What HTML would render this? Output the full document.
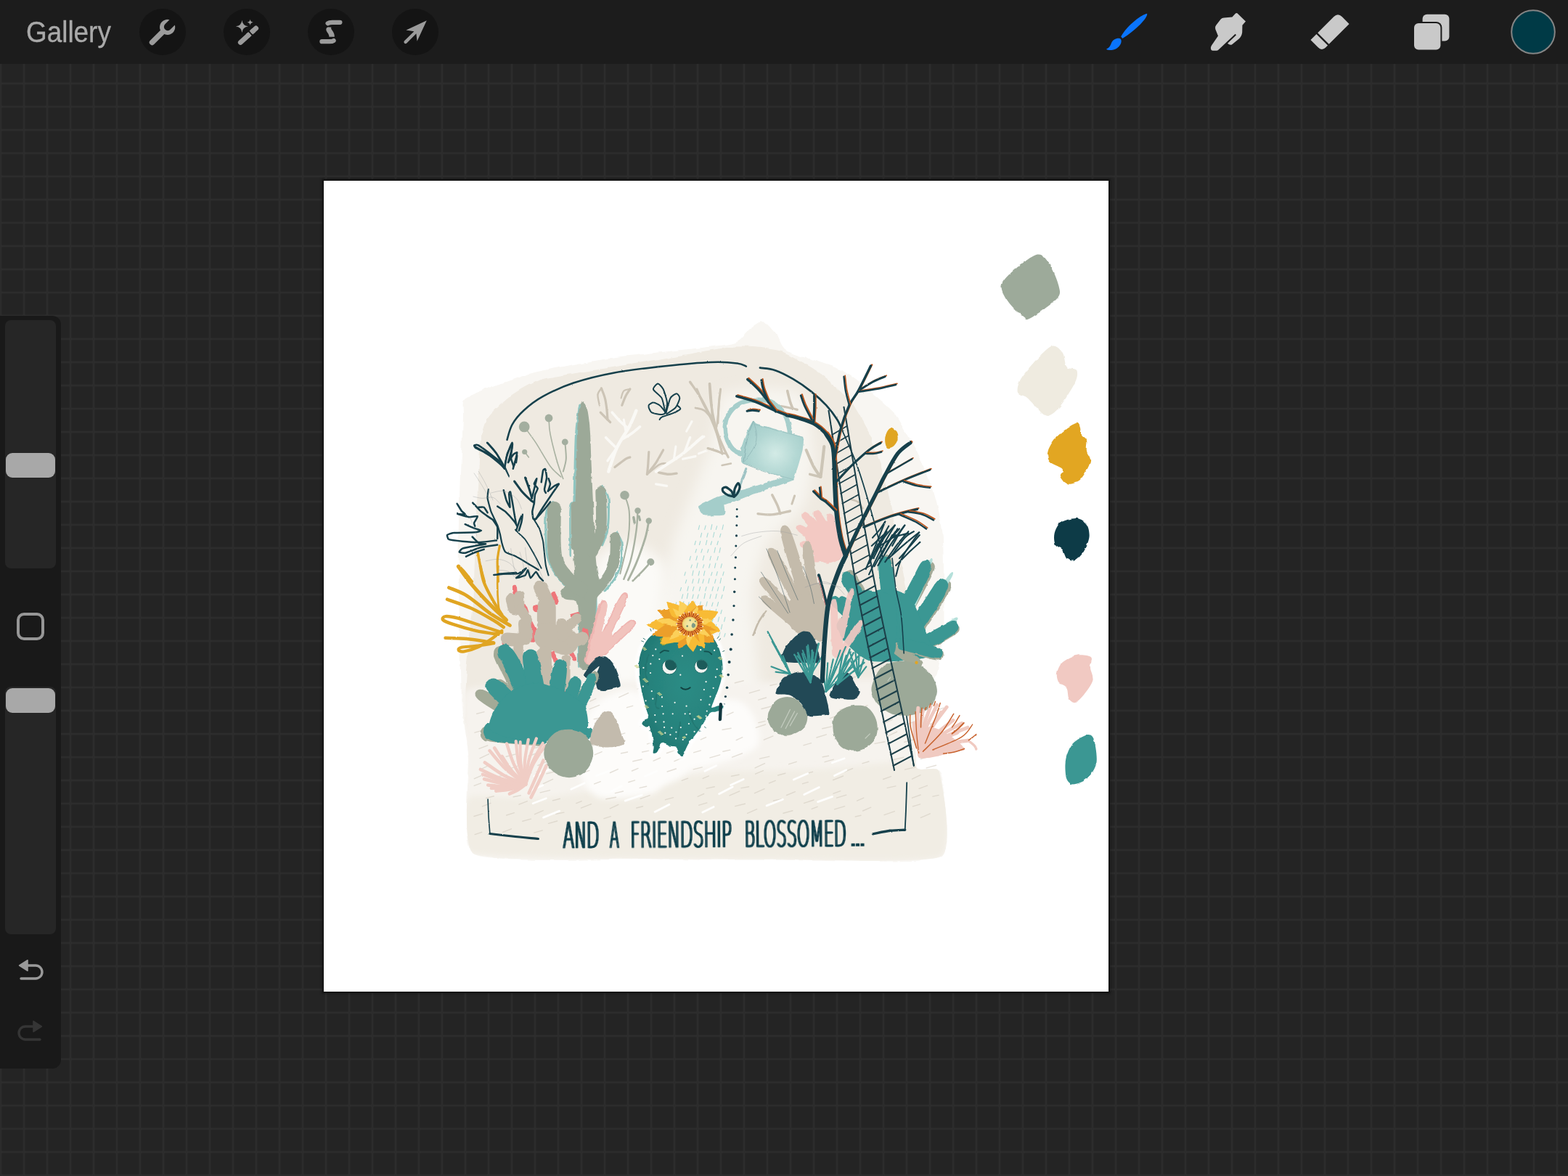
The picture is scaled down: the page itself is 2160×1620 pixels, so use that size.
<!DOCTYPE html>
<html lang="en">
<head>
<meta charset="utf-8">
<title>Procreate – And a friendship blossomed</title>
<style>
*{box-sizing:border-box;margin:0;padding:0}
html,body{width:2160px;height:1620px;overflow:hidden;background:#242424}
body{position:relative;font-family:"Liberation Sans",sans-serif}
#grid{position:absolute;left:0;top:0;width:2160px;height:1620px;
 background-color:#242424;
 background-image:
  linear-gradient(to right,rgba(255,255,255,.012) 0,rgba(255,255,255,.012) 1px,#2c2c2c 1px,#2c2c2c 3px,rgba(255,255,255,.012) 3px,rgba(255,255,255,.012) 4px,transparent 4px),
  linear-gradient(to bottom,rgba(255,255,255,.012) 0,rgba(255,255,255,.012) 1px,#2c2c2c 1px,#2c2c2c 3px,rgba(255,255,255,.012) 3px,rgba(255,255,255,.012) 4px,transparent 4px);
 background-size:32px 32px,32px 32px;
 background-position:-1px 0px,0px 17px;}
#topbar{position:absolute;left:0;top:0;width:2160px;height:88px;background:#1c1c1c}
#gallery{-webkit-text-stroke:0.35px #a9a9a9;position:absolute;left:36px;top:20px;font-size:40px;line-height:48px;color:#a9a9a9;white-space:nowrap;transform:scaleX(0.922);transform-origin:0 0}
.cbtn{position:absolute;top:12px;width:64px;height:64px;border-radius:50%;background:#141414}
#chrome{position:absolute;left:0;top:0;width:2160px;height:1620px;pointer-events:none}
#side{position:absolute;left:-12px;top:435px;width:96px;height:1037px;border-radius:12px;background:#191919}
.track{position:absolute;left:7px;width:70px;border-radius:8px;background:#262626}
.knob{position:absolute;left:8px;width:68px;height:34px;border-radius:9px;background:#a8a8a8}
#sq{position:absolute;left:23px;top:844px;width:38px;height:38px;border-radius:10px;border:4px solid #969696}
#canvas{position:absolute;left:445.5px;top:249px;width:1081.5px;height:1117px;background:#fff;box-shadow:0 0 0 2px #151515,0 0 3px 3px rgba(0,0,0,0.35)}
#art{position:absolute;left:0;top:0;width:2160px;height:1620px}
</style>
</head>
<body>
<div id="grid"></div>
<div id="canvas"></div>
<svg id="art" viewBox="0 0 2160 1620" width="2160" height="1620">
<defs>
<filter id="rough" x="-5%" y="-5%" width="110%" height="110%"><feTurbulence type="fractalNoise" baseFrequency="0.035" numOctaves="3" seed="3" result="n"/><feDisplacementMap in="SourceGraphic" in2="n" scale="7" xChannelSelector="R" yChannelSelector="G"/></filter>
<filter id="soft" x="-20%" y="-20%" width="140%" height="140%"><feGaussianBlur stdDeviation="9"/></filter>
<filter id="soft2" x="-10%" y="-10%" width="120%" height="120%"><feGaussianBlur stdDeviation="4"/></filter>
<filter id="chalk" x="-5%" y="-5%" width="110%" height="110%"><feTurbulence type="fractalNoise" baseFrequency="0.09" numOctaves="2" seed="8" result="n"/><feDisplacementMap in="SourceGraphic" in2="n" scale="3.2" xChannelSelector="R" yChannelSelector="G"/></filter>
<filter id="pencil" x="-5%" y="-5%" width="110%" height="110%"><feTurbulence type="fractalNoise" baseFrequency="0.25" numOctaves="2" seed="5" result="n"/><feDisplacementMap in="SourceGraphic" in2="n" scale="1.6" xChannelSelector="R" yChannelSelector="G"/></filter>
<clipPath id="cv"><rect x="445.5" y="249" width="1081.5" height="1117"/></clipPath>
</defs>
<g clip-path="url(#cv)">
<!--ART-START-->
<path d="M636.9,577.8 C637.8,561.2 633.5,553.2 641.5,547.9 C649.6,542.5 716.6,518.3 733.7,513.7 C750.8,509.1 823.4,496 846.3,492.6 C869.2,489.3 992.8,476.9 1008.1,473.6 C1023.5,470.4 1027.5,456.6 1031,453.9 C1034.5,451.2 1047.1,440.7 1050.4,441.3 C1053.6,441.8 1066.9,457.4 1069.7,461 C1072.5,464.5 1076,479.3 1083.8,483.5 C1091.6,487.7 1150.5,504.4 1163,511.6 C1175.4,518.9 1223.7,558.8 1233.3,570.7 C1243,582.7 1273.6,641.7 1279.1,655.2 C1284.5,668.7 1296.7,714.7 1298.4,732.6 C1300.2,750.5 1300.9,853.4 1300.2,869.8 C1299.5,886.2 1293.3,922.9 1290.3,929.6 C1287.3,936.3 1266.6,939.5 1264.3,950 C1262,960.6 1259.7,1046.9 1262.2,1056.3 C1264.6,1065.7 1291,1053 1293.9,1063.3 C1296.7,1073.7 1315.7,1170.1 1296,1180.1 C1276.3,1190.2 1093.7,1183.4 1057.4,1183.7 C1021.1,1183.9 894.1,1183.5 860.4,1183 C826.7,1182.4 670.7,1188.4 652.8,1176.6 C634.9,1164.9 647.2,1060.5 645.7,1042.2 C644.3,1024 636.4,982.4 635.2,957.8 C634,933.1 631.5,778.3 631.7,746.7 C631.8,715 636.1,594.3 636.9,577.8Z" fill="#f8f6f2" filter="url(#rough)"/>
<path d="M660.5,627 C662.3,603.1 666.2,585.9 670.4,577.8 C674.5,569.7 694.3,551.7 702,546.1 C709.8,540.6 731.2,526.6 747.8,522.2 C764.3,517.8 841.4,506.6 867.4,502.1 C893.4,497.7 987.4,479.7 1008.1,477.9 C1028.9,476 1063,480 1075,483.5 C1087,487 1118.3,506.1 1127.8,512.7 C1137.3,519.3 1162.6,540.3 1170,549.6 C1177.4,559 1196.4,593.3 1201.7,605.9 C1206.9,618.6 1219.3,662.2 1222.8,676.3 C1226.3,690.4 1234,732.6 1236.9,746.7 C1239.7,760.7 1248.5,803 1250.9,817 C1253.4,831.1 1259.9,873.3 1261.5,887.4 C1263.1,901.5 1266.4,943.7 1266.8,957.8 C1267.1,971.9 1293,1020.4 1265,1028.1 C1237,1035.9 1047.9,1035.2 987,1035.2 C926.2,1035.2 689.7,1050 656.3,1028.1 C622.9,1006.3 652.4,857.1 652.8,817 C653.2,776.9 658.8,651 660.5,627Z" fill="#efeae1" filter="url(#rough)"/>
<path d="M994.1,546.1 C1001.8,538.4 1046.1,535.6 1057.4,535.6 C1068.7,535.6 1100.3,537 1106.7,546.1 C1113,555.3 1120.7,611.9 1120.7,627 C1120.7,642.2 1113,685.4 1106.7,697.4 C1100.3,709.4 1064.4,734.7 1057.4,746.7 C1050.4,758.6 1037.7,799.4 1036.3,817 C1034.9,834.6 1041.6,900.8 1043.3,922.6 C1045.1,944.4 1073.6,1023.9 1053.9,1035.2 C1034.2,1046.4 864.9,1046.4 846.3,1035.2 C827.6,1023.9 861.1,944.4 867.4,922.6 C873.7,900.8 903.6,834.6 909.6,817 C915.6,799.4 923,760 927.2,746.7 C931.4,733.3 946.6,696.7 951.9,683.3 C957.1,670 975.8,626.7 980,613 C984.2,599.2 986.3,553.9 994.1,546.1Z" fill="#f7f5f0" filter="url(#soft)"/>
<path d="M818.1,781.9 C822.4,760.7 857.6,746.7 867.4,746.7 C877.3,746.7 913.1,767.8 916.7,781.9 C920.2,795.9 907.5,869.8 902.6,887.4 C897.7,905 875.1,950.7 867.4,957.8 C859.7,964.8 830.1,975.4 825.2,957.8 C820.3,940.2 813.9,803 818.1,781.9Z" fill="#fbfaf7" filter="url(#soft)"/>
<clipPath id="washclip"><path d="M636.9,577.8 C637.8,561.2 633.5,553.2 641.5,547.9 C649.6,542.5 716.6,518.3 733.7,513.7 C750.8,509.1 823.4,496 846.3,492.6 C869.2,489.3 992.8,476.9 1008.1,473.6 C1023.5,470.4 1027.5,456.6 1031,453.9 C1034.5,451.2 1047.1,440.7 1050.4,441.3 C1053.6,441.8 1066.9,457.4 1069.7,461 C1072.5,464.5 1076,479.3 1083.8,483.5 C1091.6,487.7 1150.5,504.4 1163,511.6 C1175.4,518.9 1223.7,558.8 1233.3,570.7 C1243,582.7 1273.6,641.7 1279.1,655.2 C1284.5,668.7 1296.7,714.7 1298.4,732.6 C1300.2,750.5 1300.9,853.4 1300.2,869.8 C1299.5,886.2 1293.3,922.9 1290.3,929.6 C1287.3,936.3 1266.6,939.5 1264.3,950 C1262,960.6 1259.7,1046.9 1262.2,1056.3 C1264.6,1065.7 1291,1053 1293.9,1063.3 C1296.7,1073.7 1315.7,1170.1 1296,1180.1 C1276.3,1190.2 1093.7,1183.4 1057.4,1183.7 C1021.1,1183.9 894.1,1183.5 860.4,1183 C826.7,1182.4 670.7,1188.4 652.8,1176.6 C634.9,1164.9 647.2,1060.5 645.7,1042.2 C644.3,1024 636.4,982.4 635.2,957.8 C634,933.1 631.5,778.3 631.7,746.7 C631.8,715 636.1,594.3 636.9,577.8Z" fill="#000"/></clipPath><g clip-path="url(#washclip)">
<path d="M642.2,950.7 C653.4,942.3 788.1,937.1 811.1,936.7 C834.1,936.2 965.9,943.7 987,943.7 C1008.1,943.7 1107,936.4 1127.8,936.7 C1148.5,936.9 1287.2,931 1298.4,947.2 C1309.6,963.5 1312,1164.4 1296,1180.1 C1279.9,1195.9 1100.3,1183.9 1057.4,1183.7 C1014.5,1183.4 680.3,1184.7 652.8,1176.6 C625.2,1168.6 644.7,1078.4 644,1063.3 C643.3,1048.3 631.1,959.2 642.2,950.7Z" fill="#f6f3ee" filter="url(#soft2)"/>
<path d="M645.7,1098.5 C651.6,1093.4 727.4,1101.2 740.7,1100.3 C754.1,1099.3 829.9,1086.9 846.3,1084.4 C862.7,1082 968.3,1065 987,1063.3 C1005.8,1061.7 1107,1060.8 1127.8,1059.8 C1148.5,1058.9 1287.2,1041.2 1298.4,1049.3 C1309.7,1057.3 1312.7,1171.2 1296.7,1180.1 C1280.6,1189.1 1100.3,1183.9 1057.4,1183.7 C1014.5,1183.4 680.2,1182.3 652.8,1176.6 C625.3,1171 639.9,1103.6 645.7,1098.5Z" fill="#f1ede4" filter="url(#soft2)"/>
<path d="M818.1,971.9 C827.5,961.5 854.3,949.8 867.4,950.7 C880.5,951.7 905.4,965.8 916.7,978.9 C927.9,992 951.9,1035.7 951.9,1049.3 C951.9,1062.9 933.6,1076.2 916.7,1080.9 C899.8,1085.6 841.1,1091.5 825.2,1084.4 C809.2,1077.4 798,1043.2 797,1028.1 C796.1,1013.1 808.8,982.2 818.1,971.9Z" fill="#fdfcfa" filter="url(#soft2)"/>
<path d="M860.4,978.9 C880.1,968.1 990.8,958.2 1015.2,964.8 C1039.6,971.4 1051.8,1015.5 1043.3,1028.1 C1034.9,1040.8 975.3,1057.5 951.9,1059.8 C928.4,1062.2 879.6,1056.5 867.4,1045.7 C855.2,1035 840.7,989.7 860.4,978.9Z" fill="#fdfcfa" filter="url(#soft2)"/>
<path d="M797,1056.3 C799.9,1046.9 830.3,1029.1 846.3,1028.1 C862.2,1027.2 909.2,1040.8 916.7,1049.3 C924.2,1057.7 914.8,1084.9 902.6,1091.5 C890.4,1098 839.3,1103.2 825.2,1098.5 C811.1,1093.8 794.2,1065.7 797,1056.3Z" fill="#fdfcfa" filter="url(#soft2)"/>
</g>
<g stroke="#d3ccc0" stroke-width="1.4" stroke-linecap="round" opacity="0.6"><line x1="656.3" y1="957.5" x2="668.8" y2="953.9"/><line x1="703.9" y1="955.8" x2="717.3" y2="951.5"/><line x1="732.2" y1="951.6" x2="742.3" y2="948.5"/><line x1="766" y1="956.7" x2="774.7" y2="952.7"/><line x1="815.7" y1="950.1" x2="827" y2="944.7"/><line x1="877.9" y1="949.1" x2="892.1" y2="944.3"/><line x1="918" y1="949.7" x2="926.3" y2="945.8"/><line x1="965.4" y1="948" x2="974.6" y2="946.3"/><line x1="1012.3" y1="940.7" x2="1024.2" y2="937.7"/><line x1="1060.9" y1="944.2" x2="1070" y2="942.4"/><line x1="1098" y1="943.5" x2="1108.6" y2="939.6"/><line x1="1126.8" y1="942.3" x2="1135" y2="940.2"/><line x1="1167.1" y1="935.3" x2="1178.7" y2="932.3"/><line x1="1208.9" y1="933.2" x2="1220.5" y2="928.3"/><line x1="1259.9" y1="932.1" x2="1269.9" y2="929.2"/><line x1="670" y1="971" x2="682.9" y2="966.3"/><line x1="762.9" y1="965.2" x2="776.8" y2="960.6"/><line x1="812.7" y1="966.2" x2="820.8" y2="962.4"/><line x1="852.7" y1="960.7" x2="865.6" y2="954.7"/><line x1="1032.4" y1="954.7" x2="1046.4" y2="950.6"/><line x1="1081.5" y1="951.7" x2="1091.1" y2="948.7"/><line x1="1109.9" y1="948.8" x2="1122.7" y2="946.4"/><line x1="1153.9" y1="948.7" x2="1167.6" y2="944.6"/><line x1="1205.6" y1="945.5" x2="1219.1" y2="939.5"/><line x1="1234.4" y1="949.8" x2="1244.6" y2="945.3"/><line x1="1265.7" y1="945.9" x2="1276.8" y2="941.7"/><line x1="656.7" y1="983.3" x2="667" y2="980.6"/><line x1="702.3" y1="983.2" x2="716.4" y2="979.8"/><line x1="741.9" y1="977.3" x2="749.9" y2="975.3"/><line x1="776.3" y1="974.9" x2="788.5" y2="970.2"/><line x1="812" y1="976.8" x2="825.7" y2="971.4"/><line x1="863.5" y1="974.7" x2="871.7" y2="972.3"/><line x1="915.5" y1="972.8" x2="925.3" y2="970.2"/><line x1="945.2" y1="970.4" x2="959" y2="967.9"/><line x1="1044.7" y1="964.1" x2="1055.5" y2="961"/><line x1="1083.8" y1="965.2" x2="1094.8" y2="961.2"/><line x1="1159.1" y1="962.1" x2="1169.5" y2="957.8"/><line x1="1202.8" y1="961" x2="1216.6" y2="954.6"/><line x1="1248.6" y1="960.2" x2="1262.8" y2="956.7"/><line x1="736.9" y1="991.6" x2="746.4" y2="988"/><line x1="778.6" y1="993.9" x2="786.4" y2="990.8"/><line x1="818.2" y1="990.6" x2="826.6" y2="989"/><line x1="890.7" y1="983.8" x2="900.1" y2="981.7"/><line x1="963.4" y1="981.8" x2="974.1" y2="978.7"/><line x1="1001" y1="985.1" x2="1010.1" y2="981.2"/><line x1="1049.1" y1="976.5" x2="1063.6" y2="972.7"/><line x1="1078.2" y1="976.9" x2="1090.3" y2="973.8"/><line x1="1157.1" y1="977.9" x2="1165.6" y2="975.8"/><line x1="1186.4" y1="974.8" x2="1195.1" y2="971.7"/><line x1="1234.3" y1="975.2" x2="1248.3" y2="972.4"/><line x1="1276.8" y1="972.6" x2="1285" y2="970.9"/><line x1="654" y1="1009.2" x2="667.5" y2="1005.3"/><line x1="701.9" y1="1005.4" x2="711.5" y2="1001.6"/><line x1="745.5" y1="1001.7" x2="758.8" y2="995.5"/><line x1="790.3" y1="999.8" x2="798.9" y2="996.4"/><line x1="830.7" y1="998.9" x2="843.2" y2="995.4"/><line x1="881.7" y1="1000.6" x2="893" y2="996.7"/><line x1="922.8" y1="995.6" x2="931" y2="993.8"/><line x1="959.6" y1="993.9" x2="971" y2="990.6"/><line x1="1044.8" y1="995.6" x2="1054" y2="993.4"/><line x1="1143.1" y1="989.6" x2="1150.4" y2="986.9"/><line x1="1189.8" y1="990" x2="1201.5" y2="984.9"/><line x1="1239.7" y1="985.4" x2="1248.9" y2="983.7"/><line x1="1286.1" y1="980.2" x2="1299.7" y2="975.1"/><line x1="664.2" y1="1018.1" x2="677.4" y2="1013.2"/><line x1="702.7" y1="1020.3" x2="713.8" y2="1015"/><line x1="733.5" y1="1020.7" x2="747.7" y2="1016.1"/><line x1="764.7" y1="1017.6" x2="773.8" y2="1014.5"/><line x1="811.4" y1="1014.3" x2="823.2" y2="1009.5"/><line x1="851.6" y1="1012.9" x2="860.9" y2="1009.9"/><line x1="900" y1="1012.9" x2="911.9" y2="1010.1"/><line x1="952.6" y1="1005.6" x2="962.6" y2="1002"/><line x1="995.1" y1="1005.3" x2="1007.1" y2="1003.2"/><line x1="1041.3" y1="1002.4" x2="1054.6" y2="998"/><line x1="1089.8" y1="1002.9" x2="1100.8" y2="999.1"/><line x1="1132.7" y1="1003.7" x2="1145.5" y2="1000.9"/><line x1="1167" y1="1003.6" x2="1180.4" y2="1000.4"/><line x1="1216" y1="997.2" x2="1229.3" y2="991.1"/><line x1="1247.8" y1="998.6" x2="1260.9" y2="993.3"/><line x1="1281.3" y1="997.5" x2="1290.2" y2="994.6"/><line x1="659.9" y1="1031.3" x2="671.8" y2="1026.9"/><line x1="733.7" y1="1031.2" x2="741.4" y2="1029.2"/><line x1="774.2" y1="1029.9" x2="788.4" y2="1024.7"/><line x1="811.3" y1="1028.4" x2="821.4" y2="1025.9"/><line x1="852.1" y1="1022.4" x2="861.3" y2="1020.2"/><line x1="891.5" y1="1024.8" x2="900.5" y2="1022.1"/><line x1="931.7" y1="1021.4" x2="940.5" y2="1019.3"/><line x1="965.2" y1="1018.8" x2="972.6" y2="1015.7"/><line x1="1014.2" y1="1019.6" x2="1022.8" y2="1015.7"/><line x1="1052.3" y1="1019.2" x2="1064.9" y2="1013.9"/><line x1="1082.5" y1="1013.7" x2="1091.8" y2="1011"/><line x1="1124.9" y1="1016" x2="1138.3" y2="1011.8"/><line x1="1160.5" y1="1012.5" x2="1170.5" y2="1010.5"/><line x1="1189.5" y1="1014.2" x2="1200.9" y2="1011.9"/><line x1="1222.1" y1="1014.3" x2="1235.7" y2="1008"/><line x1="1268" y1="1008" x2="1278.9" y2="1003.3"/><line x1="661" y1="1044.6" x2="673.6" y2="1038.7"/><line x1="697.1" y1="1042.2" x2="710.6" y2="1038.9"/><line x1="728.1" y1="1041.5" x2="740.2" y2="1037.4"/><line x1="777.5" y1="1042.4" x2="788.2" y2="1039.5"/><line x1="819.4" y1="1039.7" x2="829.1" y2="1035.6"/><line x1="855.6" y1="1037.8" x2="864.6" y2="1036"/><line x1="884.6" y1="1036" x2="893.8" y2="1034.1"/><line x1="918.4" y1="1037.5" x2="930.5" y2="1033.4"/><line x1="955.8" y1="1036.7" x2="965.3" y2="1033.8"/><line x1="995.8" y1="1035.2" x2="1005.8" y2="1033.1"/><line x1="1107.1" y1="1026.7" x2="1117.5" y2="1023.7"/><line x1="1205" y1="1024.4" x2="1218.9" y2="1021.8"/><line x1="1245.8" y1="1022.2" x2="1260.5" y2="1018.2"/><line x1="1281.2" y1="1018.8" x2="1289.4" y2="1015.8"/><line x1="662.4" y1="1059.7" x2="674.7" y2="1053.9"/><line x1="703.1" y1="1058.6" x2="712.6" y2="1055.3"/><line x1="740.9" y1="1054.5" x2="753.1" y2="1049.1"/><line x1="789.6" y1="1054.5" x2="803.8" y2="1048.8"/><line x1="871.9" y1="1048.8" x2="884.2" y2="1046"/><line x1="900.1" y1="1048.1" x2="909.6" y2="1044"/><line x1="928.9" y1="1048.6" x2="941.7" y2="1043.1"/><line x1="977.9" y1="1043.8" x2="991.7" y2="1039.8"/><line x1="1008.5" y1="1043.1" x2="1022.4" y2="1037.8"/><line x1="1046.4" y1="1045.1" x2="1059.9" y2="1042.1"/><line x1="1133.2" y1="1042.8" x2="1141.5" y2="1041.3"/><line x1="1228.3" y1="1037.6" x2="1241.7" y2="1031.4"/><line x1="653.4" y1="1072.7" x2="662.7" y2="1068.6"/><line x1="683.1" y1="1070.1" x2="698" y2="1067.4"/><line x1="720.2" y1="1068.7" x2="731.9" y2="1064.5"/><line x1="753" y1="1065.8" x2="762.7" y2="1063.4"/><line x1="803.6" y1="1064.4" x2="812" y2="1061.4"/><line x1="840.4" y1="1064.5" x2="851.3" y2="1059.6"/><line x1="870.5" y1="1062" x2="879.1" y2="1058.4"/><line x1="919.2" y1="1063" x2="931.4" y2="1059"/><line x1="955.2" y1="1059.9" x2="967.3" y2="1056.9"/><line x1="1040.1" y1="1057.9" x2="1053.5" y2="1051.7"/><line x1="1086.7" y1="1052.7" x2="1097.2" y2="1049.3"/><line x1="1136.1" y1="1049.7" x2="1148.4" y2="1046.2"/><line x1="1188.1" y1="1051.7" x2="1197" y2="1049"/><line x1="1229.9" y1="1046.8" x2="1244.8" y2="1043.3"/><line x1="1268.4" y1="1045.5" x2="1281" y2="1042.1"/><line x1="653.1" y1="1082.3" x2="662.5" y2="1078.9"/><line x1="705.7" y1="1084.8" x2="720.1" y2="1080.7"/><line x1="748.3" y1="1079.7" x2="761.6" y2="1073.4"/><line x1="818.7" y1="1079.9" x2="827.3" y2="1076.7"/><line x1="865.9" y1="1077.5" x2="874.6" y2="1074.9"/><line x1="939.1" y1="1075.3" x2="947.6" y2="1072.2"/><line x1="968.2" y1="1072.4" x2="976.5" y2="1068.9"/><line x1="1007.4" y1="1069.2" x2="1018.1" y2="1067.2"/><line x1="1040.6" y1="1066.2" x2="1051.4" y2="1061.6"/><line x1="1071.6" y1="1068" x2="1081.9" y2="1065.2"/><line x1="1111.5" y1="1065.4" x2="1119.6" y2="1063.3"/><line x1="1163.7" y1="1063" x2="1174.6" y2="1058.6"/><line x1="1246.6" y1="1060.1" x2="1260.8" y2="1056.7"/><line x1="1276.1" y1="1057.9" x2="1289.5" y2="1054.3"/><line x1="669.6" y1="1099.4" x2="680.3" y2="1096.8"/><line x1="707.1" y1="1097.8" x2="717.3" y2="1095.8"/><line x1="744.1" y1="1091.9" x2="757.6" y2="1088.6"/><line x1="847.4" y1="1092.6" x2="858.5" y2="1090"/><line x1="881.2" y1="1085.4" x2="890.7" y2="1083.2"/><line x1="973" y1="1086.1" x2="984.3" y2="1083.8"/><line x1="1021" y1="1085.6" x2="1031.6" y2="1083.7"/><line x1="1059.4" y1="1078.8" x2="1068.2" y2="1075.3"/><line x1="1105.5" y1="1079.7" x2="1113.3" y2="1077.4"/><line x1="1147.6" y1="1074.5" x2="1161.5" y2="1069"/><line x1="1216.6" y1="1073.5" x2="1227.4" y2="1069.6"/><line x1="1256.5" y1="1073.2" x2="1268" y2="1067.7"/><line x1="664.4" y1="1110.8" x2="675.9" y2="1106.4"/><line x1="715" y1="1108.2" x2="726.4" y2="1103.7"/><line x1="761.5" y1="1102.8" x2="771.3" y2="1100.3"/><line x1="793.8" y1="1106.6" x2="801.2" y2="1103.6"/><line x1="834.8" y1="1100.8" x2="848.4" y2="1098.3"/><line x1="882.2" y1="1100.4" x2="895.2" y2="1095.6"/><line x1="916.5" y1="1101.7" x2="927.6" y2="1098.6"/><line x1="961.1" y1="1097.3" x2="969.7" y2="1093.5"/><line x1="1005" y1="1095.9" x2="1018.8" y2="1089.9"/><line x1="1039.5" y1="1092.6" x2="1053.1" y2="1086.7"/><line x1="1083.5" y1="1095.5" x2="1095.4" y2="1090.6"/><line x1="1148" y1="1093.2" x2="1157.8" y2="1089.7"/><line x1="1222.2" y1="1085.4" x2="1233.9" y2="1082.9"/><line x1="1266" y1="1086.3" x2="1277.5" y2="1082.2"/><line x1="653" y1="1124.5" x2="664.9" y2="1120.9"/><line x1="697.7" y1="1123" x2="708.4" y2="1119.6"/><line x1="736.6" y1="1121.7" x2="748.2" y2="1116.6"/><line x1="765.8" y1="1121.3" x2="777" y2="1119.1"/><line x1="800.4" y1="1113.1" x2="814.4" y2="1107.7"/><line x1="840.2" y1="1113.8" x2="851.9" y2="1108.3"/><line x1="876.8" y1="1113" x2="885.6" y2="1110.7"/><line x1="962.8" y1="1109.2" x2="973.9" y2="1105.9"/><line x1="1012.7" y1="1110.6" x2="1026.3" y2="1107.3"/><line x1="1065.4" y1="1103" x2="1076.6" y2="1100.9"/><line x1="1107.6" y1="1106.3" x2="1121" y2="1102"/><line x1="1152.4" y1="1099.1" x2="1165.8" y2="1095.2"/><line x1="1180.6" y1="1103.2" x2="1189.8" y2="1099.1"/><line x1="1256.4" y1="1099.2" x2="1268.1" y2="1095"/><line x1="1284.9" y1="1097.1" x2="1293.1" y2="1095.4"/><line x1="719.8" y1="1131.3" x2="731.5" y2="1128.1"/><line x1="755.6" y1="1134.4" x2="767.7" y2="1131"/><line x1="832" y1="1127.6" x2="841.3" y2="1124.7"/><line x1="1029.6" y1="1120.4" x2="1042.7" y2="1114.7"/><line x1="1079" y1="1120.2" x2="1091.9" y2="1116.7"/><line x1="1118.1" y1="1114.4" x2="1126.1" y2="1111.4"/><line x1="1149.5" y1="1114.9" x2="1163.7" y2="1110.7"/><line x1="1188.6" y1="1117" x2="1199.7" y2="1112.2"/><line x1="1257.4" y1="1110.8" x2="1267.5" y2="1107.8"/><line x1="654.1" y1="1149.6" x2="663.7" y2="1146.3"/><line x1="692.5" y1="1146.5" x2="704.4" y2="1141.8"/><line x1="735.8" y1="1147.1" x2="747.3" y2="1143.9"/><line x1="1178.3" y1="1125" x2="1186" y2="1123.2"/><line x1="1218" y1="1122.6" x2="1232.4" y2="1117.6"/><line x1="1268.4" y1="1126.4" x2="1281.2" y2="1120.8"/></g>
<g stroke="#fefefd" stroke-width="2.8" stroke-linecap="round"><line x1="736" y1="1069.3" x2="757.3" y2="1059.7"/><line x1="821.7" y1="1068.5" x2="839.9" y2="1061.6"/><line x1="888.4" y1="1069.5" x2="904.7" y2="1062.3"/><line x1="970.9" y1="1062.2" x2="986.6" y2="1054.7"/><line x1="1146.3" y1="1050.8" x2="1163.2" y2="1044.7"/><line x1="732.5" y1="1088.4" x2="747.9" y2="1081.7"/><line x1="786.7" y1="1087.2" x2="805.2" y2="1078.8"/><line x1="842" y1="1090.3" x2="856.3" y2="1082.8"/><line x1="1006.6" y1="1081.5" x2="1024.2" y2="1073.4"/><line x1="1093.2" y1="1074" x2="1112.7" y2="1065.5"/><line x1="1149.5" y1="1068.5" x2="1165.7" y2="1060.8"/><line x1="734.1" y1="1106.8" x2="752.4" y2="1099.8"/><line x1="861.2" y1="1103.1" x2="884.2" y2="1095.1"/><line x1="990.5" y1="1093.7" x2="1009.2" y2="1084"/><line x1="1107.8" y1="1094.6" x2="1128.4" y2="1084.5"/><line x1="748.6" y1="1126.1" x2="770.6" y2="1117.1"/><line x1="902" y1="1118.4" x2="922" y2="1108.3"/><line x1="967.8" y1="1119" x2="983.2" y2="1111.5"/><line x1="1056.1" y1="1109.9" x2="1078.4" y2="1101.2"/><line x1="1126.5" y1="1104.6" x2="1146.6" y2="1097.4"/></g>
<g opacity="0.95" filter="url(#pencil)"><path d="M828.4,534.8 C829.2,537.1 832.1,543.7 833.3,548.4 C834.6,553.1 835.2,558.3 835.8,563.2 C836.4,568.1 836.8,575.6 837,578" fill="none" stroke="#cbc3b4" stroke-width="3.2" stroke-linecap="round" stroke-linejoin="round"/>
<path d="M828.4,534.8 C827.6,536.3 823.9,539.5 823.5,543.5 C823,547.4 825.5,555.8 825.9,558.3" fill="none" stroke="#cbc3b4" stroke-width="2.4" stroke-linecap="round" stroke-linejoin="round"/>
<path d="M867.9,536 C866.9,537.7 863.6,542.2 861.7,545.9 C859.9,549.6 857.6,556.2 856.8,558.3" fill="none" stroke="#cbc3b4" stroke-width="3.2" stroke-linecap="round" stroke-linejoin="round"/>
<path d="M867.9,536 C866.5,536.5 861.3,536.5 859.3,538.5 C857.2,540.6 856.2,546.7 855.6,548.4" fill="none" stroke="#cbc3b4" stroke-width="2.2" stroke-linecap="round" stroke-linejoin="round"/>
<path d="M827.2,568.1 C828.8,569.8 834.8,575.8 837,578 C839.3,580.3 840.1,581.1 840.7,581.7" fill="none" stroke="#cbc3b4" stroke-width="3.2" stroke-linecap="round" stroke-linejoin="round"/>
<path d="M893.8,622.5 C893.6,625.8 893,637.1 892.6,642.2 C892.2,647.4 891.6,651.5 891.4,653.3" fill="none" stroke="#cbc3b4" stroke-width="3.2" stroke-linecap="round" stroke-linejoin="round"/>
<path d="M913.6,620 C911.9,622.9 907.4,631.7 903.7,637.3 C900,642.8 893.4,650.7 891.4,653.3" fill="none" stroke="#cbc3b4" stroke-width="3.2" stroke-linecap="round" stroke-linejoin="round"/>
<path d="M891.4,653.3 C894.2,651.1 904.1,642.2 908.6,639.8 C913.2,637.3 916.9,638.7 918.5,638.5" fill="none" stroke="#cbc3b4" stroke-width="2.6" stroke-linecap="round" stroke-linejoin="round"/>
<path d="M846.9,643.5 C849.4,641.6 858.2,634.6 861.7,632.3 C865.2,630.1 866.9,630.3 867.9,629.9" fill="none" stroke="#cbc3b4" stroke-width="3.2" stroke-linecap="round" stroke-linejoin="round"/>
<path d="M907.4,650.9 C909.7,651.3 916.9,653.1 921,653.3 C925.1,653.5 930.2,652.3 932.1,652.1" fill="none" stroke="#cbc3b4" stroke-width="3.4" stroke-linecap="round" stroke-linejoin="round"/>
<path d="M950.6,526.2 C953.1,529.9 960.5,539.8 965.4,548.4 C970.4,557 976.5,569.8 980.2,578 C984,586.3 985.2,590 987.7,597.8 C990.1,605.6 993.8,620.4 995.1,624.9" fill="none" stroke="#cbc3b4" stroke-width="3.4" stroke-linecap="round" stroke-linejoin="round"/>
<path d="M977.8,528.6 C978.2,533.6 979.6,550 980.2,558.3 C980.9,566.5 981.3,574.7 981.5,578" fill="none" stroke="#cbc3b4" stroke-width="3.2" stroke-linecap="round" stroke-linejoin="round"/>
<path d="M958,562 C960.1,562.6 966.5,563 970.4,565.7 C974.3,568.4 979.6,576 981.5,578" fill="none" stroke="#cbc3b4" stroke-width="2.8" stroke-linecap="round" stroke-linejoin="round"/>
<path d="M992.6,536 C992.2,539.8 990.7,550.5 990.1,558.3 C989.5,566.1 989.1,578.8 988.9,583" fill="none" stroke="#cbc3b4" stroke-width="3" stroke-linecap="round" stroke-linejoin="round"/>
<path d="M975.3,617.5 C977.4,618.1 984.4,620 987.7,621.2 C990.9,622.5 993.8,624.3 995.1,624.9" fill="none" stroke="#cbc3b4" stroke-width="3" stroke-linecap="round" stroke-linejoin="round"/>
<path d="M977.3,528.6 C977.7,533.6 978.1,547.6 979.8,558.3 C981.4,569 984.3,583 987.2,592.8 C990,602.7 994.4,611.4 997,617.5 C999.7,623.7 1002.2,627.8 1003.2,629.9" fill="none" stroke="#cbc3b4" stroke-width="3.2" stroke-linecap="round" stroke-linejoin="round"/>
<path d="M960,536 C961.6,539.8 966.2,551.3 969.9,558.3 C973.6,565.3 980.2,574.7 982.2,578" fill="none" stroke="#cbc3b4" stroke-width="3" stroke-linecap="round" stroke-linejoin="round"/>
<path d="M990.9,548.4 C990.7,551.7 990.2,561.6 989.6,568.1 C989,574.7 987.6,584.6 987.2,587.9" fill="none" stroke="#cbc3b4" stroke-width="2.6" stroke-linecap="round" stroke-linejoin="round"/>
<path d="M974.8,617.5 C977.3,618.4 985.5,621.2 989.6,622.5 C993.7,623.7 997.9,624.5 999.5,624.9" fill="none" stroke="#cbc3b4" stroke-width="2.6" stroke-linecap="round" stroke-linejoin="round"/>
<path d="M994.6,641 L1006.9,638.5" fill="none" stroke="#cbc3b4" stroke-width="2.6" stroke-linecap="round" stroke-linejoin="round"/>
<path d="M1084.7,538.5 C1085.3,541 1087.2,549.2 1088.4,553.3 C1089.6,557.4 1091.5,561.6 1092.1,563.2" fill="none" stroke="#cbc3b4" stroke-width="3.6" stroke-linecap="round" stroke-linejoin="round"/>
<path d="M1076,559.5 C1078.1,559.9 1084.7,561.2 1088.4,562 C1092.1,562.8 1096.6,564 1098.3,564.4" fill="none" stroke="#cbc3b4" stroke-width="3.2" stroke-linecap="round" stroke-linejoin="round"/>
<path d="M1135.3,615.1 C1134.9,618.8 1133.7,630.3 1132.8,637.3 C1132,644.3 1130.8,653.7 1130.4,657" fill="none" stroke="#cbc3b4" stroke-width="4.2" stroke-linecap="round" stroke-linejoin="round"/>
<path d="M1110.6,620 C1112.3,623.7 1117.2,636 1120.5,642.2 C1123.8,648.4 1128.7,654.6 1130.4,657" fill="none" stroke="#cbc3b4" stroke-width="4" stroke-linecap="round" stroke-linejoin="round"/>
<path d="M1115.6,653.3 L1130.4,657" fill="none" stroke="#cbc3b4" stroke-width="3.4" stroke-linecap="round" stroke-linejoin="round"/>
<path d="M1063.7,681.7 C1064.9,684.2 1069.3,692.2 1071.1,696.5 C1073,700.9 1074.2,705.8 1074.8,707.7" fill="none" stroke="#cbc3b4" stroke-width="3.4" stroke-linecap="round" stroke-linejoin="round"/>
<path d="M1094.6,683 L1090.9,694.1" fill="none" stroke="#cbc3b4" stroke-width="3" stroke-linecap="round" stroke-linejoin="round"/>
<path d="M1044,707.7 C1047.2,707.9 1056.3,709.5 1063.7,708.9 C1071.1,708.3 1084.3,704.8 1088.4,704" fill="none" stroke="#cbc3b4" stroke-width="3.4" stroke-linecap="round" stroke-linejoin="round"/>
<path d="M1172.3,687.9 C1174,688.5 1179.5,689.5 1182.2,691.6 C1184.9,693.7 1187.4,698.8 1188.4,700.2" fill="none" stroke="#cbc3b4" stroke-width="2.6" stroke-linecap="round" stroke-linejoin="round"/>
<path d="M876.5,565.7 C874.9,569.4 871.2,579.3 866.7,587.9 C862.1,596.5 854.1,607.2 849.4,617.5 C844.7,627.8 840.1,644.3 838.3,649.6" fill="none" stroke="#fbfaf7" stroke-width="4.4" stroke-linecap="round" stroke-linejoin="round"/>
<path d="M843.2,568.1 C845.1,570.2 850.6,576.8 854.3,580.5 C858,584.2 863.6,588.7 865.4,590.4" fill="none" stroke="#fbfaf7" stroke-width="3.6" stroke-linecap="round" stroke-linejoin="round"/>
<path d="M881.5,587.9 C879.4,589.5 873.3,594.9 869.1,597.8 C865,600.7 858.8,604 856.8,605.2" fill="none" stroke="#fbfaf7" stroke-width="3.6" stroke-linecap="round" stroke-linejoin="round"/>
<path d="M834.6,602.7 C836.6,604.8 844.4,612.6 846.9,615.1 C849.4,617.5 849,617.1 849.4,617.5" fill="none" stroke="#fbfaf7" stroke-width="3.6" stroke-linecap="round" stroke-linejoin="round"/>
<path d="M849.4,617.5 L837,634.8" fill="none" stroke="#fbfaf7" stroke-width="3.4" stroke-linecap="round" stroke-linejoin="round"/>
<path d="M859.3,578 L861.7,592.8" fill="none" stroke="#fbfaf7" stroke-width="3" stroke-linecap="round" stroke-linejoin="round"/>
<path d="M967.9,601.5 C963.4,605.4 949,618.6 940.7,624.9 C932.5,631.3 924.7,635.6 918.5,639.8 C912.3,643.9 906.2,648 903.7,649.6" fill="none" stroke="#fbfaf7" stroke-width="4" stroke-linecap="round" stroke-linejoin="round"/>
<path d="M950.6,602.7 L943.2,622.5" fill="none" stroke="#fbfaf7" stroke-width="3.4" stroke-linecap="round" stroke-linejoin="round"/>
<path d="M958,628.6 L940.7,632.3" fill="none" stroke="#fbfaf7" stroke-width="3.2" stroke-linecap="round" stroke-linejoin="round"/>
<path d="M930.9,615.1 L928.4,632.3" fill="none" stroke="#fbfaf7" stroke-width="3" stroke-linecap="round" stroke-linejoin="round"/>
<path d="M903.7,666.9 L918.5,669.4" fill="none" stroke="#fbfaf7" stroke-width="3.4" stroke-linecap="round" stroke-linejoin="round"/>
<path d="M945.7,594.1 L953.1,580.5" fill="none" stroke="#fbfaf7" stroke-width="3" stroke-linecap="round" stroke-linejoin="round"/>
<path d="M960,607.7 L969.9,601.5" fill="none" stroke="#fbfaf7" stroke-width="3.2" stroke-linecap="round" stroke-linejoin="round"/>
<path d="M962.5,624.9 L972.3,621.2" fill="none" stroke="#fbfaf7" stroke-width="3" stroke-linecap="round" stroke-linejoin="round"/></g>
<g filter="url(#pencil)"><path d="M722.2,587.9 C724.9,591.6 732.3,601.1 738.3,610.1 C744.2,619.2 752.3,634.4 758,642.2 C763.8,650 770.4,654.6 772.8,657" fill="none" stroke="#a9b2a2" stroke-width="1.6" stroke-linecap="round" stroke-linejoin="round"/>
<circle cx="722.2" cy="587.9" r="7.4" fill="#a3ae9f"/>
<path d="M756,576 C756.4,579.7 756,587.6 758,597.8 C760,608 764.9,627 767.9,637.3 C770.9,647.6 774.5,655.8 775.8,659.5" fill="none" stroke="#a9b2a2" stroke-width="1.6" stroke-linecap="round" stroke-linejoin="round"/>
<circle cx="756" cy="576" r="5.4" fill="#a3ae9f"/>
<path d="M778.3,608.9 C778.5,612.8 780.2,625.6 779.8,632.3 C779.3,639.1 776.5,646.7 775.8,649.6" fill="none" stroke="#a9b2a2" stroke-width="2" stroke-linecap="round" stroke-linejoin="round"/>
<circle cx="778.3" cy="608.9" r="4.4" fill="#a3ae9f"/>
<path d="M722.7,622.5 L728.4,629.9" fill="none" stroke="#a9b2a2" stroke-width="1.6" stroke-linecap="round" stroke-linejoin="round"/>
<circle cx="722.7" cy="622.5" r="3.6" fill="#a3ae9f"/>
<path d="M860.5,682.2 C861.5,685.8 865.8,694.2 866.7,704 C867.5,713.7 867.5,726.6 865.4,741 C863.4,755.4 856.2,782.1 854.3,790.4" fill="none" stroke="#a9b2a2" stroke-width="2" stroke-linecap="round" stroke-linejoin="round"/>
<circle cx="860.5" cy="682.2" r="6.2" fill="#a3ae9f"/>
<path d="M878.5,703.5 C878.2,708.1 878.1,719.9 876.5,731.1 C875,742.3 872,759.5 869.1,770.6 C866.3,781.7 860.9,793.3 859.3,797.8" fill="none" stroke="#a9b2a2" stroke-width="2.4" stroke-linecap="round" stroke-linejoin="round"/>
<circle cx="878.5" cy="703.5" r="4.2" fill="#a3ae9f"/>
<path d="M893.8,717.5 C893,721.4 891.8,731.3 888.9,741 C886,750.7 880.5,765.9 876.5,775.6 C872.6,785.2 867.3,795.1 865.4,799" fill="none" stroke="#a9b2a2" stroke-width="2.8" stroke-linecap="round" stroke-linejoin="round"/>
<circle cx="893.8" cy="717.5" r="4.2" fill="#a3ae9f"/>
<path d="M896.3,774.3 C894.2,776.6 888.1,783.6 884,787.9 C879.8,792.2 873.7,798.2 871.6,800.2" fill="none" stroke="#a9b2a2" stroke-width="2.6" stroke-linecap="round" stroke-linejoin="round"/>
<circle cx="896.3" cy="774.3" r="5" fill="#a3ae9f"/>
<path d="M872.8,712.6 L874.1,720" fill="none" stroke="#a3ae9f" stroke-width="3.4" stroke-linecap="round" stroke-linejoin="round"/>
<path d="M880.2,711.4 L881.5,716.3" fill="none" stroke="#a3ae9f" stroke-width="3.2" stroke-linecap="round" stroke-linejoin="round"/></g>
<g filter="url(#chalk)"><path d="M799,558.3 C798.2,564 795.2,578.8 794.1,592.8 C793,606.8 792.8,625.8 792.3,642.2 C791.9,658.7 791.3,683.4 791.1,691.6" fill="none" stroke="#8fc5c0" stroke-width="3.5" stroke-linecap="round" stroke-linejoin="round"/>
<path d="M761.7,691.6 C760.2,694.1 754.2,697.4 752.6,706.4 C751,715.5 751.8,735.6 752.1,745.9 C752.4,756.2 752.7,761.2 754.6,768.1 C756.5,775.1 759.2,781.3 763.5,787.9 C767.7,794.5 777.4,804.4 780.2,807.7" fill="none" stroke="#8fc5c0" stroke-width="3" stroke-linecap="round" stroke-linejoin="round"/>
<path d="M829.6,670.6 C830.9,672.9 836,678.2 837.5,684.2 C839,690.2 838.7,698.6 838.5,706.4 C838.4,714.2 838,723.7 836.5,731.1 C835.1,738.5 830.8,747.6 829.6,750.9" fill="none" stroke="#8fc5c0" stroke-width="3" stroke-linecap="round" stroke-linejoin="round"/>
<path d="M849.9,733.6 C850.9,735.6 854.8,739.3 855.8,745.9 C856.8,752.5 857.1,764.9 855.8,773.1 C854.5,781.3 851.7,788.5 847.9,795.3 C844.1,802.1 835.6,810.9 833.1,814.1" fill="none" stroke="#8fc5c0" stroke-width="3" stroke-linecap="round" stroke-linejoin="round"/>
<path d="M820.5,824.9 C820.6,831.5 821.3,848.9 821.2,864.4 C821.2,880 820.4,909.3 820.2,918.3" fill="none" stroke="#8fc5c0" stroke-width="4" stroke-linecap="round" stroke-linejoin="round"/>
<path d="M790.6,691.6 C789.8,693.3 786.5,689.1 785.7,701.5 C784.9,713.8 785.7,755 785.7,765.7" fill="none" stroke="#8fc5c0" stroke-width="2.5" stroke-linecap="round" stroke-linejoin="round"/>
<path d="M799,829.9 C798.8,835.6 797.8,849.7 797.5,864.4 C797.3,879.2 797.5,909.3 797.5,918.3" fill="none" stroke="#8fc5c0" stroke-width="3" stroke-linecap="round" stroke-linejoin="round"/>
<path d="M802.5,552.1 C801.1,552.1 798.4,560.9 797.5,565.7 C796.7,570.4 795.5,585.3 795.1,592.8 C794.7,600.3 794.3,621.2 794.1,629.9 C793.9,638.5 793.6,658.3 793.3,666.9 C793.1,675.6 792.5,692.4 792.1,704 C791.7,715.5 790.2,755.6 790.1,765.7 C790,775.8 793.4,784.6 791.4,790.4 C789.3,796.1 774.4,811 772.8,815.1 C771.3,819.1 775.2,823.2 777.8,824.9 C780.4,826.7 792.8,825.3 795.1,829.9 C797.4,834.5 797.2,854.1 797.5,864.4 C797.9,874.8 795.8,912 798.3,918.3 C800.7,924.6 816,924.6 818.5,918.3 C821,912 819.3,875.3 819.8,864.4 C820.2,853.6 821.1,831 822.2,824.9 C823.4,818.9 829.5,816.6 829.6,812.6 C829.8,808.6 824.5,795.8 823.5,790.4 C822.4,784.9 821.1,774.3 820.5,765.7 C819.9,757 818.8,727.8 818.3,716.3 C817.7,704.8 816.3,677 815.8,666.9 C815.3,656.8 814.7,638.5 814.3,629.9 C814,621.2 813.4,600.3 812.8,592.8 C812.3,585.3 810.6,570.4 809.4,565.7 C808.2,560.9 803.9,552.1 802.5,552.1Z" fill="#9ca998"/>
<path d="M763.5,700.2 C763.5,709.1 762.6,740.4 763.5,753.3 C764.3,766.3 765.1,770.6 768.4,778 C771.7,785.4 777.9,792 783.2,797.8 C788.5,803.5 797.2,810.1 800,812.6" fill="none" stroke="#9ca998" stroke-width="18.8" stroke-linecap="round" stroke-linejoin="round"/>
<path d="M827.7,677.5 C827.8,684 828.7,706.1 828.4,716.3 C828.1,726.5 828,731.1 825.9,738.5 C823.9,745.9 817.7,757 816,760.7" fill="none" stroke="#9ca998" stroke-width="14.8" stroke-linecap="round" stroke-linejoin="round"/>
<path d="M847.7,739.8 C847.5,744.1 848.1,757.7 846.9,765.7 C845.8,773.7 844,780.9 840.7,787.9 C837.4,794.9 831.9,801.9 827.2,807.7 C822.4,813.4 814.8,820 812.3,822.5" fill="none" stroke="#9ca998" stroke-width="13.8" stroke-linecap="round" stroke-linejoin="round"/>
<path d="M791.6,696 L791.6,753.3" fill="none" stroke="#9ca998" stroke-width="9.9" stroke-linecap="round" stroke-linejoin="round"/></g>
<g filter="url(#pencil)"><path d="M698.5,605.9 C699.7,602.4 701.7,591.6 705.6,584.8 C709.4,578.1 714.4,571.9 721.4,565.5 C728.4,559 736.3,552.4 747.8,546.1 C759.2,539.8 773.6,532.9 790,527.5 C806.4,522 825.2,517.3 846.3,513.4 C867.4,509.5 894.4,506.6 916.7,504.2 C939,501.8 963.6,499.6 980,499 C996.4,498.3 1007.2,499.4 1015.2,500.4 C1023.2,501.3 1025.7,503.9 1027.9,504.6" fill="none" stroke="#15404c" stroke-width="2.5" stroke-linecap="round" stroke-linejoin="round"/>
<path d="M1046.9,506.7 C1050.4,507.3 1060.3,507.6 1068,510.2 C1075.6,512.8 1084.4,517.4 1092.6,522.2 C1100.8,527 1109.6,533 1117.2,539.1 C1124.8,545.1 1132.4,552 1138.3,558.4 C1144.3,564.9 1149.5,572.1 1153.1,577.8 C1156.7,583.5 1159,590.1 1160.1,592.6" fill="none" stroke="#15404c" stroke-width="2.7" stroke-linecap="round" stroke-linejoin="round"/>
<path d="M1160.1,592.6 C1163.5,600.6 1174.2,623.6 1180.6,641.1 C1186.9,658.6 1192.8,678.6 1198.1,697.4 C1203.5,716.2 1208.7,733.8 1212.9,753.7 C1217.1,773.6 1220,794.8 1223.5,817 C1227,839.3 1230.5,864 1234,887.4 C1237.6,910.9 1241.4,936.7 1244.6,957.8 C1247.8,978.9 1250.7,997.8 1253,1014.1 C1255.4,1030.3 1257.7,1048.4 1258.7,1055.2" fill="none" stroke="#15404c" stroke-width="1.7" stroke-linecap="round" stroke-linejoin="round"/>
<path d="M672.1,1101 C672.3,1105.3 672.7,1118.7 673.2,1126.7 C673.7,1134.6 674.7,1144.8 674.9,1148.5" fill="none" stroke="#15404c" stroke-width="1.6" stroke-linecap="round" stroke-linejoin="round"/>
<path d="M674.9,1148.5 C680,1149.1 694.5,1150.8 705.6,1152 C716.6,1153.2 735.5,1154.9 741.4,1155.5" fill="none" stroke="#15404c" stroke-width="3.2" stroke-linecap="round" stroke-linejoin="round"/>
<path d="M1249.2,1078.1 C1249,1083.9 1248.5,1101.7 1248.1,1112.6 C1247.7,1123.4 1246.9,1138.1 1246.7,1143.2" fill="none" stroke="#15404c" stroke-width="1.8" stroke-linecap="round" stroke-linejoin="round"/>
<path d="M1246.7,1143.2 C1243.3,1143.4 1233.7,1143.3 1226.3,1144.3 C1218.9,1145.2 1206.4,1148.1 1202.4,1148.8" fill="none" stroke="#15404c" stroke-width="3.4" stroke-linecap="round" stroke-linejoin="round"/></g>
<g filter="url(#pencil)"><path d="M632.1,781.2 C635,785.1 642.4,796.3 649.4,804.7 C656.4,813.1 666,823.6 674.1,831.9 C682.1,840.1 693.6,850.4 697.5,854.1" fill="none" stroke="#e0a524" stroke-width="5.2" stroke-linecap="round" stroke-linejoin="round"/>
<path d="M661.7,780 C662.6,783.7 663.8,794.4 666.7,802.2 C669.5,810 674.9,819.5 679,826.9 C683.1,834.3 689.3,843.4 691.4,846.7" fill="none" stroke="#e0a524" stroke-width="4.2" stroke-linecap="round" stroke-linejoin="round"/>
<path d="M686.4,780 C686.2,784.1 685.2,796 685.2,804.7 C685.2,813.3 685.8,825.3 686.4,831.9 C687,838.4 688.5,842.1 688.9,844.2" fill="none" stroke="#e0a524" stroke-width="2.6" stroke-linecap="round" stroke-linejoin="round"/>
<path d="M618.5,809.6 C622.6,811.5 634,815 643.2,820.7 C652.5,826.5 664.2,837.4 674.1,844.2 C684,851 697.7,858.6 702.5,861.5" fill="none" stroke="#e0a524" stroke-width="4.8" stroke-linecap="round" stroke-linejoin="round"/>
<path d="M616,825.7 C621.6,827.7 638.9,833.3 649.4,838 C659.9,842.8 671.6,849.8 679,854.1 C686.4,858.4 691.4,862.3 693.8,864" fill="none" stroke="#e0a524" stroke-width="4.6" stroke-linecap="round" stroke-linejoin="round"/>
<path d="M691.4,871.4 C686.4,869.7 671.8,864.8 661.7,861.5 C651.6,858.2 638.9,853.7 630.9,851.6 C622.8,849.5 617,848.7 613.6,849.1 C610.2,849.5 608.6,852.2 610.5,854.1 C612.3,855.9 617.2,857.8 624.7,860.2 C632.2,862.7 645.3,866.6 655.6,868.9 C665.8,871.2 681.3,873 686.4,873.8" fill="none" stroke="#e0a524" stroke-width="4.4" stroke-linecap="round" stroke-linejoin="round"/>
<path d="M613.6,878.8 C618.5,879 634,879.2 643.2,880 C652.5,880.8 663,882.8 669.1,883.7 C675.3,884.6 678.4,885.2 680.2,885.6" fill="none" stroke="#e0a524" stroke-width="4.6" stroke-linecap="round" stroke-linejoin="round"/>
<path d="M680.2,886.2 C676.1,886.8 663,889 655.6,889.9 C648.1,890.8 639.8,890.8 635.8,891.7 C631.8,892.7 630.9,894.5 631.5,895.4 C632.1,896.4 634.9,898 639.5,897.3 C644.1,896.6 652.7,894.2 659.3,891.1 C665.8,888 673.7,882.5 679,878.8 C684.4,875.1 689.3,870.5 691.4,868.9" fill="none" stroke="#e0a524" stroke-width="4.2" stroke-linecap="round" stroke-linejoin="round"/>
<path d="M631.5,780.2 C633,781.9 637.8,786.6 640.7,790.1 C643.7,793.6 647.9,799.4 649.4,801.2" fill="none" stroke="#e0a524" stroke-width="5.2" stroke-linecap="round" stroke-linejoin="round"/>
<path d="M658,760.5 C658.6,763.8 660.2,773.5 661.7,780.2 C663.3,787 666.4,797.7 667.3,801.2" fill="none" stroke="#e0a524" stroke-width="3.6" stroke-linecap="round" stroke-linejoin="round"/>
<path d="M688.3,751.9 C687.8,755.3 685.5,764.6 685.2,772.8 C684.9,781.1 686.2,796.5 686.4,801.2" fill="none" stroke="#e0a524" stroke-width="3.2" stroke-linecap="round" stroke-linejoin="round"/></g>
<g filter="url(#pencil)"><path d="M695.1,645.7 C694.4,645 688.3,637.4 686.4,635.8 C684.5,634.2 671.4,624.8 669.1,623.5 C666.9,622.1 656.7,618 655.6,617.3 C654.4,616.6 652.9,613.9 653.1,613.6 C653.3,613.3 656.7,612.3 658,613 C659.4,613.6 669.3,620.5 671.6,622.2 C673.9,623.9 687.6,634.8 688.9,635.8" fill="none" stroke="#15404c" stroke-width="2.5" stroke-linecap="round" stroke-linejoin="round"/>
<path d="M671,609.9 C671.7,610.6 678.8,617.9 680.2,619.8 C681.7,621.6 689.1,632.9 690.1,634.6 C691.1,636.2 693.6,641.4 693.8,642" fill="none" stroke="#15404c" stroke-width="2.5" stroke-linecap="round" stroke-linejoin="round"/>
<path d="M695.1,645.7 C695.2,644.6 697,633 697.5,630.9 C698.1,628.7 701.9,617.6 702.5,616 C703.1,614.5 705.4,609.7 705.6,609.9 C705.7,610.1 705.3,616.5 704.9,618.5 C704.5,620.5 700.4,635.7 700,637" fill="none" stroke="#15404c" stroke-width="2.5" stroke-linecap="round" stroke-linejoin="round"/>
<path d="M700,637 C700.5,636.2 706.5,626.9 707.4,625.9 C708.3,624.9 712.2,622.8 712.3,623.5 C712.5,624.1 710.3,632.9 709.9,634.6 C709.5,636.2 707,644.9 706.8,645.7" fill="none" stroke="#15404c" stroke-width="2.5" stroke-linecap="round" stroke-linejoin="round"/>
<path d="M696.3,644.4 L701.2,655.6" fill="none" stroke="#15404c" stroke-width="1.4" stroke-linecap="round" stroke-linejoin="round"/>
<path d="M708.6,663 C709.4,664 716.9,674.6 718.5,676.5 C720.1,678.4 729.7,687.8 730.9,688.9 C732,690 734.3,691.2 734.6,691.4" fill="none" stroke="#15404c" stroke-width="3" stroke-linecap="round" stroke-linejoin="round"/>
<path d="M723.5,658 C723.8,659 727.7,669.5 728.4,671.6 C729.1,673.7 732.4,685.3 732.7,686.4" fill="none" stroke="#15404c" stroke-width="3" stroke-linecap="round" stroke-linejoin="round"/>
<path d="M732.7,686.4 C733,685.2 736.5,671.1 737,669.1 C737.5,667.1 739.6,659.4 739.5,659.3 C739.4,659.1 735.7,665.7 735.8,666.7 C735.9,667.7 740.7,671.8 740.7,672.8 C740.8,673.9 737.4,679.9 737,681.5 C736.7,683 735.9,692.9 735.8,693.8" fill="none" stroke="#15404c" stroke-width="2.5" stroke-linecap="round" stroke-linejoin="round"/>
<path d="M745.7,664.2 C745.9,663 747.7,649.5 748.1,648.1 C748.6,646.8 750.9,645.6 751.2,646.3 C751.6,647 753.2,656 753.1,658 C753,660.1 750.1,672.5 750,674.1 C749.9,675.6 751.7,678.7 751.9,679" fill="none" stroke="#15404c" stroke-width="2.5" stroke-linecap="round" stroke-linejoin="round"/>
<path d="M755.6,659.3 C755.7,659.8 758.1,665.4 758,666.7 C758,667.9 755.2,675.8 754.9,676.5" fill="none" stroke="#15404c" stroke-width="2.5" stroke-linecap="round" stroke-linejoin="round"/>
<path d="M754.9,676.5 C755.6,676 763.1,669.9 764.2,669.1 C765.3,668.4 770,665.9 769.8,666.7 C769.5,667.5 762.1,677.9 760.5,680.2 C758.9,682.6 749.8,696.2 748.1,698.8 C746.5,701.3 739,713.6 738.3,714.8" fill="none" stroke="#15404c" stroke-width="2.5" stroke-linecap="round" stroke-linejoin="round"/>
<path d="M735.8,693.8 C735.6,694.6 733.4,703.4 733.3,704.9 C733.2,706.5 734.2,714.1 734.6,714.8 C734.9,715.5 738,714.8 738.3,714.8" fill="none" stroke="#15404c" stroke-width="2.5" stroke-linecap="round" stroke-linejoin="round"/>
<path d="M738.3,714.8 C739,714 746.7,705.4 748.1,703.7 C749.6,702 757.3,692.3 758,691.4" fill="none" stroke="#15404c" stroke-width="2.5" stroke-linecap="round" stroke-linejoin="round"/>
<path d="M735.8,716 C736.3,717 742.3,726.2 743.2,728.4 C744.1,730.6 747.7,743.1 748.1,745.7 C748.6,748.2 749.7,760.5 750,763 C750.3,765.4 751.4,776.8 751.9,779 C752.3,781.2 755.3,791.6 755.6,792.6" fill="none" stroke="#15404c" stroke-width="2" stroke-linecap="round" stroke-linejoin="round"/>
<path d="M685.2,697.5 C686,698.1 694.6,703.4 696.3,704.9 C698,706.5 707.5,717.1 708.6,718.5 C709.8,720 712.1,724.2 712.3,724.7" fill="none" stroke="#15404c" stroke-width="2.5" stroke-linecap="round" stroke-linejoin="round"/>
<path d="M693.8,675.3 C694.1,676.3 696.9,687.2 697.5,688.9 C698.2,690.6 702.2,699.4 702.5,698.8 C702.7,698.1 701.2,681.8 701.2,680.2 C701.3,678.7 702.7,676.8 703.1,677.8 C703.4,678.8 705.8,691.6 706.2,693.8 C706.6,696.1 708.3,706.6 708.6,708.6 C709,710.7 710.9,721.2 711.1,722.2" fill="none" stroke="#15404c" stroke-width="2.5" stroke-linecap="round" stroke-linejoin="round"/>
<path d="M711.1,730.9 C711.5,729.8 715.4,717.7 716,716 C716.7,714.4 719.6,708.5 719.8,708.6 C719.9,708.8 718.9,716.9 718.5,718.5 C718.2,720.1 715.1,730 714.8,730.9" fill="none" stroke="#15404c" stroke-width="2.5" stroke-linecap="round" stroke-linejoin="round"/>
<path d="M709.9,729.6 C710.3,730.1 715.1,734.8 716,735.8 C717,736.8 722.2,741.5 723.5,743.2 C724.7,744.9 732.1,757.1 733.3,759.3 C734.6,761.4 739.8,771.1 740.7,772.8 C741.6,774.6 745.3,782 745.7,782.7" fill="none" stroke="#15404c" stroke-width="1.8" stroke-linecap="round" stroke-linejoin="round"/>
<path d="M651.2,692.6 C652,693.4 660.2,702.3 661.7,703.7 C663.2,705.1 670.3,710.2 671.6,711.1 C672.9,712 678.5,715.7 679,716" fill="none" stroke="#15404c" stroke-width="2.5" stroke-linecap="round" stroke-linejoin="round"/>
<path d="M659.3,698.8 C659.8,698.8 665.8,698.2 666.7,698.8 C667.6,699.3 671.2,705.6 671.6,706.2" fill="none" stroke="#15404c" stroke-width="2.5" stroke-linecap="round" stroke-linejoin="round"/>
<path d="M672.8,674.1 C672.7,675 671.3,684.2 671.6,686.4 C671.9,688.7 675.5,702.2 676.5,704.9 C677.5,707.7 684.3,721.2 685.2,723.5 C686.1,725.7 688.4,734 688.9,735.8 C689.3,737.6 690.8,746.3 691.4,748.1 C691.9,750 694.8,759.1 696.3,760.5 C697.7,761.9 708.7,765.4 711.1,766.7 C713.6,767.9 727.4,776.4 729.6,777.8 C731.9,779.1 741.1,784.6 742,785.2" fill="none" stroke="#15404c" stroke-width="2.2" stroke-linecap="round" stroke-linejoin="round"/>
<path d="M679,716 C679.5,716.8 684.7,724 685.2,725.9 C685.6,727.8 685.2,740.8 685.2,742" fill="none" stroke="#15404c" stroke-width="2.5" stroke-linecap="round" stroke-linejoin="round"/>
<path d="M629.6,693.8 C630.1,694.6 635,702.6 635.8,703.7 C636.6,704.8 641.1,708.3 640.7,708.6 C640.3,709 629.8,707.8 630.2,708 C630.7,708.3 644.9,712.1 646.9,712.3 C649,712.6 657.6,710.5 658,711.1 C658.5,711.7 653.4,719.4 653.1,720.4 C652.8,721.4 654.2,724.4 654.3,724.7" fill="none" stroke="#15404c" stroke-width="2.5" stroke-linecap="round" stroke-linejoin="round"/>
<path d="M640.7,722.2 C641.6,722.6 650.2,726.5 651.9,727.2 C653.5,727.8 662.8,730.4 663,730.9 C663.1,731.3 657.1,733.1 654.3,733.3 C651.5,733.6 627.5,733.7 624.7,734 C621.9,734.2 616.5,736.4 616,737 C615.6,737.7 617,742.6 618.5,743.2 C620.1,743.8 633.9,745.4 637,745.7 C640.2,746 658.3,747 661.7,746.9 C665.2,746.8 682.3,744.6 684,744.4" fill="none" stroke="#15404c" stroke-width="2.5" stroke-linecap="round" stroke-linejoin="round"/>
<path d="M650.6,739.5 C651.3,740.1 657.9,747.4 659.3,748.1 C660.6,748.9 669.5,749.1 669.1,749.4 C668.8,749.7 656.7,751.4 654.3,751.9 C652,752.3 638.6,754.9 637,755.6 C635.5,756.2 632.4,760 632.7,760.5 C633,760.9 638.6,762.2 640.7,761.7 C642.9,761.3 658.5,755.1 661.7,754.3 C665,753.5 683.5,750.9 685.2,750.6" fill="none" stroke="#15404c" stroke-width="2.5" stroke-linecap="round" stroke-linejoin="round"/>
<path d="M642,766.7 C643,766.2 653.7,761.2 655.6,760.5 C657.4,759.8 665.9,757.1 666.7,756.8" fill="none" stroke="#15404c" stroke-width="2.5" stroke-linecap="round" stroke-linejoin="round"/>
<path d="M680.2,792 C682.5,791.7 710.7,789 711.1,788.9 C711.6,788.8 686.2,790.7 686.4,790.7 C686.6,790.8 710.8,790.7 713.6,790.1 C716.4,789.5 724.3,782.7 724.7,782.7 C725.1,782.7 719.5,789.1 718.5,790.1 C717.5,791.1 710.7,796.1 711.1,796.3 C711.5,796.5 722.3,793.4 723.5,792.6 C724.6,791.8 726.6,784.9 727.2,785.2 C727.7,785.5 730,796.1 730.9,796.3 C731.7,796.5 737.4,787.7 738.3,787.7 C739.2,787.6 742.5,794.2 743.2,795.1 C743.9,796 747.8,799.6 748.1,800" fill="none" stroke="#15404c" stroke-width="2.4" stroke-linecap="round" stroke-linejoin="round"/>
<path d="M654.3,615.1 C655.8,616 671.2,625.3 674.1,627.4 C677,629.5 692.4,642.3 693.8,643.5" fill="none" stroke="#15404c" stroke-width="2.4" stroke-linecap="round" stroke-linejoin="round"/>
<path d="M671.6,610.1 C672.5,611.2 682.2,622.4 684,624.9 C685.7,627.5 694.2,643.2 695.1,644.7" fill="none" stroke="#15404c" stroke-width="2.4" stroke-linecap="round" stroke-linejoin="round"/>
<path d="M695.1,644.7 C695.3,643.2 698,627.4 698.8,624.9 C699.6,622.5 705.8,611 706.2,611.4 C706.5,611.7 703.6,627.6 703.7,629.9 C703.8,632.1 707.1,641.3 707.4,642.2" fill="none" stroke="#15404c" stroke-width="2.4" stroke-linecap="round" stroke-linejoin="round"/>
<path d="M707.4,642.2 C707.8,641.1 712.1,627.8 712.3,627.4 C712.6,627 711.2,636.6 711.1,637.3" fill="none" stroke="#15404c" stroke-width="2.2" stroke-linecap="round" stroke-linejoin="round"/>
<path d="M695.1,644.7 L701.2,657" fill="none" stroke="#15404c" stroke-width="1.2" stroke-linecap="round" stroke-linejoin="round"/></g>
<g filter="url(#chalk)"><path d="M816.8,914.9 C819.6,912.6 819.1,907.9 821.8,897.8 C824.4,887.8 830.2,864.4 832.6,854.6 C834.9,844.8 835.3,842.7 835.9,838.9 C836.6,835.1 836.6,833.5 836.3,831.7 C836.1,829.9 835.1,828.8 834.5,828 C833.8,827.2 833.2,827.2 832.5,827 C831.8,826.9 831.2,826.6 830.3,826.9 C829.3,827.3 827.9,827.8 826.9,829.3 C825.8,830.8 825.1,832.2 823.8,835.9 C822.6,839.6 821.9,841.5 819.4,851.3 C816.9,861.1 811,884.4 808.6,894.5 C806.2,904.6 803.6,908.6 804.9,912 C806.3,915.4 814,917.3 816.8,914.9Z" fill="#efb5b1"/>
<path d="M824.5,908.5 C827.7,906.3 828.6,901.2 833.7,890.8 C838.8,880.4 850.5,856.3 855.3,846.1 C860.1,835.9 861,833.8 862.6,829.8 C864.3,825.7 864.7,824 865,822.1 C865.3,820.1 864.7,818.8 864.3,817.8 C863.9,816.9 863.3,816.8 862.7,816.5 C862.1,816.3 861.7,815.9 860.7,816.1 C859.8,816.4 858.4,816.7 857,818.2 C855.6,819.6 854.5,821.1 852.4,824.8 C850.3,828.6 849.2,830.6 844.2,840.7 C839.2,850.8 827.5,875 822.6,885.5 C817.6,896 814.2,899.8 814.5,903.6 C814.8,907.5 821.3,910.6 824.5,908.5Z" fill="#efb5b1"/>
<path d="M832,902.7 C834.8,902.7 836.1,899.5 841.5,894.5 C846.9,889.5 859.2,877.8 864.4,872.9 C869.5,867.9 870.5,866.8 872.2,864.7 C874,862.7 874.6,861.7 875.1,860.4 C875.5,859.1 875.2,857.9 875,857.1 C874.8,856.3 874.3,855.9 873.8,855.4 C873.4,855 873.1,854.5 872.2,854.2 C871.4,854 870.2,853.6 868.9,853.9 C867.6,854.3 866.6,854.8 864.4,856.5 C862.3,858.2 861.1,859.1 855.9,863.9 C850.6,868.7 838.3,880.4 833,885.5 C827.8,890.6 824.5,891.7 824.3,894.6 C824.2,897.5 829.1,902.7 832,902.7Z" fill="#efb5b1"/>
<path d="M817.2,914.6 C819.5,912.2 819.4,907.7 821.9,897.9 C824.5,888.2 830.1,865.5 832.4,855.9 C834.7,846.4 835.1,844.4 835.8,840.7 C836.5,837 836.6,835.5 836.5,833.8 C836.4,832 835.7,831 835.2,830.3 C834.7,829.6 834.2,829.6 833.7,829.5 C833.2,829.4 832.7,829.1 832,829.5 C831.2,829.9 830.1,830.5 829.2,832 C828.3,833.4 827.7,834.8 826.6,838.4 C825.4,842 824.8,843.9 822.4,853.4 C819.9,862.9 814.2,885.6 811.9,895.4 C809.5,905.2 807.3,909.1 808.2,912.3 C809.1,915.5 815,917 817.2,914.6Z" fill="#f1c3bd"/>
<path d="M824.6,906.6 C827.3,904.4 828.3,899.6 833.1,889.7 C838,879.7 848.9,856.5 853.5,846.8 C858.1,837 858.9,835 860.5,831.2 C862.1,827.3 862.5,825.7 862.9,823.9 C863.3,822 862.9,820.9 862.6,820.1 C862.4,819.3 861.9,819.2 861.5,819 C861,818.8 860.7,818.5 859.9,818.8 C859.1,819.1 858,819.6 856.8,821 C855.6,822.4 854.7,823.8 852.7,827.5 C850.7,831.1 849.7,833 845,842.7 C840.3,852.4 829.3,875.6 824.7,885.6 C820,895.7 816.9,899.5 816.9,903 C816.9,906.5 821.9,908.8 824.6,906.6Z" fill="#f1c3bd"/>
<path d="M832.3,900.5 C834.7,900.2 836.1,897.4 841.1,892.8 C846.1,888.2 857.6,877.3 862.4,872.7 C867.2,868.1 868.1,867.1 869.8,865.2 C871.5,863.3 872.1,862.5 872.6,861.3 C873.1,860.2 872.9,859.3 872.8,858.6 C872.7,857.9 872.3,857.6 872,857.3 C871.6,856.9 871.4,856.5 870.7,856.4 C870.1,856.2 869.1,856 868,856.4 C866.8,856.9 865.9,857.4 863.9,859 C861.9,860.5 860.9,861.4 856,865.9 C851.1,870.4 839.6,881.2 834.7,886 C829.8,890.7 826.9,891.9 826.5,894.3 C826.1,896.8 829.8,900.7 832.3,900.5Z" fill="#f1c3bd"/>
<path d="M813.3,911 C813.7,906 818.4,882.3 822,876.4 C825.6,870.5 837.5,864.9 840.5,866.5 C843.5,868.2 845.2,884.2 844.2,888.8 C843.2,893.4 836.4,897.8 833.1,901.1 C829.8,904.4 822.1,912.1 819.5,913.5 C816.9,914.8 813,915.9 813.3,911Z" fill="#f1c3bd"/></g>
<g filter="url(#chalk)"><path d="M709,809.8 L709.6,818.4" fill="none" stroke="#ee767a" stroke-width="6.2" stroke-linecap="round" stroke-linejoin="round"/>
<ellipse cx="739.3" cy="838.1" rx="5.4" ry="5.2" fill="#ee767a" transform="rotate(0 739.3 838.1)"/>
<path d="M762.7,818.4 L766.4,829.5" fill="none" stroke="#ee767a" stroke-width="6.9" stroke-linecap="round" stroke-linejoin="round"/>
<path d="M728.1,854.2 L735.6,869" fill="none" stroke="#ee767a" stroke-width="7.4" stroke-linecap="round" stroke-linejoin="round"/>
<path d="M735.6,869 L734.3,881.4" fill="none" stroke="#ee767a" stroke-width="6.9" stroke-linecap="round" stroke-linejoin="round"/>
<path d="M805.9,869 L807.2,878.9" fill="none" stroke="#ee767a" stroke-width="8.6" stroke-linecap="round" stroke-linejoin="round"/>
<path d="M715.8,918.4 L715.8,924.6" fill="none" stroke="#ee767a" stroke-width="7.4" stroke-linecap="round" stroke-linejoin="round"/>
<path d="M757.2,950.5 L757.8,960.4" fill="none" stroke="#ee767a" stroke-width="6.2" stroke-linecap="round" stroke-linejoin="round"/>
<path d="M780.6,948 L780.6,954.2" fill="none" stroke="#ee767a" stroke-width="7.9" stroke-linecap="round" stroke-linejoin="round"/>
<path d="M694.8,886.3 L699.8,894.9" fill="none" stroke="#ee767a" stroke-width="6.2" stroke-linecap="round" stroke-linejoin="round"/>
<path d="M786.2,898.6 L791.1,907.3" fill="none" stroke="#ee767a" stroke-width="6.2" stroke-linecap="round" stroke-linejoin="round"/>
<path d="M761.5,901.1 L765.2,908.5" fill="none" stroke="#ee767a" stroke-width="6.2" stroke-linecap="round" stroke-linejoin="round"/>
<path d="M722,834.4 L726.9,849.3" fill="none" stroke="#ee767a" stroke-width="4.9" stroke-linecap="round" stroke-linejoin="round"/>
<path d="M787.4,848 L796,845.6" fill="none" stroke="#ee767a" stroke-width="4.9" stroke-linecap="round" stroke-linejoin="round"/>
<path d="M704.7,825.8 L708.4,839.4" fill="none" stroke="#c4bbab" stroke-width="16" stroke-linecap="round" stroke-linejoin="round"/>
<path d="M715.2,820.9 L715.8,839.4" fill="none" stroke="#c4bbab" stroke-width="13.6" stroke-linecap="round" stroke-linejoin="round"/>
<path d="M717,839.4 L726.9,854.2" fill="none" stroke="#c4bbab" stroke-width="12.3" stroke-linecap="round" stroke-linejoin="round"/>
<path d="M723.2,859.1 L724.4,878.9" fill="none" stroke="#c4bbab" stroke-width="18.5" stroke-linecap="round" stroke-linejoin="round"/>
<path d="M698.5,880.1 L717,881.4" fill="none" stroke="#c4bbab" stroke-width="17.3" stroke-linecap="round" stroke-linejoin="round"/>
<path d="M714,891.2 L714,913.5" fill="none" stroke="#c4bbab" stroke-width="13.6" stroke-linecap="round" stroke-linejoin="round"/>
<path d="M744.2,808.5 L755.3,832" fill="none" stroke="#c4bbab" stroke-width="18.5" stroke-linecap="round" stroke-linejoin="round"/>
<path d="M752.8,836.9 L752.8,866.5" fill="none" stroke="#c4bbab" stroke-width="25.9" stroke-linecap="round" stroke-linejoin="round"/>
<path d="M754.1,876.4 L778.8,883.8" fill="none" stroke="#c4bbab" stroke-width="37" stroke-linecap="round" stroke-linejoin="round"/>
<path d="M778.8,866.5 L794.8,851.7" fill="none" stroke="#c4bbab" stroke-width="13.6" stroke-linecap="round" stroke-linejoin="round"/>
<path d="M788.6,883.8 L802.2,878.9" fill="none" stroke="#c4bbab" stroke-width="17.3" stroke-linecap="round" stroke-linejoin="round"/>
<path d="M749.1,901.1 L750.4,944.3" fill="none" stroke="#c4bbab" stroke-width="21" stroke-linecap="round" stroke-linejoin="round"/>
<path d="M780,907.3 L780,946.8" fill="none" stroke="#c4bbab" stroke-width="11.1" stroke-linecap="round" stroke-linejoin="round"/>
<path d="M773.8,859.1 L775.1,876.4" fill="none" stroke="#c4bbab" stroke-width="14.8" stroke-linecap="round" stroke-linejoin="round"/></g>
<g filter="url(#chalk)"><path d="M804.1,929.5 C804.6,927.7 811.4,918.3 813.3,915.9 C815.2,913.6 821.1,907.2 823.2,906 C825.3,904.9 832.2,903.8 834.3,904.6 C836.4,905.3 842.5,910.7 844.2,913.5 C845.9,916.2 850.6,928.7 851.6,932 C852.6,935.2 856,943.9 854.3,945.8 C852.6,947.7 837.4,950.4 834.3,950.7 C831.2,951.1 824.6,951 823.2,949.3 C821.8,947.5 819.9,936.4 820.1,933.2 C820.4,930.1 826,918.6 825.7,917.8 C825.4,916.9 818.8,923 817,924.6 C815.3,926.2 809.7,933.3 808.4,933.8 C807.1,934.3 803.6,931.3 804.1,929.5Z" fill="#204a56"/>
<path d="M744.2,997.1 C744.6,993 740.9,990.6 734.6,982.9 C728.4,975.2 713.2,958 706.9,950.8 C700.5,943.6 699,942.3 696.3,939.8 C693.5,937.3 692.1,936.5 690.3,935.9 C688.5,935.4 686.7,935.9 685.4,936.3 C684.1,936.6 683.5,937.3 682.7,938 C681.9,938.7 681.1,939.2 680.6,940.4 C680.1,941.6 679.2,943.4 679.6,945.2 C679.9,947.1 680.5,948.6 682.5,951.7 C684.6,954.8 685.7,956.4 691.9,963.7 C698.1,971.1 713,988.6 719.7,995.8 C726.4,1003.1 728.2,1007.2 732.3,1007.4 C736.4,1007.6 743.9,1001.1 744.2,997.1Z" fill="#a3aa97"/>
<path d="M746.1,988.2 C747.3,983.3 743.4,978.9 737.5,966.9 C731.6,955 717.1,927.7 711,916.3 C704.8,904.9 703.4,902.7 700.6,898.5 C697.8,894.4 696.4,892.9 694.4,891.4 C692.4,890 690.1,890 688.6,890 C687.1,889.9 686.2,890.6 685.2,891.1 C684.1,891.7 683.1,892 682.3,893.3 C681.5,894.6 680.2,896.4 680.2,898.9 C680.3,901.3 680.7,903.4 682.5,908 C684.3,912.6 685.4,915.1 691.3,926.6 C697.2,938.2 711.3,965.6 717.8,977.3 C724.3,988.9 725.7,994.6 730.4,996.5 C735.1,998.3 745,993.1 746.1,988.2Z" fill="#a3aa97"/>
<path d="M751.8,1003.7 C750,999.6 744.8,997.8 734.1,990.9 C723.5,984 698.4,968.8 687.9,962.5 C677.3,956.2 675,955 670.8,952.9 C666.6,950.8 664.7,950.2 662.5,949.8 C660.3,949.5 658.6,950.3 657.5,950.8 C656.3,951.3 656,952.1 655.6,952.8 C655.1,953.6 654.5,954.2 654.6,955.5 C654.6,956.7 654.7,958.6 656,960.4 C657.3,962.2 658.7,963.6 662.5,966.4 C666.3,969.2 668.4,970.7 678.8,977.2 C689.2,983.8 714.2,999.3 725.1,1005.6 C736.1,1012 740.1,1015.8 744.5,1015.5 C749,1015.2 753.5,1007.8 751.8,1003.7Z" fill="#a3aa97"/>
<path d="M777.9,1012.6 C781.5,1011 783.1,1006.3 789.1,996.6 C795.1,986.9 808.3,964.2 813.8,954.6 C819.3,945.1 820.3,943 822.2,939.2 C824,935.4 824.5,933.7 824.8,931.7 C825.2,929.8 824.5,928.3 824,927.3 C823.6,926.3 822.9,926.1 822.2,925.7 C821.5,925.3 821,924.8 819.9,924.9 C818.8,925 817.2,925.1 815.6,926.3 C814.1,927.6 812.9,928.8 810.4,932.3 C808,935.8 806.7,937.6 801,947.1 C795.3,956.6 781.9,979.2 776.3,989.1 C770.8,999 767.5,1002.7 767.7,1006.6 C768,1010.6 774.4,1014.3 777.9,1012.6Z" fill="#a3aa97"/>
<path d="M748.9,1008.2 C746.3,1004.6 741.9,1005.7 731.8,1004.5 C721.8,1003.3 698.4,1001.5 688.6,1000.8 C678.8,1000.1 676.8,1000.1 673,1000.3 C669.2,1000.5 667.6,1001 665.9,1002 C664.1,1002.9 663.2,1004.8 662.5,1006.1 C661.8,1007.4 661.8,1008.4 661.7,1009.6 C661.6,1010.8 661.4,1011.8 661.9,1013.2 C662.3,1014.6 662.9,1016.6 664.5,1017.9 C666.1,1019.1 667.5,1019.9 671.2,1020.7 C674.9,1021.5 676.9,1021.9 686.7,1022.9 C696.5,1023.9 719.8,1026.1 729.9,1026.6 C740,1027.1 744.2,1029 747.4,1025.9 C750.6,1022.8 751.5,1011.7 748.9,1008.2Z" fill="#a3aa97"/>
<path d="M749.3,993.4 C751.1,988.2 747.9,983.1 742.8,970.1 C737.7,957.2 724.4,927.8 718.6,915.6 C712.8,903.4 710.8,901.2 707.9,896.9 C705,892.5 703.4,890.9 701.3,889.4 C699.2,887.8 696.7,887.7 695.1,887.6 C693.4,887.5 692.5,888.1 691.4,888.6 C690.2,889.2 689.1,889.4 688.2,890.7 C687.3,892 685.9,893.8 685.9,896.4 C685.9,898.9 686.4,901 688.3,905.8 C690.2,910.6 691.7,912.9 697.3,925.3 C702.8,937.6 715.6,967.2 721.5,979.8 C727.3,992.5 727.6,998.9 732.2,1001.2 C736.8,1003.4 747.5,998.6 749.3,993.4Z" fill="#3a9793"/>
<path d="M742.4,995.6 C742.9,990.8 739.1,988.3 732,980.3 C725,972.4 707.6,955.1 700.2,948 C692.8,940.8 690.7,939.9 687.4,937.6 C684.1,935.4 682.4,934.8 680.3,934.5 C678.2,934.1 676,935.1 674.6,935.7 C673.1,936.3 672.5,937.1 671.6,938 C670.7,938.9 669.8,939.6 669.3,941 C668.8,942.4 667.9,944.4 668.4,946.4 C668.8,948.4 669.6,949.9 672.2,952.9 C674.7,955.9 676.4,957.2 683.6,964.5 C690.8,971.9 707.8,989.5 715.4,996.9 C723,1004.3 724.7,1009.1 729.2,1008.9 C733.7,1008.6 742,1000.3 742.4,995.6Z" fill="#3a9793"/>
<path d="M753.8,1001.8 C751.2,997.9 746.6,1000.3 736.5,999.5 C726.4,998.7 702.9,997.6 693,997 C683.2,996.3 681.2,995.7 677.4,995.7 C673.6,995.8 672,996.2 670.3,997.2 C668.5,998.2 667.6,1000.4 666.9,1001.9 C666.2,1003.3 666.3,1004.5 666.2,1005.9 C666.1,1007.3 665.8,1008.5 666.3,1010.1 C666.8,1011.8 667.4,1014.2 669,1015.8 C670.5,1017.4 672,1018.4 675.7,1019.5 C679.4,1020.7 681.3,1021.9 691.2,1022.8 C701,1023.8 724.5,1025.4 734.7,1025.3 C744.9,1025.3 749.2,1026.4 752.4,1022.4 C755.5,1018.5 756.5,1005.6 753.8,1001.8Z" fill="#3a9793"/>
<path d="M757.4,1000.5 C760.2,996.3 757.7,991.2 755.7,978.6 C753.8,966 748.2,937.1 745.9,924.9 C743.5,912.8 742.8,910.3 741.4,905.8 C740,901.2 739,899.4 737.5,897.6 C736,895.7 733.7,895.1 732.2,894.7 C730.7,894.2 729.6,894.6 728.4,894.8 C727.2,895 726.1,895.1 724.8,896 C723.6,897 721.7,898.4 720.9,900.6 C720.1,902.9 719.8,904.9 720.2,909.7 C720.5,914.4 720.7,917 722.8,929.2 C724.9,941.4 730,970.4 732.7,982.9 C735.4,995.3 734.8,1001 738.9,1003.9 C743,1006.9 754.6,1004.7 757.4,1000.5Z" fill="#3a9793"/>
<path d="M768.8,1003.3 C772.3,1000.6 771.6,995.7 773.4,984.8 C775.2,973.9 778.3,948.6 779.5,937.9 C780.8,927.3 780.9,925 780.9,920.9 C781,916.8 780.6,915.1 779.8,913.1 C779,911.2 777.3,910.1 776.1,909.3 C774.9,908.5 773.9,908.5 772.8,908.4 C771.7,908.2 770.8,908 769.4,908.4 C768.1,908.9 766.1,909.5 764.9,911.2 C763.6,912.8 762.8,914.4 761.8,918.4 C760.8,922.4 760.3,924.6 758.7,935.2 C757.2,945.8 753.7,971.1 752.6,982.1 C751.5,993.1 749.5,997.6 752.2,1001.1 C754.9,1004.7 765.3,1006 768.8,1003.3Z" fill="#3a9793"/>
<path d="M777.4,1007.1 C780.8,1005.6 780.9,1001.6 784.1,993.4 C787.2,985.1 793.7,965.7 796.4,957.6 C799.1,949.4 799.5,947.7 800.2,944.5 C800.8,941.2 800.8,939.8 800.4,938.1 C800,936.4 798.6,935.2 797.7,934.4 C796.9,933.6 796,933.4 795.1,933.1 C794.1,932.8 793.4,932.4 792.1,932.5 C790.9,932.6 789.1,932.7 787.8,933.8 C786.4,934.8 785.5,935.9 784,938.9 C782.6,941.9 781.8,943.5 778.9,951.5 C776,959.6 769.1,978.9 766.6,987.4 C764,995.8 761.6,999 763.4,1002.3 C765.2,1005.6 773.9,1008.6 777.4,1007.1Z" fill="#3a9793"/>
<path d="M783.5,1012.4 C787.2,1010.8 789,1006.7 794.2,997.5 C799.4,988.2 810.2,966.3 814.5,957 C818.8,947.7 818.9,945.4 820,941.5 C821.1,937.7 821.2,936 821.1,934 C821,932.1 820,930.7 819.4,929.7 C818.8,928.7 818,928.5 817.3,928.1 C816.5,927.8 815.9,927.3 814.8,927.5 C813.8,927.6 812.2,927.8 810.9,929.1 C809.6,930.4 808.7,931.7 806.9,935.2 C805.1,938.7 804.8,940.9 800.3,950.1 C795.8,959.3 784.7,981.1 780,990.6 C775.3,1000 771.5,1003.2 772.1,1006.9 C772.7,1010.5 779.8,1014 783.5,1012.4Z" fill="#3a9793"/>
<path d="M763.2,1018 C765.1,1020.2 767.8,1019 774.2,1019 C780.5,1019 795.2,1018.1 801.3,1017.8 C807.5,1017.4 808.7,1017.2 811.1,1016.7 C813.4,1016.3 814.3,1015.8 815.4,1015.1 C816.4,1014.3 816.8,1012.9 817.1,1012 C817.4,1011.1 817.3,1010.4 817.3,1009.6 C817.2,1008.8 817.3,1008.1 816.9,1007.3 C816.5,1006.4 815.9,1005.1 814.9,1004.4 C813.8,1003.7 812.8,1003.4 810.5,1003.1 C808.1,1002.9 806.8,1002.8 800.7,1003 C794.5,1003.2 779.8,1003.7 773.5,1004.2 C767.2,1004.7 764.4,1003.9 762.7,1006.2 C761,1008.5 761.3,1015.9 763.2,1018Z" fill="#3a9793"/>
<path d="M681.5,977.5 C685.4,970.9 696.1,957.8 703.7,952.8 C711.3,947.9 728.4,940.5 738.3,940.5 C748.1,940.5 768.9,948.6 777.8,952.8 C786.7,957.1 800.7,966 804.9,972.6 C809.2,979.2 810.9,996.3 809.9,1002.2 C808.9,1008.1 807.1,1014.6 797.5,1017 C788,1019.5 752.1,1021.1 738.3,1020.7 C724.4,1020.4 702.4,1017 693.8,1014.6 C685.3,1012.1 675.7,1007.2 674.1,1002.2 C672.4,997.3 677.5,984.1 681.5,977.5Z" fill="#3a9793"/>
<path d="M813.6,1024.4 C810.9,1020.8 815.5,1007.5 817.3,1002.2 C819.1,997 824.2,987.9 827.2,984.9 C830.1,982 836.5,979 839.5,980 C842.5,981 847.1,987.7 849.4,992.3 C851.7,997 855.5,1010.1 856.8,1014.6 C858.1,1019 861.9,1023.7 859.3,1025.7 C856.6,1027.7 843.1,1029.5 837,1029.4 C830.9,1029.2 816.2,1028.1 813.6,1024.4Z" fill="#c3bbad"/></g>
<g filter="url(#pencil)"><path d="M724.1,1080.4 C718.7,1079.2 702.3,1076.7 691.9,1073.3 C681.6,1069.9 666.9,1062.2 661.9,1060" fill="none" stroke="#f0cdc5" stroke-width="4.6" stroke-linecap="round" stroke-linejoin="round"/>
<path d="M724.1,1080.4 C719.1,1078.3 703.8,1073.2 694.4,1068.2 C685,1063.2 672.2,1053.3 667.8,1050.4" fill="none" stroke="#f0cdc5" stroke-width="4.6" stroke-linecap="round" stroke-linejoin="round"/>
<path d="M724.1,1080.4 C719.6,1076.9 705.2,1067.4 696.9,1059.7 C688.7,1052 678.2,1038.3 674.4,1034.1" fill="none" stroke="#f0cdc5" stroke-width="4.4" stroke-linecap="round" stroke-linejoin="round"/>
<path d="M724.1,1080.4 C720.1,1076.6 707.3,1065.9 700.1,1057.5 C692.9,1049.2 684.3,1034.9 681.1,1030.4" fill="none" stroke="#f0cdc5" stroke-width="4.6" stroke-linecap="round" stroke-linejoin="round"/>
<path d="M724.1,1080.4 C721.4,1075.9 712.6,1063 708.3,1053.7 C704,1044.4 699.8,1029.3 698.1,1024.4" fill="none" stroke="#f0cdc5" stroke-width="4.4" stroke-linecap="round" stroke-linejoin="round"/>
<path d="M724.1,1080.4 C722.5,1075.5 716.7,1061.3 714.4,1051.4 C712.2,1041.5 711.4,1026.2 710.7,1021.1" fill="none" stroke="#f0cdc5" stroke-width="4.2" stroke-linecap="round" stroke-linejoin="round"/>
<path d="M724.1,1080.4 C723,1075.6 718.7,1061.2 717.4,1051.5 C716.2,1041.7 716.8,1026.8 716.7,1021.9" fill="none" stroke="#f0cdc5" stroke-width="4" stroke-linecap="round" stroke-linejoin="round"/>
<path d="M724.1,1080.4 C723.9,1075.2 722.2,1059.7 722.9,1049.4 C723.5,1039.2 727,1024 727.8,1018.9" fill="none" stroke="#f0cdc5" stroke-width="4.2" stroke-linecap="round" stroke-linejoin="round"/>
<path d="M724.1,1080.4 C724.8,1075 725.9,1058.6 728.3,1048.1 C730.8,1037.7 737.1,1022.5 738.9,1017.4" fill="none" stroke="#f0cdc5" stroke-width="4.2" stroke-linecap="round" stroke-linejoin="round"/>
<path d="M724.1,1080.4 C725.6,1075.5 729.1,1060.3 733.1,1050.9 C737,1041.4 745.3,1028.2 747.8,1023.7" fill="none" stroke="#f0cdc5" stroke-width="4" stroke-linecap="round" stroke-linejoin="round"/>
<path d="M724.1,1080.4 C725.9,1075.7 730.4,1061.2 734.9,1052.4 C739.4,1043.5 748.4,1031.3 751.1,1027" fill="none" stroke="#f0cdc5" stroke-width="4" stroke-linecap="round" stroke-linejoin="round"/>
<path d="M724.1,1080.4 C719.3,1080.3 704.7,1080.9 695.2,1079.7 C685.7,1078.5 671.7,1074.4 667,1073.3" fill="none" stroke="#f0cdc5" stroke-width="4.6" stroke-linecap="round" stroke-linejoin="round"/>
<path d="M724.1,1080.4 C719.8,1080.9 706.8,1083.3 698.2,1083.5 C689.6,1083.7 676.6,1081.8 672.2,1081.5" fill="none" stroke="#f0cdc5" stroke-width="4.6" stroke-linecap="round" stroke-linejoin="round"/>
<path d="M724.1,1080.4 C720.8,1081.5 711,1085.5 704.2,1087 C697.4,1088.6 686.8,1089.2 683.3,1089.6" fill="none" stroke="#f0cdc5" stroke-width="4.6" stroke-linecap="round" stroke-linejoin="round"/>
<path d="M724.1,1080.4 C722.3,1081.6 717.3,1085.9 713.6,1088 C709.9,1090.2 703.8,1092.6 701.9,1093.5" fill="none" stroke="#f0cdc5" stroke-width="4.6" stroke-linecap="round" stroke-linejoin="round"/>
<path d="M724.1,1080.4 C721,1077.4 711.3,1069 705.8,1062.6 C700.4,1056.1 693.9,1045 691.5,1041.5" fill="none" stroke="#f0cdc5" stroke-width="4" stroke-linecap="round" stroke-linejoin="round"/>
<path d="M724.1,1080.4 C719,1079.7 703.6,1078.8 693.8,1076.5 C683.9,1074.2 669.6,1068.3 664.8,1066.7" fill="none" stroke="#f0cdc5" stroke-width="4.2" stroke-linecap="round" stroke-linejoin="round"/>
<path d="M724.1,1080.4 C720.2,1081.2 708.5,1084.6 700.6,1085.5 C692.7,1086.4 680.7,1085.9 676.7,1085.9" fill="none" stroke="#f0cdc5" stroke-width="4.2" stroke-linecap="round" stroke-linejoin="round"/>
<path d="M752.6,1054.8 C750.9,1058.4 746.1,1069 742.6,1076.3 C739.1,1083.6 733.3,1094.8 731.5,1098.5" fill="none" stroke="#f0cdc5" stroke-width="4.6" stroke-linecap="round" stroke-linejoin="round"/>
<path d="M748.5,1047.4 C746.7,1051.6 740.7,1065.1 737.4,1072.6 C734.1,1080.1 730,1089.3 728.5,1092.6" fill="none" stroke="#f0cdc5" stroke-width="4.4" stroke-linecap="round" stroke-linejoin="round"/></g>
<g filter="url(#chalk)"><path d="M817.2,1038 C817.2,1043.6 815.3,1049.7 812.5,1054.5 C809.8,1059.4 805.5,1064.4 800.8,1067.1 C796,1069.9 789.5,1071.2 784,1071.2 C778.4,1071.1 772.3,1069.3 767.5,1066.6 C762.6,1063.8 757.9,1059.6 754.8,1054.8 C751.8,1050.1 749.4,1043.7 749.3,1038 C749.2,1032.4 751.2,1025.8 754.1,1020.8 C757,1015.8 761.8,1010.9 766.8,1008.3 C771.7,1005.6 778.3,1004.7 784,1004.8 C789.6,1004.8 796.1,1005.9 800.9,1008.7 C805.7,1011.4 810.1,1016.4 812.9,1021.3 C815.6,1026.2 817.3,1032.5 817.2,1038Z" fill="#9ca998"/></g>
<g filter="url(#chalk)"><path d="M1160.1,761.9 C1159.1,759.2 1155.7,757.8 1148.9,752.9 C1142.1,747.9 1126,737 1119.3,732.5 C1112.5,727.9 1111.1,727.1 1108.3,725.5 C1105.6,724 1104.4,723.5 1103,723.2 C1101.5,722.9 1100.4,723.4 1099.6,723.6 C1098.8,723.9 1098.6,724.4 1098.3,724.9 C1097.9,725.4 1097.5,725.8 1097.5,726.6 C1097.5,727.5 1097.5,728.7 1098.3,729.9 C1099.1,731.2 1100,732.1 1102.4,734.1 C1104.8,736.1 1106.2,737.2 1112.8,741.8 C1119.5,746.5 1135.4,757.6 1142.5,762.2 C1149.5,766.8 1152,769.5 1155,769.4 C1157.9,769.4 1161.1,764.7 1160.1,761.9Z" fill="#f3c9c3"/>
<path d="M1161.2,762.4 C1160.9,759.2 1157.7,756.8 1151.8,749.8 C1145.9,742.7 1131.8,726.8 1125.9,720.1 C1119.9,713.5 1118.6,712.2 1116.2,709.8 C1113.7,707.4 1112.6,706.6 1111.1,705.9 C1109.6,705.1 1108.3,705.3 1107.4,705.4 C1106.5,705.5 1106.2,706 1105.7,706.4 C1105.2,706.9 1104.7,707.1 1104.5,708 C1104.2,708.9 1103.9,710.2 1104.4,711.7 C1104.9,713.3 1105.6,714.5 1107.6,717.3 C1109.7,720 1110.8,721.5 1116.6,728.3 C1122.4,735 1136.3,751.1 1142.5,757.9 C1148.7,764.7 1150.7,768.2 1153.8,768.9 C1156.9,769.7 1161.6,765.6 1161.2,762.4Z" fill="#f3c9c3"/>
<path d="M1161.8,763.3 C1162.3,760.3 1159.9,757.6 1156,750.3 C1152.1,743 1142.7,726.4 1138.7,719.5 C1134.7,712.5 1133.8,711.1 1132.1,708.6 C1130.3,706 1129.4,705.1 1128.2,704.2 C1127,703.4 1125.7,703.3 1124.9,703.3 C1124,703.2 1123.5,703.6 1123,704 C1122.4,704.3 1121.8,704.5 1121.4,705.2 C1121,706 1120.3,707.1 1120.5,708.6 C1120.6,710.1 1120.9,711.3 1122.2,714.1 C1123.4,716.9 1124.1,718.4 1127.9,725.5 C1131.8,732.5 1141,749.2 1145.2,756.3 C1149.4,763.5 1150.5,766.9 1153.2,768.1 C1156,769.2 1161.4,766.2 1161.8,763.3Z" fill="#f3c9c3"/>
<path d="M1161.9,764.6 C1163.1,762.2 1161.6,759.5 1160.1,752.7 C1158.5,745.9 1154.4,730.2 1152.7,723.7 C1150.9,717.1 1150.5,715.8 1149.6,713.3 C1148.7,710.9 1148.1,709.9 1147.3,709 C1146.4,708 1145.3,707.7 1144.6,707.5 C1143.8,707.3 1143.3,707.5 1142.7,707.7 C1142.1,707.8 1141.6,707.8 1141,708.4 C1140.5,708.9 1139.6,709.7 1139.3,711 C1139.1,712.2 1139,713.3 1139.4,715.9 C1139.8,718.5 1140.1,719.9 1141.7,726.5 C1143.3,733.1 1147.2,748.8 1149.1,755.5 C1151,762.2 1151,765.3 1153.1,766.8 C1155.3,768.3 1160.8,766.9 1161.9,764.6Z" fill="#f3c9c3"/>
<path d="M1157,761.8 C1155.5,760.5 1153.6,761.4 1149,761.8 C1144.4,762.2 1133.7,763.6 1129.3,764.2 C1124.8,764.9 1123.9,765.1 1122.2,765.5 C1120.5,766 1119.9,766.3 1119.2,766.9 C1118.5,767.5 1118.2,768.4 1118,769 C1117.8,769.6 1118,770.1 1118,770.6 C1118.1,771.1 1118.1,771.6 1118.4,772.2 C1118.8,772.7 1119.2,773.6 1120,773.9 C1120.9,774.3 1121.6,774.5 1123.3,774.5 C1125.1,774.5 1126,774.5 1130.5,774 C1135,773.5 1145.7,772.3 1150.2,771.6 C1154.8,770.8 1156.9,771.2 1158,769.6 C1159.2,768 1158.5,763.1 1157,761.8Z" fill="#f3c9c3"/>
<path d="M1158.8,761.5 C1157.5,759.4 1154.5,759.2 1148,757 C1141.6,754.8 1126.6,750.3 1120.3,748.4 C1113.9,746.5 1112.6,746.2 1110.1,745.7 C1107.6,745.2 1106.6,745.2 1105.4,745.4 C1104.1,745.5 1103.3,746.3 1102.8,746.8 C1102.2,747.3 1102.1,747.8 1102,748.4 C1101.8,748.9 1101.6,749.4 1101.7,750.1 C1101.9,750.9 1102.1,752 1103,752.8 C1103.9,753.7 1104.8,754.3 1107.2,755.2 C1109.5,756.2 1110.8,756.7 1117,758.8 C1123.3,760.8 1138.3,765.6 1144.8,767.4 C1151.3,769.3 1153.9,770.8 1156.2,769.8 C1158.6,768.8 1160.2,763.7 1158.8,761.5Z" fill="#f3c9c3"/>
<path d="M1108.1,731.1 C1110.1,725.2 1126.3,716.3 1132.8,716.3 C1139.4,716.3 1153.9,724.5 1157.5,731.1 C1161.2,737.7 1162.6,759.8 1160,765.7 C1157.4,771.6 1143.4,776.2 1137.8,775.6 C1132.2,774.9 1122,766.7 1118,760.7 C1114.1,754.8 1106.2,737 1108.1,731.1Z" fill="#f3c9c3"/></g>
<g filter="url(#chalk)"><path d="M1113.2,859.6 C1112.8,856 1109,853.2 1102,845.2 C1095.1,837.2 1078.5,819.1 1071.5,811.6 C1064.5,804 1063,802.5 1060.1,799.9 C1057.2,797.2 1055.8,796.2 1054.1,795.4 C1052.4,794.6 1050.9,794.9 1049.9,795 C1048.9,795.1 1048.5,795.7 1047.9,796.2 C1047.3,796.7 1046.7,797 1046.5,798 C1046.3,799.1 1045.9,800.5 1046.6,802.3 C1047.2,804.1 1048,805.5 1050.4,808.6 C1052.8,811.8 1054.1,813.4 1061,821.1 C1067.8,828.8 1084.2,847.1 1091.5,854.8 C1098.8,862.5 1101.2,866.5 1104.8,867.3 C1108.4,868.1 1113.7,863.3 1113.2,859.6Z" fill="#c4bbab"/>
<path d="M1118.2,850.7 C1118.5,846.3 1114.9,841.9 1109,830.3 C1103.1,818.7 1088.8,792.3 1082.8,781.2 C1076.8,770.2 1075.4,767.9 1072.8,763.9 C1070.2,759.8 1068.9,758.3 1067.2,756.7 C1065.6,755.2 1063.9,755 1062.7,754.8 C1061.5,754.5 1061,755 1060.2,755.4 C1059.5,755.8 1058.8,756 1058.3,757.1 C1057.9,758.2 1057.1,759.7 1057.4,762 C1057.8,764.2 1058.3,766.1 1060.3,770.6 C1062.2,775 1063.3,777.3 1069.2,788.5 C1075,799.7 1089.1,826.3 1095.4,837.6 C1101.8,848.9 1103.5,854.3 1107.3,856.5 C1111.1,858.7 1117.9,855 1118.2,850.7Z" fill="#c4bbab"/>
<path d="M1124,846.7 C1125.1,841.8 1122.2,835.9 1118,821.3 C1113.8,806.6 1103.3,773 1098.8,758.9 C1094.4,744.8 1093.3,742 1091.3,736.7 C1089.3,731.4 1088.2,729.3 1086.6,727.2 C1085.1,725 1083.3,724.3 1082.1,723.8 C1080.9,723.3 1080.2,723.7 1079.4,724 C1078.5,724.2 1077.7,724.2 1077,725.4 C1076.3,726.5 1075.2,728.1 1075.2,730.7 C1075.1,733.3 1075.4,735.6 1076.6,741.2 C1077.9,746.7 1078.7,749.6 1082.9,763.8 C1087.1,778 1097.3,811.7 1102,826.1 C1106.8,840.6 1107.6,847.2 1111.3,850.6 C1114.9,854 1122.9,851.6 1124,846.7Z" fill="#c4bbab"/>
<path d="M1130.7,846.6 C1132.3,842.9 1130.7,838 1129.3,826.1 C1127.8,814.1 1123.9,786.7 1122.2,775.1 C1120.5,763.6 1120,761.2 1119,756.9 C1118.1,752.5 1117.5,750.8 1116.5,748.9 C1115.5,747.1 1114.1,746.3 1113.2,745.8 C1112.2,745.2 1111.6,745.5 1110.9,745.6 C1110.1,745.7 1109.4,745.6 1108.7,746.4 C1107.9,747.2 1106.8,748.3 1106.4,750.3 C1105.9,752.4 1105.8,754.2 1106.1,758.7 C1106.4,763.1 1106.6,765.5 1108.1,777.1 C1109.6,788.6 1113.3,816.2 1115.2,828 C1117.1,839.9 1116.9,845.1 1119.4,848.2 C1122,851.3 1129.1,850.3 1130.7,846.6Z" fill="#c4bbab"/>
<path d="M1104.8,860.9 C1104.2,858.1 1101.1,856.6 1095.3,851.4 C1089.5,846.3 1075.5,834.9 1069.7,830.1 C1063.8,825.4 1062.6,824.5 1060.1,822.8 C1057.7,821.2 1056.6,820.7 1055.3,820.4 C1053.9,820 1052.7,820.5 1051.9,820.8 C1051.1,821.1 1050.8,821.6 1050.4,822.1 C1049.9,822.6 1049.5,823 1049.4,823.8 C1049.2,824.7 1049,825.9 1049.6,827.2 C1050.2,828.5 1050.9,829.5 1052.9,831.6 C1054.9,833.6 1056,834.7 1061.8,839.6 C1067.5,844.5 1081.3,856.1 1087.4,860.9 C1093.5,865.7 1095.6,868.5 1098.4,868.5 C1101.3,868.5 1105.3,863.7 1104.8,860.9Z" fill="#c4bbab"/>
<path d="M1133,851.1 C1134.5,849.5 1133.8,847 1134,841.4 C1134.2,835.7 1134.1,822.5 1134,817 C1133.9,811.4 1133.8,810.3 1133.6,808.2 C1133.3,806.1 1133.1,805.2 1132.5,804.3 C1132,803.4 1131.1,802.9 1130.4,802.6 C1129.8,802.3 1129.3,802.3 1128.8,802.3 C1128.2,802.3 1127.7,802.3 1127.1,802.6 C1126.5,802.9 1125.5,803.4 1125,804.3 C1124.5,805.2 1124.2,806.1 1123.9,808.2 C1123.7,810.3 1123.6,811.4 1123.5,817 C1123.4,822.5 1123.3,835.7 1123.5,841.4 C1123.7,847 1123,849.5 1124.6,851.1 C1126.1,852.7 1131.4,852.7 1133,851.1Z" fill="#c4bbab"/>
<path d="M1083.1,833.8 C1085.1,827.9 1097.2,820 1104.1,819 C1111,818 1130.3,820.5 1134.9,826.4 C1139.5,832.3 1138.8,855.9 1138.6,863.5 C1138.5,871 1137.7,881.6 1133.7,883.2 C1129.8,884.9 1114.9,878.4 1109,875.8 C1103.1,873.2 1092.7,869.1 1089.3,863.5 C1085.8,857.9 1081.1,839.8 1083.1,833.8Z" fill="#c4bbab"/>
<path d="M1037.4,875.8 C1038.6,872.7 1041.8,863 1044.8,857.3 C1047.8,851.5 1053.6,843.9 1055.3,841.2" fill="none" stroke="#c4bbab" stroke-width="2.6" stroke-linecap="round" stroke-linejoin="round"/></g>
<path d="M1055.9,756 C1058.4,762 1065.4,777.2 1070.7,791.9 C1076.1,806.5 1085.1,835.1 1088,843.7" fill="none" stroke="#50666a" stroke-width="0.9" stroke-linecap="round" opacity="0.7"/>
<path d="M1048.5,788.1 C1051.6,792.9 1060.9,807.1 1067,816.5 C1073.2,826 1082.5,840.2 1085.6,844.9" fill="none" stroke="#50666a" stroke-width="0.9" stroke-linecap="round" opacity="0.7"/>
<path d="M1070.7,758.5 C1072.8,763.7 1078.4,778.1 1083.1,789.4 C1087.8,800.7 1096.5,820.2 1099.1,826.4" fill="none" stroke="#50666a" stroke-width="0.9" stroke-linecap="round" opacity="0.7"/>
<path d="M1045.4,822.1 L1062.1,838.8" fill="none" stroke="#50666a" stroke-width="0.9" stroke-linecap="round" opacity="0.7"/>
<path d="M1106.5,780.7 C1108.2,785.5 1114,800.7 1116.4,809.1 C1118.9,817.6 1120.5,827.7 1121.4,831.4" fill="none" stroke="#50666a" stroke-width="0.9" stroke-linecap="round" opacity="0.7"/>
<g filter="url(#chalk)"><path d="M1250.5,852.8 C1254.3,851.6 1255.2,847.3 1260.1,838.6 C1264.9,830 1275.4,809.6 1279.8,801 C1284.2,792.4 1284.9,790.5 1286.3,787.1 C1287.6,783.6 1287.8,782.1 1287.8,780.2 C1287.7,778.3 1286.6,776.8 1285.9,775.8 C1285.2,774.8 1284.3,774.5 1283.5,774.1 C1282.6,773.6 1281.9,773.1 1280.6,773.1 C1279.4,773.1 1277.6,773 1276,774 C1274.4,775 1273.3,776.1 1271.2,779.2 C1269.1,782.2 1268,783.9 1263.4,792.4 C1258.8,800.8 1248,821.1 1243.7,830 C1239.3,838.9 1236.2,842.1 1237.4,845.9 C1238.5,849.7 1246.7,854 1250.5,852.8Z" fill="#a3aa97"/>
<path d="M1260.4,884.6 C1264.7,883.6 1266.2,878.8 1272.7,869.6 C1279.1,860.5 1293.3,838.7 1299.2,829.5 C1305.1,820.4 1306.2,818.4 1308.1,814.6 C1310,810.9 1310.5,809.2 1310.7,807.1 C1310.9,805.1 1309.9,803.3 1309.3,802.1 C1308.6,801 1307.8,800.6 1306.9,800 C1306,799.4 1305.4,798.8 1304,798.7 C1302.7,798.5 1300.7,798.3 1298.9,799.3 C1297,800.3 1295.6,801.4 1293,804.6 C1290.3,807.8 1288.9,809.6 1282.8,818.6 C1276.6,827.6 1262.1,849.2 1256.2,858.7 C1250.3,868.3 1246.5,871.6 1247.2,875.9 C1247.9,880.2 1256.2,885.6 1260.4,884.6Z" fill="#a3aa97"/>
<path d="M1262.3,901.6 C1265.7,902.9 1268.2,900.2 1275.5,896.5 C1282.9,892.9 1299.4,883.8 1306.4,879.9 C1313.3,876 1314.7,875 1317.1,873.2 C1319.6,871.4 1320.4,870.4 1321.2,868.9 C1321.9,867.5 1321.7,865.7 1321.6,864.5 C1321.5,863.3 1321,862.6 1320.5,861.7 C1320,860.9 1319.7,860 1318.8,859.3 C1317.8,858.5 1316.5,857.4 1314.9,857.2 C1313.2,857 1311.9,857.2 1309,858.2 C1306.2,859.3 1304.6,859.9 1297.6,863.6 C1290.5,867.3 1273.8,876.1 1266.7,880.2 C1259.7,884.4 1256,885 1255.2,888.5 C1254.5,892.1 1258.9,900.2 1262.3,901.6Z" fill="#a3aa97"/>
<path d="M1206.8,844.9 C1208,841.6 1205.3,839 1201.7,831.7 C1198,824.4 1188.9,807.8 1185,800.8 C1181.1,793.9 1180.2,792.5 1178.4,790 C1176.6,787.6 1175.6,786.7 1174.2,785.9 C1172.8,785.2 1171.1,785.3 1170,785.4 C1168.9,785.5 1168.2,786 1167.4,786.4 C1166.6,786.9 1165.8,787.1 1165.1,788 C1164.5,788.9 1163.4,790.3 1163.3,791.8 C1163.1,793.4 1163.3,794.7 1164.4,797.6 C1165.5,800.5 1166.1,802 1169.8,809 C1173.5,816.1 1182.3,832.8 1186.5,839.9 C1190.6,847 1191.3,850.6 1194.7,851.4 C1198,852.3 1205.7,848.2 1206.8,844.9Z" fill="#a3aa97"/>
<path d="M1235.5,859.9 C1237.6,856.5 1236.1,851.8 1235.4,840.5 C1234.7,829.3 1232.2,803.3 1231.1,792.4 C1230,781.5 1229.6,779.2 1228.9,775.1 C1228.1,771 1227.6,769.3 1226.6,767.5 C1225.6,765.8 1224.1,765 1223.1,764.4 C1222.1,763.9 1221.3,764.1 1220.5,764.2 C1219.6,764.3 1218.9,764.2 1218,764.9 C1217.1,765.6 1215.7,766.6 1215.1,768.6 C1214.5,770.5 1214.2,772.2 1214.2,776.4 C1214.2,780.6 1214.2,782.9 1215.1,793.8 C1216,804.7 1218.1,830.7 1219.4,842 C1220.7,853.2 1220.1,858.1 1222.7,861.1 C1225.4,864.1 1233.4,863.3 1235.5,859.9Z" fill="#a3aa97"/>
<path d="M1248.2,849 C1250.1,846.7 1251.7,842.6 1256.2,833.5 C1260.6,824.4 1270.8,803.2 1275,794.3 C1279.2,785.4 1280.1,783.6 1281.6,780.1 C1283.1,776.7 1283.7,775.3 1284.2,773.7 C1284.7,772 1284.6,771.1 1284.6,770.5 C1284.6,769.8 1284.3,769.9 1284.1,769.8 C1283.8,769.6 1283.7,769.4 1283.2,769.8 C1282.7,770.2 1281.9,770.7 1281,772.1 C1280,773.5 1279.2,774.8 1277.5,778.2 C1275.8,781.5 1274.8,783.3 1270.6,792.2 C1266.3,801.1 1256,822.2 1251.7,831.4 C1247.4,840.6 1245.2,844.4 1244.6,847.3 C1244.1,850.2 1246.3,851.3 1248.2,849Z" fill="#b5e0da"/>
<path d="M1258.4,879.1 C1261,876.6 1263.5,871.9 1270.1,861.5 C1276.8,851.1 1291.9,826.9 1298.2,816.8 C1304.6,806.6 1305.8,804.5 1308.1,800.5 C1310.4,796.6 1311.3,794.9 1312.1,793 C1312.9,791.2 1313,790 1313,789.2 C1313.1,788.5 1312.7,788.4 1312.5,788.3 C1312.2,788.1 1312,787.8 1311.4,788.2 C1310.7,788.6 1309.7,789.1 1308.3,790.7 C1307,792.2 1305.9,793.7 1303.3,797.5 C1300.8,801.3 1299.4,803.4 1293,813.5 C1286.6,823.6 1271.4,847.7 1264.9,858.2 C1258.5,868.7 1255.3,873 1254.2,876.5 C1253.1,879.9 1255.7,881.6 1258.4,879.1Z" fill="#b5e0da"/>
<path d="M1262.7,894.6 C1265.1,894 1267.8,891.6 1274.6,886.8 C1281.5,882.1 1297.1,870.9 1303.6,866.2 C1310.2,861.4 1311.5,860.4 1313.9,858.5 C1316.4,856.6 1317.3,855.7 1318.2,854.7 C1319.2,853.7 1319.4,852.8 1319.5,852.2 C1319.7,851.7 1319.5,851.5 1319.3,851.2 C1319.1,851 1319,850.7 1318.4,850.6 C1317.8,850.6 1316.9,850.5 1315.6,851.1 C1314.4,851.6 1313.2,852.2 1310.6,853.9 C1308.1,855.6 1306.7,856.5 1300.1,861.1 C1293.5,865.8 1277.8,876.9 1271,881.8 C1264.3,886.7 1261.2,888.4 1259.8,890.6 C1258.4,892.7 1260.2,895.2 1262.7,894.6Z" fill="#b5e0da"/>
<path d="M1260.1,836.4 C1261.1,835.7 1261.5,834.1 1263,830.8 C1264.6,827.4 1268.1,819.5 1269.5,816.2 C1271,813 1271.2,812.3 1271.7,811 C1272.2,809.7 1272.3,809.1 1272.4,808.5 C1272.5,807.9 1272.3,807.5 1272.2,807.2 C1272.1,806.9 1271.9,806.9 1271.7,806.8 C1271.5,806.7 1271.4,806.6 1271.1,806.7 C1270.8,806.8 1270.4,806.9 1270,807.4 C1269.6,807.9 1269.3,808.4 1268.6,809.6 C1268,810.8 1267.6,811.5 1266.1,814.7 C1264.7,818 1261.1,825.8 1259.7,829.2 C1258.2,832.7 1257.3,834 1257.4,835.2 C1257.5,836.4 1259.2,837.1 1260.1,836.4Z" fill="#b5e0da"/>
<path d="M1237,862.1 C1239.6,858.5 1237.7,853.8 1236.7,842.6 C1235.8,831.3 1232.6,805.3 1231.2,794.4 C1229.8,783.5 1229.3,781.3 1228.4,777.2 C1227.4,773.1 1226.7,771.4 1225.5,769.7 C1224.3,768 1222.5,767.3 1221.2,766.8 C1220,766.3 1219.1,766.5 1218,766.7 C1217,766.8 1216,766.7 1214.9,767.5 C1213.8,768.3 1212.2,769.4 1211.4,771.3 C1210.6,773.3 1210.3,775 1210.3,779.3 C1210.4,783.5 1210.4,785.8 1211.5,796.7 C1212.7,807.6 1215.5,833.6 1217.1,844.8 C1218.7,856 1218,861 1221.3,863.9 C1224.6,866.7 1234.4,865.6 1237,862.1Z" fill="#3a9793"/>
<path d="M1245.8,854.1 C1249.9,852.9 1251.3,848.7 1256.4,839.9 C1261.5,831 1272.1,810 1276.5,801.1 C1280.8,792.2 1281.1,790.1 1282.2,786.5 C1283.3,782.8 1283.5,781.1 1283.3,779.2 C1283.1,777.2 1281.9,775.7 1281.1,774.6 C1280.3,773.6 1279.4,773.3 1278.5,772.8 C1277.6,772.4 1276.9,771.8 1275.6,771.9 C1274.4,771.9 1272.5,771.8 1271,772.9 C1269.5,774 1268.4,775.2 1266.5,778.5 C1264.6,781.7 1263.9,783.7 1259.4,792.5 C1254.9,801.3 1243.8,822.1 1239.3,831.2 C1234.8,840.3 1231.1,843.3 1232.2,847.2 C1233.3,851 1241.8,855.3 1245.8,854.1Z" fill="#3a9793"/>
<path d="M1255.7,884.7 C1260.2,883.8 1262.3,879.3 1269,870.1 C1275.7,861 1290.1,839 1295.9,829.6 C1301.7,820.3 1302.3,818 1304.1,814 C1305.8,810.1 1306.1,808.3 1306.2,806.2 C1306.3,804 1305.2,802.2 1304.5,801 C1303.8,799.7 1302.9,799.4 1302,798.8 C1301.1,798.2 1300.3,797.5 1299,797.4 C1297.7,797.3 1295.7,797.1 1293.9,798.2 C1292.1,799.2 1290.9,800.4 1288.4,803.8 C1285.8,807.2 1284.9,809.3 1278.8,818.5 C1272.8,827.7 1258.1,849.5 1251.9,859 C1245.8,868.6 1241.4,871.5 1242.1,875.8 C1242.7,880.1 1251.2,885.6 1255.7,884.7Z" fill="#3a9793"/>
<path d="M1257.3,900.4 C1260.9,901.9 1263.9,899.7 1271.8,896.3 C1279.8,892.8 1297.5,883.5 1304.8,879.4 C1312.1,875.3 1313.3,873.8 1315.8,871.7 C1318.3,869.6 1319.1,868.4 1319.9,866.8 C1320.6,865.2 1320.4,863.3 1320.3,862.1 C1320.2,860.8 1319.7,860.1 1319.3,859.3 C1318.8,858.4 1318.5,857.6 1317.6,856.8 C1316.6,856.1 1315.3,855 1313.7,855 C1312,855 1310.7,855.3 1307.8,856.6 C1304.9,857.9 1303.6,859.2 1296.1,863 C1288.7,866.9 1270.8,875.8 1263.2,879.9 C1255.6,883.9 1251.4,883.9 1250.4,887.3 C1249.4,890.7 1253.7,898.9 1257.3,900.4Z" fill="#3a9793"/>
<path d="M1207,846.7 C1208.1,843.2 1205.2,840.9 1201.2,833.9 C1197.1,826.8 1187,810.9 1182.7,804.2 C1178.4,797.6 1177.3,796.3 1175.4,794 C1173.4,791.6 1172.3,790.8 1170.8,790.2 C1169.3,789.6 1167.6,789.9 1166.4,790.1 C1165.2,790.3 1164.5,790.8 1163.7,791.4 C1162.9,791.9 1162.1,792.2 1161.4,793.2 C1160.7,794.2 1159.6,795.6 1159.5,797.3 C1159.5,798.9 1159.7,800.2 1160.9,803 C1162.2,805.8 1162.9,807.3 1167,814 C1171.1,820.8 1180.9,836.9 1185.5,843.7 C1190.1,850.4 1190.9,854 1194.5,854.5 C1198,855 1205.9,850.1 1207,846.7Z" fill="#3a9793"/>
<path d="M1188.7,856.2 C1188.9,853.3 1186.3,852.2 1181.9,847.7 C1177.4,843.2 1166.6,833.3 1162.1,829.2 C1157.6,825 1156.5,824.3 1154.6,822.9 C1152.6,821.6 1151.7,821.2 1150.4,821 C1149.1,820.9 1147.9,821.5 1147,821.9 C1146.1,822.3 1145.7,822.9 1145.2,823.5 C1144.6,824 1144.1,824.5 1143.8,825.4 C1143.4,826.3 1142.9,827.6 1143.1,828.8 C1143.4,830.1 1143.8,831 1145.3,832.9 C1146.7,834.7 1147.6,835.7 1152,840 C1156.4,844.2 1166.9,854.3 1171.7,858.5 C1176.5,862.6 1177.8,865.2 1180.6,864.8 C1183.5,864.4 1188.5,859 1188.7,856.2Z" fill="#3a9793"/>
<path d="M1174.8,835.8 C1180.7,830 1190.5,820.6 1197,817.3 C1203.6,814 1216.6,810.3 1224.2,811.1 C1231.8,811.9 1247.6,816.9 1253.8,823.5 C1260.1,830 1267.2,851.3 1271.1,860.5 C1275.1,869.7 1282.5,886.7 1283.5,892.6 C1284.4,898.5 1283.5,902.6 1278.5,904.9 C1273.6,907.2 1257.3,909.2 1246.4,909.9 C1235.6,910.5 1207.9,913.2 1197,909.9 C1186.2,906.6 1170.9,891.8 1164.9,885.2 C1159,878.6 1151.3,867.1 1152.6,860.5 C1153.9,853.9 1168.9,841.6 1174.8,835.8Z" fill="#3a9793"/>
<path d="M1242.2,895.3 C1243.4,898.3 1246.4,897.9 1252.8,900 C1259.2,902 1274.3,905.8 1280.6,907.4 C1286.9,908.9 1288.3,909.1 1290.8,909.4 C1293.3,909.6 1294.4,909.4 1295.7,908.9 C1297,908.3 1297.9,907 1298.5,906.1 C1299.2,905.2 1299.3,904.3 1299.5,903.5 C1299.7,902.6 1300,901.8 1299.9,900.7 C1299.8,899.6 1299.7,898 1298.9,896.9 C1298,895.7 1297.2,895 1294.9,894 C1292.6,893 1291.3,892.5 1285.1,890.7 C1278.8,888.9 1263.8,884.7 1257.3,883.3 C1250.7,881.8 1248.3,880 1245.7,882 C1243.2,884 1241,892.3 1242.2,895.3Z" fill="#a3aa97"/>
<path d="M1228.1,895.9 C1228,898.6 1230.5,899.1 1234.6,902.5 C1238.8,905.9 1248.9,913.1 1253.2,916.1 C1257.4,919.1 1258.4,919.6 1260.2,920.5 C1262,921.4 1262.9,921.6 1264,921.5 C1265.2,921.4 1266.3,920.6 1267.1,920 C1267.8,919.5 1268.2,918.9 1268.6,918.3 C1269.1,917.6 1269.6,917.1 1269.9,916.2 C1270.1,915.3 1270.6,914 1270.3,912.9 C1270,911.8 1269.6,911 1268.2,909.5 C1266.8,908.1 1266.1,907.3 1261.9,904.2 C1257.8,901 1247.9,893.5 1243.4,890.6 C1238.9,887.6 1237.7,885.4 1235.1,886.3 C1232.6,887.2 1228.2,893.2 1228.1,895.9Z" fill="#a3aa97"/>
<path d="M1237.4,892.5 C1238.7,895.4 1242,895.1 1248.8,897.1 C1255.7,899.2 1271.7,903.1 1278.5,904.8 C1285.2,906.4 1286.6,906.6 1289.3,906.9 C1291.9,907.2 1293.1,907 1294.4,906.5 C1295.8,906.1 1296.7,904.8 1297.3,903.9 C1298,903.1 1298.1,902.3 1298.3,901.5 C1298.5,900.6 1298.8,899.9 1298.6,898.9 C1298.5,897.8 1298.3,896.3 1297.4,895.2 C1296.4,894.1 1295.5,893.4 1293,892.4 C1290.6,891.4 1289.2,890.8 1282.5,889 C1275.8,887.2 1259.9,882.9 1252.9,881.3 C1245.9,879.8 1243.2,878 1240.6,879.9 C1238.1,881.7 1236,889.6 1237.4,892.5Z" fill="#3a9793"/>
<path d="M1211.7,868.8 C1211.8,865.4 1208.6,863.9 1203,858.2 C1197.4,852.5 1184,840 1178.3,834.7 C1172.6,829.5 1171.4,828.5 1168.9,826.8 C1166.5,825 1165.3,824.6 1163.8,824.3 C1162.3,824 1160.7,824.7 1159.7,825.1 C1158.6,825.6 1158.2,826.2 1157.5,826.9 C1156.9,827.6 1156.3,828.1 1155.9,829.2 C1155.5,830.2 1154.9,831.8 1155.2,833.3 C1155.6,834.8 1156.1,836 1158,838.3 C1159.8,840.6 1160.9,841.9 1166.4,847.3 C1171.9,852.7 1185.1,865.4 1191.1,870.7 C1197,876 1198.7,879.2 1202.2,878.8 C1205.6,878.5 1211.5,872.3 1211.7,868.8Z" fill="#3a9793"/>
<path d="M1212.6,878.2 C1211.6,876 1209.6,876.7 1205.4,875.9 C1201.1,875.1 1191,873.9 1186.8,873.4 C1182.6,872.9 1181.7,872.9 1180.1,873.1 C1178.5,873.2 1177.8,873.4 1177,874 C1176.2,874.6 1175.6,875.8 1175.3,876.6 C1174.9,877.4 1174.9,878 1174.8,878.8 C1174.7,879.5 1174.6,880.1 1174.7,881 C1174.8,881.8 1175,883.1 1175.6,883.9 C1176.3,884.7 1176.9,885.1 1178.4,885.7 C1180,886.2 1180.8,886.4 1185,887.1 C1189.2,887.8 1199.2,889.2 1203.5,889.6 C1207.9,889.9 1209.6,891.1 1211.1,889.2 C1212.6,887.3 1213.5,880.4 1212.6,878.2Z" fill="#3a9793"/>
<path d="M1195.3,836.2 C1196.2,833.5 1194,831.4 1191,825.4 C1188.1,819.4 1180.6,805.8 1177.5,800.1 C1174.3,794.4 1173.6,793.3 1172.1,791.3 C1170.6,789.2 1169.8,788.5 1168.7,787.9 C1167.6,787.2 1166.3,787.3 1165.4,787.4 C1164.5,787.4 1164,787.8 1163.3,788.1 C1162.7,788.5 1162.1,788.7 1161.6,789.4 C1161,790.2 1160.2,791.2 1160.1,792.5 C1160,793.8 1160.2,794.8 1161.1,797.2 C1162,799.5 1162.5,800.8 1165.5,806.5 C1168.5,812.3 1175.7,826.1 1179.1,831.9 C1182.4,837.7 1183,840.6 1185.7,841.3 C1188.4,842.1 1194.4,838.8 1195.3,836.2Z" fill="#3a9793"/>
<path d="M1186.6,837.4 C1186.6,835.4 1184.7,835.2 1181.5,833 C1178.3,830.9 1170.6,826.3 1167.3,824.4 C1164.1,822.5 1163.4,822.2 1162,821.7 C1160.6,821.1 1160,821.1 1159.1,821.2 C1158.3,821.4 1157.5,822.1 1157,822.5 C1156.5,823 1156.2,823.4 1155.9,824 C1155.6,824.5 1155.3,824.9 1155.1,825.6 C1155,826.2 1154.7,827.3 1155,828.1 C1155.2,828.9 1155.6,829.4 1156.7,830.4 C1157.8,831.4 1158.4,831.9 1161.6,833.9 C1164.7,835.9 1172.3,840.7 1175.8,842.5 C1179.2,844.4 1180.2,845.9 1182,845 C1183.8,844.2 1186.7,839.4 1186.6,837.4Z" fill="#3a9793"/>
<path d="M1192.6,872.5 C1192.7,870.8 1191.4,870.7 1189.2,869.1 C1186.9,867.6 1181.6,864.3 1179.3,863 C1177,861.6 1176.5,861.4 1175.5,861.1 C1174.5,860.7 1174.1,860.8 1173.4,860.9 C1172.8,861.1 1172.1,861.8 1171.7,862.2 C1171.2,862.6 1171,863 1170.7,863.5 C1170.5,863.9 1170.2,864.3 1170,864.9 C1169.8,865.4 1169.5,866.3 1169.6,867 C1169.8,867.6 1170,868.1 1170.7,868.8 C1171.4,869.5 1171.8,869.9 1174,871.3 C1176.3,872.8 1181.5,876.2 1183.9,877.5 C1186.3,878.8 1187,880 1188.4,879.2 C1189.8,878.3 1192.5,874.1 1192.6,872.5Z" fill="#3a9793"/>
<path d="M1178.1,816.5 C1182.3,811.6 1195.6,812.8 1202.8,814.1 C1210.1,815.4 1228.5,815.2 1232.5,826.4 C1236.4,837.6 1236.4,888.1 1232.5,898 C1228.5,907.9 1210.1,902.1 1202.8,900.5 C1195.6,898.8 1182.3,892.3 1178.1,885.7 C1174,879.1 1172,860.3 1172,851.1 C1172,841.9 1174,821.5 1178.1,816.5Z" fill="#3a9793"/></g>
<g filter="url(#chalk)" opacity="0.92"><path d="M1154.9,902.8 C1156.3,900.2 1155.6,896.3 1155.4,887.3 C1155.3,878.2 1154.5,857.2 1154.2,848.4 C1153.8,839.5 1153.7,837.7 1153.4,834.4 C1153,831 1152.7,829.7 1152.2,828.2 C1151.6,826.7 1150.7,826 1150.1,825.5 C1149.5,825 1149,825.2 1148.5,825.2 C1148,825.2 1147.5,825.1 1147,825.6 C1146.4,826.2 1145.5,826.9 1145.1,828.4 C1144.6,829.9 1144.4,831.3 1144.3,834.7 C1144.2,838 1144.1,839.9 1144.3,848.7 C1144.5,857.5 1145.1,878.5 1145.6,887.6 C1146,896.6 1145.5,900.5 1147,903.1 C1148.6,905.6 1153.5,905.5 1154.9,902.8Z" fill="#f3c9c3"/>
<path d="M1156.8,901.2 C1158.8,898.5 1159.2,893.9 1161.6,883.4 C1164.1,872.9 1169.3,848.6 1171.5,838.3 C1173.7,828.1 1174.1,826 1174.7,822 C1175.4,818.1 1175.5,816.5 1175.5,814.6 C1175.4,812.8 1174.8,811.8 1174.5,811.1 C1174.1,810.4 1173.7,810.5 1173.2,810.4 C1172.8,810.3 1172.4,810 1171.8,810.5 C1171.1,811 1170.2,811.7 1169.4,813.3 C1168.6,814.9 1168,816.5 1167,820.3 C1165.9,824.2 1165.4,826.3 1163.1,836.5 C1160.8,846.7 1155.4,871 1153.2,881.5 C1151,892.1 1149.5,896.5 1150.1,899.8 C1150.7,903 1154.9,904 1156.8,901.2Z" fill="#f3c9c3"/>
<path d="M1159.2,905.2 C1161.5,904.4 1162.6,901.6 1166.5,896.1 C1170.3,890.5 1178.9,877.5 1182.5,872 C1186.1,866.5 1186.8,865.3 1188,863.1 C1189.2,860.9 1189.5,859.9 1189.7,858.7 C1189.9,857.5 1189.5,856.6 1189.2,855.9 C1188.9,855.3 1188.5,855.1 1188,854.8 C1187.6,854.5 1187.3,854.2 1186.5,854.2 C1185.8,854.2 1184.8,854.1 1183.8,854.8 C1182.8,855.4 1182,856.1 1180.4,858.1 C1178.8,860 1178,861.1 1174.3,866.5 C1170.6,871.9 1161.8,884.9 1158.2,890.6 C1154.6,896.3 1152.5,898.3 1152.6,900.8 C1152.8,903.2 1156.9,905.9 1159.2,905.2Z" fill="#f3c9c3"/>
<path d="M1155.7,900.9 C1157.1,899.4 1156.9,896.9 1157.7,891.2 C1158.6,885.4 1160.2,872.1 1160.8,866.5 C1161.5,860.9 1161.5,859.7 1161.6,857.5 C1161.7,855.4 1161.5,854.5 1161.2,853.5 C1160.9,852.5 1160.2,851.9 1159.7,851.5 C1159.3,851.1 1158.9,851.2 1158.4,851.1 C1157.9,851.1 1157.5,850.9 1157,851.2 C1156.4,851.5 1155.6,851.8 1155.1,852.7 C1154.5,853.6 1154.2,854.4 1153.7,856.5 C1153.2,858.7 1153,859.8 1152.3,865.4 C1151.5,871 1149.7,884.3 1149.2,890.1 C1148.6,895.9 1147.7,898.3 1148.8,900.1 C1149.9,901.9 1154.2,902.4 1155.7,900.9Z" fill="#f3c9c3"/></g>
<g filter="url(#chalk)"><path d="M1076.3,906 C1076.6,903.7 1079.8,895.2 1081.9,891.9 C1083.9,888.5 1091.3,879.6 1094.2,877 C1097.1,874.4 1104,870.2 1106.5,869.6 C1109.1,869.1 1114.4,870.4 1116.4,872.1 C1118.4,873.8 1122.5,881.1 1123.8,884.4 C1125.2,887.8 1127.2,897.2 1127.8,900.5 C1128.4,903.8 1131.5,911.4 1128.8,912.8 C1126,914.3 1109.8,913.2 1104.1,913.1 C1098.3,913 1082.6,912.7 1079.4,911.9 C1076.1,911 1076,908.4 1076.3,906Z" fill="#204a56"/>
<path d="M1068.6,954.1 C1069.4,951.5 1075.1,937.6 1078.5,934.3 C1082,931 1093.7,926.4 1098.3,925.7 C1102.9,925 1114,926.3 1118,928.1 C1122.1,930 1130,935.7 1132.8,941.7 C1135.7,947.8 1141.6,975 1142.2,980 C1142.8,985 1141.8,984.3 1137.8,984.9 C1133.8,985.6 1112,987.3 1108.1,985.4 C1104.3,983.6 1106.7,972.1 1104.4,968.9 C1102.1,965.7 1092.1,959.2 1088.4,957.8 C1084.7,956.3 1074.7,957 1072.3,956.5 C1070,956.1 1067.9,956.7 1068.6,954.1Z" fill="#204a56"/>
<path d="M1142.7,958.3 C1142.1,955.4 1150.4,941.8 1152.6,938 C1154.8,934.3 1159.2,927.3 1161.2,926.2 C1163.3,925 1167.9,926.2 1169.9,928.1 C1171.9,930.1 1176.8,940 1178.5,943 C1180.2,945.9 1184.8,951 1184.7,953.3 C1184.5,955.7 1180.5,962.1 1177.3,963.2 C1174.1,964.3 1161.6,963.3 1157.5,962.7 C1153.5,962.1 1143.3,961.2 1142.7,958.3Z" fill="#204a56"/></g>
<g filter="url(#pencil)"><path d="M1088.4,928.1 L1057.5,870.1" fill="none" stroke="#3a9793" stroke-width="2.2" stroke-linecap="round" stroke-linejoin="round"/>
<path d="M1088.4,928.1 L1063.7,883.7" fill="none" stroke="#3a9793" stroke-width="2.2" stroke-linecap="round" stroke-linejoin="round"/>
<path d="M1088.4,928.1 L1071.1,896" fill="none" stroke="#3a9793" stroke-width="2.2" stroke-linecap="round" stroke-linejoin="round"/>
<path d="M1088.4,928.1 L1078.5,903.5" fill="none" stroke="#3a9793" stroke-width="2.2" stroke-linecap="round" stroke-linejoin="round"/>
<path d="M1088.4,928.1 L1062.5,918.3" fill="none" stroke="#3a9793" stroke-width="2.2" stroke-linecap="round" stroke-linejoin="round"/>
<path d="M1088.4,928.1 L1068.6,925.7" fill="none" stroke="#3a9793" stroke-width="2.2" stroke-linecap="round" stroke-linejoin="round"/>
<path d="M1118,928.1 L1098.3,903.5" fill="none" stroke="#3a9793" stroke-width="2" stroke-linecap="round" stroke-linejoin="round"/>
<path d="M1118,928.1 L1105.7,896" fill="none" stroke="#3a9793" stroke-width="2" stroke-linecap="round" stroke-linejoin="round"/>
<path d="M1118,928.1 L1113.1,888.6" fill="none" stroke="#3a9793" stroke-width="2" stroke-linecap="round" stroke-linejoin="round"/>
<path d="M1118,928.1 L1120.5,898.5" fill="none" stroke="#3a9793" stroke-width="2" stroke-linecap="round" stroke-linejoin="round"/>
<path d="M1118,928.1 L1127.9,886.2" fill="none" stroke="#3a9793" stroke-width="2" stroke-linecap="round" stroke-linejoin="round"/>
<path d="M1118,928.1 L1132.8,903.5" fill="none" stroke="#3a9793" stroke-width="2" stroke-linecap="round" stroke-linejoin="round"/>
<path d="M1137.8,952.8 L1147.7,908.4" fill="none" stroke="#3a9793" stroke-width="2.2" stroke-linecap="round" stroke-linejoin="round"/>
<path d="M1137.8,952.8 L1157.5,896" fill="none" stroke="#3a9793" stroke-width="2.2" stroke-linecap="round" stroke-linejoin="round"/>
<path d="M1137.8,952.8 L1164.9,891.1" fill="none" stroke="#3a9793" stroke-width="2.2" stroke-linecap="round" stroke-linejoin="round"/>
<path d="M1137.8,952.8 L1169.9,908.4" fill="none" stroke="#3a9793" stroke-width="2.2" stroke-linecap="round" stroke-linejoin="round"/>
<path d="M1137.8,952.8 L1152.6,918.3" fill="none" stroke="#3a9793" stroke-width="2.2" stroke-linecap="round" stroke-linejoin="round"/>
<path d="M1137.8,952.8 L1174.8,918.3" fill="none" stroke="#3a9793" stroke-width="2.2" stroke-linecap="round" stroke-linejoin="round"/>
<path d="M1137.8,952.8 L1132.8,918.3" fill="none" stroke="#3a9793" stroke-width="2.2" stroke-linecap="round" stroke-linejoin="round"/>
<path d="M1137.8,952.8 L1140.2,913.3" fill="none" stroke="#3a9793" stroke-width="2.2" stroke-linecap="round" stroke-linejoin="round"/>
<path d="M1182.2,933.1 L1169.9,896" fill="none" stroke="#3a9793" stroke-width="2.2" stroke-linecap="round" stroke-linejoin="round"/>
<path d="M1182.2,933.1 L1177.3,888.6" fill="none" stroke="#3a9793" stroke-width="2.2" stroke-linecap="round" stroke-linejoin="round"/>
<path d="M1182.2,933.1 L1183.5,898.5" fill="none" stroke="#3a9793" stroke-width="2.2" stroke-linecap="round" stroke-linejoin="round"/>
<path d="M1182.2,933.1 L1189.6,908.4" fill="none" stroke="#3a9793" stroke-width="2.2" stroke-linecap="round" stroke-linejoin="round"/>
<path d="M1182.2,933.1 L1193.3,918.3" fill="none" stroke="#3a9793" stroke-width="2.2" stroke-linecap="round" stroke-linejoin="round"/>
<path d="M1182.2,933.1 L1172.3,910.9" fill="none" stroke="#3a9793" stroke-width="2.2" stroke-linecap="round" stroke-linejoin="round"/>
<path d="M1116.4,940 L1094.2,901.7" fill="none" stroke="#3a9793" stroke-width="2.4" stroke-linecap="round" stroke-linejoin="round"/>
<path d="M1116.4,940 L1099.1,899.3" fill="none" stroke="#3a9793" stroke-width="2.4" stroke-linecap="round" stroke-linejoin="round"/>
<path d="M1116.4,940 L1105.3,900.5" fill="none" stroke="#3a9793" stroke-width="2.4" stroke-linecap="round" stroke-linejoin="round"/>
<path d="M1116.4,940 L1111.5,890.6" fill="none" stroke="#3a9793" stroke-width="2.4" stroke-linecap="round" stroke-linejoin="round"/>
<path d="M1116.4,940 L1118.9,895.6" fill="none" stroke="#3a9793" stroke-width="2.4" stroke-linecap="round" stroke-linejoin="round"/>
<path d="M1116.4,940 L1127.5,886.9" fill="none" stroke="#3a9793" stroke-width="2.4" stroke-linecap="round" stroke-linejoin="round"/>
<path d="M1153.5,942.5 L1160.9,900.5" fill="none" stroke="#3a9793" stroke-width="2.4" stroke-linecap="round" stroke-linejoin="round"/>
<path d="M1153.5,942.5 L1165.8,903" fill="none" stroke="#3a9793" stroke-width="2.4" stroke-linecap="round" stroke-linejoin="round"/>
<path d="M1153.5,942.5 L1170.7,894.3" fill="none" stroke="#3a9793" stroke-width="2.4" stroke-linecap="round" stroke-linejoin="round"/>
<path d="M1153.5,942.5 L1175.7,899.3" fill="none" stroke="#3a9793" stroke-width="2.4" stroke-linecap="round" stroke-linejoin="round"/>
<path d="M1153.5,942.5 L1181.9,904.2" fill="none" stroke="#3a9793" stroke-width="2.4" stroke-linecap="round" stroke-linejoin="round"/>
<path d="M1153.5,942.5 L1190.5,912.8" fill="none" stroke="#3a9793" stroke-width="2.4" stroke-linecap="round" stroke-linejoin="round"/></g>
<g filter="url(#chalk)"><path d="M1112.3,986.9 C1112.6,991.4 1111.1,997 1108.6,1000.7 C1106.1,1004.4 1101.5,1007.2 1097.6,1009.2 C1093.6,1011.2 1089.1,1012.5 1084.7,1012.7 C1080.3,1012.9 1074.9,1012.7 1071,1010.6 C1067.1,1008.6 1063.4,1004.5 1061.2,1000.5 C1058.9,996.5 1057.5,991.4 1057.7,986.9 C1057.8,982.5 1059.7,977.7 1062,973.8 C1064.2,969.9 1067.5,965.9 1071.2,963.6 C1075,961.3 1080.2,960 1084.7,960 C1089.2,960 1094.4,961.3 1098.1,963.7 C1101.9,966 1104.8,970.1 1107.2,973.9 C1109.5,977.8 1112.1,982.5 1112.3,986.9Z" fill="#9ca998"/>
<path d="M1208.7,1002.7 C1208.7,1008 1207.8,1014.1 1205.2,1018.6 C1202.7,1023.1 1198,1027.1 1193.4,1029.8 C1188.8,1032.5 1183,1034.5 1177.8,1034.6 C1172.5,1034.7 1166.2,1033.1 1161.8,1030.4 C1157.4,1027.6 1153.8,1022.6 1151.4,1018 C1149,1013.4 1147.7,1008 1147.4,1002.7 C1147.1,997.5 1147.2,991 1149.7,986.5 C1152.1,982 1157.6,978.3 1162.3,975.9 C1167,973.4 1172.5,972.1 1177.8,971.8 C1183.1,971.5 1189.7,971.7 1194.2,974.3 C1198.8,976.8 1202.7,982.2 1205.1,987 C1207.5,991.7 1208.7,997.4 1208.7,1002.7Z" fill="#9ca998"/>
<path d="M1203.2,938 C1205.2,933 1209.3,923.6 1214.3,919.5 C1219.3,915.4 1229.1,911.6 1236.5,910.9 C1244,910.1 1256.7,911.6 1263.7,914.6 C1270.7,917.5 1279.4,924.9 1283.5,930.6 C1287.5,936.4 1291.2,946.2 1290.9,952.8 C1290.5,959.5 1286.2,970.2 1281,975.1 C1275.8,979.9 1264.1,983.6 1256.3,984.9 C1248.5,986.2 1236.2,985.9 1229.1,983.7 C1222.1,981.5 1213.6,974.8 1209.4,970.1 C1205.1,965.5 1201.7,957.7 1200.7,952.8 C1199.8,948 1201.2,943 1203.2,938Z" fill="#9ca998"/></g>
<path d="M1076,1002.2 L1088.4,977.5" fill="none" stroke="#c5cdc0" stroke-width="1.2" stroke-linecap="round" stroke-linejoin="round"/>
<path d="M1082.2,1003.5 L1094.6,980" fill="none" stroke="#c5cdc0" stroke-width="1.2" stroke-linecap="round" stroke-linejoin="round"/>
<path d="M1088.4,999.8 L1098.3,982.5" fill="none" stroke="#c5cdc0" stroke-width="1.2" stroke-linecap="round" stroke-linejoin="round"/>
<path d="M1192.1,1017 L1198.3,1010.9" fill="none" stroke="#c5cdc0" stroke-width="1.2" stroke-linecap="round" stroke-linejoin="round"/>
<path d="M1223,938 L1226.7,933.1" fill="none" stroke="#c5cdc0" stroke-width="1.2" stroke-linecap="round" stroke-linejoin="round"/>
<g filter="url(#pencil)"><path d="M1267,1038.1 C1266.3,1032.9 1263.1,1017.3 1262.8,1006.8 C1262.4,996.3 1264.5,980.5 1264.8,975.2" fill="none" stroke="#f0cac1" stroke-width="5" stroke-linecap="round" stroke-linejoin="round"/>
<path d="M1267,1038.1 C1266,1034.7 1262.2,1024.5 1260.9,1017.4 C1259.5,1010.4 1259.2,999.5 1258.9,995.9" fill="none" stroke="#f0cac1" stroke-width="4.4" stroke-linecap="round" stroke-linejoin="round"/>
<path d="M1267,1038.1 C1266.9,1033.2 1265.6,1018.2 1266.3,1008.3 C1267,998.4 1270.6,983.8 1271.5,978.9" fill="none" stroke="#f0cac1" stroke-width="5" stroke-linecap="round" stroke-linejoin="round"/>
<path d="M1267,1038.1 C1267.7,1032.6 1268.7,1015.7 1271.2,1004.8 C1273.7,994 1280.1,978.3 1281.9,973" fill="none" stroke="#f0cac1" stroke-width="5" stroke-linecap="round" stroke-linejoin="round"/>
<path d="M1267,1038.1 C1268.5,1032.4 1271.6,1014.6 1275.5,1003.4 C1279.5,992.3 1288.2,976.5 1290.7,971.1" fill="none" stroke="#f0cac1" stroke-width="4.8" stroke-linecap="round" stroke-linejoin="round"/>
<path d="M1267,1038.1 C1269.6,1032.5 1276.2,1014.9 1282.4,1004.3 C1288.5,993.6 1300.5,979.1 1304.1,974.1" fill="none" stroke="#f0cac1" stroke-width="5" stroke-linecap="round" stroke-linejoin="round"/>
<path d="M1267,1038.1 C1270.5,1033.9 1280,1020.5 1287.7,1012.9 C1295.4,1005.2 1308.8,995.7 1313,992.2" fill="none" stroke="#f0cac1" stroke-width="4.8" stroke-linecap="round" stroke-linejoin="round"/>
<path d="M1267,1038.1 C1271.5,1034.2 1284.2,1021.3 1293.8,1014.3 C1303.5,1007.4 1319.7,999.3 1324.8,996.3" fill="none" stroke="#f0cac1" stroke-width="5" stroke-linecap="round" stroke-linejoin="round"/>
<path d="M1267,1038.1 C1272.2,1034.6 1287.2,1022.9 1298.2,1016.9 C1309.2,1010.9 1327.2,1004.7 1333,1002.2" fill="none" stroke="#f0cac1" stroke-width="5" stroke-linecap="round" stroke-linejoin="round"/>
<path d="M1267,1038.1 C1272.4,1036.1 1288.4,1028.8 1299.5,1025.7 C1310.6,1022.7 1328,1021 1333.7,1020" fill="none" stroke="#f0cac1" stroke-width="5" stroke-linecap="round" stroke-linejoin="round"/>
<path d="M1267,1038.1 C1271.9,1037.1 1286.5,1033 1296.3,1031.9 C1306.2,1030.7 1321.3,1031.5 1326.3,1031.5" fill="none" stroke="#f0cac1" stroke-width="5" stroke-linecap="round" stroke-linejoin="round"/>
<path d="M1267,1038.1 C1269,1033.1 1274.1,1017.7 1279,1008.1 C1283.9,998.6 1293.7,985.6 1296.7,981.1" fill="none" stroke="#f0cac1" stroke-width="4.6" stroke-linecap="round" stroke-linejoin="round"/>
<path d="M1267,1038.1 C1271.1,1035.3 1282.9,1025.9 1291.5,1021.1 C1300.2,1016.3 1314.3,1011.2 1318.9,1009.3" fill="none" stroke="#f0cac1" stroke-width="4.8" stroke-linecap="round" stroke-linejoin="round"/>
<path d="M1333.7,1020 C1334.7,1020.8 1338,1023.4 1339.6,1024.8 C1341.2,1026.2 1342.5,1027.3 1343.3,1028.5 C1344.2,1029.7 1344.6,1031.3 1344.8,1031.9" fill="none" stroke="#f0cac1" stroke-width="3.4" stroke-linecap="round" stroke-linejoin="round"/>
<path d="M1264.8,1042.6 C1263.1,1038.9 1263.1,1022.1 1264.8,1016.7 C1266.5,1011.2 1273.2,1003.2 1277.4,1001.9 C1281.7,1000.5 1291.1,1003.7 1296.7,1006.3 C1302.2,1008.9 1314.9,1017.7 1318.9,1021.1 C1322.8,1024.6 1329.3,1029.7 1326.3,1032.2 C1323.3,1034.8 1303.2,1038.8 1296.7,1040.4 C1290.1,1042 1281.7,1043.8 1277.4,1044.1 C1273.2,1044.4 1266.5,1046.2 1264.8,1042.6Z" fill="#f0cac1"/>
<path d="M1253.7,984.8 C1253.8,987.7 1253,994.2 1254.4,1001.9 C1255.9,1009.5 1261.2,1025.9 1262.6,1030.7" fill="none" stroke="#c8622d" stroke-width="1.5" stroke-linecap="round" stroke-linejoin="round"/>
<path d="M1261.1,980.4 C1261.4,985.2 1261.9,999.8 1262.6,1009.3 C1263.3,1018.8 1265.1,1032.7 1265.6,1037.4" fill="none" stroke="#c8622d" stroke-width="1.3" stroke-linecap="round" stroke-linejoin="round"/>
<path d="M1270,975.2 C1269.8,977.4 1269.1,984.1 1268.9,988.5 C1268.6,993 1268.6,999.6 1268.5,1001.9" fill="none" stroke="#c8622d" stroke-width="1.6" stroke-linecap="round" stroke-linejoin="round"/>
<path d="M1295.2,968.5 C1294.2,971.6 1292.7,977.8 1289.3,987 C1285.8,996.3 1276.9,1017.9 1274.4,1024.1" fill="none" stroke="#c8622d" stroke-width="1.4" stroke-linecap="round" stroke-linejoin="round"/>
<path d="M1313.7,983.3 C1310.9,987.7 1303.7,1000.6 1296.7,1009.3 C1289.6,1017.9 1275.7,1030.9 1271.5,1035.2" fill="none" stroke="#c8622d" stroke-width="1.5" stroke-linecap="round" stroke-linejoin="round"/>
<path d="M1321.9,985.6 C1321,987 1318.4,991.7 1316.7,994.4 C1314.9,997.2 1312.3,1000.6 1311.5,1001.9" fill="none" stroke="#c8622d" stroke-width="1.5" stroke-linecap="round" stroke-linejoin="round"/>
<path d="M1327.8,995.9 C1326.4,997.3 1322.3,1001.6 1319.6,1004.1 C1316.9,1006.5 1312.8,1009.6 1311.5,1010.7" fill="none" stroke="#c8622d" stroke-width="2" stroke-linecap="round" stroke-linejoin="round"/>
<path d="M1339.6,998.1 C1337.2,1001 1334,1009.4 1324.8,1015.2 C1315.7,1021 1291.5,1030 1284.8,1033" fill="none" stroke="#c8622d" stroke-width="1.4" stroke-linecap="round" stroke-linejoin="round"/>
<path d="M1344.8,1011.5 C1344,1012.2 1341.4,1014.6 1339.6,1015.9 C1337.9,1017.3 1335.3,1019 1334.4,1019.6" fill="none" stroke="#c8622d" stroke-width="1.5" stroke-linecap="round" stroke-linejoin="round"/>
<path d="M1328.5,1031.5 C1326.2,1032.2 1319.3,1034.8 1314.4,1035.9 C1309.6,1037 1302.1,1037.8 1299.6,1038.1" fill="none" stroke="#c8622d" stroke-width="1.5" stroke-linecap="round" stroke-linejoin="round"/>
<path d="M1275.9,974.4 L1274.4,977.4" fill="none" stroke="#c8622d" stroke-width="1.4" stroke-linecap="round" stroke-linejoin="round"/>
<path d="M1281.9,969.3 L1280.4,974.4" fill="none" stroke="#c8622d" stroke-width="1.4" stroke-linecap="round" stroke-linejoin="round"/>
<path d="M1288.5,966.3 L1286.3,972.2" fill="none" stroke="#c8622d" stroke-width="1.4" stroke-linecap="round" stroke-linejoin="round"/></g>
<g filter="url(#chalk)"><path d="M1219.3,602.7 C1219.9,598.4 1223,591.8 1225.4,590.4 C1227.9,588.9 1232.2,591.6 1234.1,594.1 C1235.9,596.5 1237.2,601.7 1236.5,605.2 C1235.9,608.7 1232.8,613.2 1230.4,615.1 C1227.9,616.9 1223.6,618.4 1221.7,616.3 C1219.9,614.2 1218.6,607 1219.3,602.7Z" fill="#e0a524"/></g>
<circle cx="1262.5" cy="912.8" r="2.2" fill="#e0a524"/>
<g stroke="#a9dad6" stroke-width="1.1" stroke-linecap="round"><line x1="963.6" y1="723.9" x2="962.2" y2="729.4"/><line x1="972.1" y1="724.1" x2="970.7" y2="729.4"/><line x1="980.8" y1="722.6" x2="979.4" y2="729.4"/><line x1="987.7" y1="724.7" x2="986.3" y2="729.4"/><line x1="996.4" y1="723" x2="995" y2="729.4"/><line x1="966.6" y1="734.3" x2="965.2" y2="740"/><line x1="975.2" y1="734.3" x2="973.8" y2="740"/><line x1="983.9" y1="733.4" x2="982.4" y2="740"/><line x1="992.9" y1="735.4" x2="991.5" y2="740"/><line x1="958.4" y1="745.4" x2="957" y2="750.5"/><line x1="964.8" y1="745.6" x2="963.4" y2="750.5"/><line x1="973.8" y1="744.3" x2="972.4" y2="750.5"/><line x1="980.5" y1="745.9" x2="979.1" y2="750.5"/><line x1="989.3" y1="745.5" x2="987.9" y2="750.5"/><line x1="959.4" y1="756.6" x2="958" y2="761.1"/><line x1="967.3" y1="756.3" x2="965.9" y2="761.1"/><line x1="976" y1="756.7" x2="974.6" y2="761.1"/><line x1="985.4" y1="754.3" x2="984" y2="761.1"/><line x1="992.4" y1="754.7" x2="991" y2="761.1"/><line x1="951.4" y1="766.4" x2="950" y2="771.6"/><line x1="960.4" y1="766" x2="958.9" y2="771.6"/><line x1="969.8" y1="765.6" x2="968.3" y2="771.6"/><line x1="979.4" y1="766.3" x2="978" y2="771.6"/><line x1="989.3" y1="766.5" x2="987.9" y2="771.6"/><line x1="953.3" y1="778" x2="951.9" y2="782.2"/><line x1="961.1" y1="775.6" x2="959.7" y2="782.2"/><line x1="969.8" y1="777.9" x2="968.4" y2="782.2"/><line x1="978.1" y1="776.8" x2="976.7" y2="782.2"/><line x1="985.9" y1="775.8" x2="984.5" y2="782.2"/><line x1="994.4" y1="776.8" x2="993" y2="782.2"/><line x1="944.3" y1="788.1" x2="942.9" y2="792.8"/><line x1="955.1" y1="786" x2="953.7" y2="792.8"/><line x1="963.5" y1="786.9" x2="962.1" y2="792.8"/><line x1="970.9" y1="786.5" x2="969.5" y2="792.8"/><line x1="981" y1="788.2" x2="979.6" y2="792.8"/><line x1="988.3" y1="787.5" x2="986.9" y2="792.8"/><line x1="997.1" y1="787.7" x2="995.7" y2="792.8"/><line x1="945.7" y1="798.8" x2="944.3" y2="803.3"/><line x1="955.1" y1="797.7" x2="953.7" y2="803.3"/><line x1="963.2" y1="797.1" x2="961.8" y2="803.3"/><line x1="969.3" y1="798" x2="967.9" y2="803.3"/><line x1="977.2" y1="796.8" x2="975.8" y2="803.3"/><line x1="986" y1="798" x2="984.6" y2="803.3"/><line x1="993.5" y1="796.4" x2="992.1" y2="803.3"/><line x1="938.5" y1="809.5" x2="937.1" y2="813.9"/><line x1="948.3" y1="807.9" x2="946.9" y2="813.9"/><line x1="955.9" y1="808.3" x2="954.4" y2="813.9"/><line x1="964.7" y1="808.5" x2="963.3" y2="813.9"/><line x1="973.1" y1="808.6" x2="971.7" y2="813.9"/><line x1="982.4" y1="808.3" x2="981" y2="813.9"/><line x1="989.8" y1="808.9" x2="988.4" y2="813.9"/><line x1="997.9" y1="807.7" x2="996.5" y2="813.9"/><line x1="940.7" y1="818.9" x2="939.3" y2="824.4"/><line x1="947.7" y1="817.4" x2="946.3" y2="824.4"/><line x1="955.2" y1="819" x2="953.8" y2="824.4"/><line x1="962.3" y1="819.1" x2="960.9" y2="824.4"/><line x1="971.4" y1="817.6" x2="970" y2="824.4"/><line x1="979.3" y1="818.7" x2="977.9" y2="824.4"/><line x1="987.2" y1="818.4" x2="985.8" y2="824.4"/><line x1="995.1" y1="819.5" x2="993.7" y2="824.4"/><line x1="931.7" y1="829.8" x2="930.3" y2="835"/><line x1="941.9" y1="828.7" x2="940.5" y2="835"/><line x1="949.1" y1="829.6" x2="947.7" y2="835"/><line x1="957.1" y1="829" x2="955.7" y2="835"/><line x1="965.3" y1="829" x2="963.9" y2="835"/><line x1="974.2" y1="828.8" x2="972.8" y2="835"/><line x1="982" y1="830.1" x2="980.6" y2="835"/><line x1="989.6" y1="829.5" x2="988.1" y2="835"/><line x1="933.4" y1="839.1" x2="932" y2="845.5"/><line x1="943.2" y1="839.2" x2="941.7" y2="845.5"/><line x1="950.5" y1="839.7" x2="949.1" y2="845.5"/><line x1="960.3" y1="838.8" x2="958.9" y2="845.5"/><line x1="968.2" y1="839.4" x2="966.8" y2="845.5"/><line x1="978" y1="839.7" x2="976.6" y2="845.5"/><line x1="986.7" y1="839" x2="985.3" y2="845.5"/><line x1="994.3" y1="840.3" x2="992.9" y2="845.5"/><line x1="926.2" y1="849.7" x2="924.8" y2="856.1"/><line x1="933.6" y1="850.5" x2="932.2" y2="856.1"/><line x1="941.9" y1="851.3" x2="940.5" y2="856.1"/><line x1="951.3" y1="849.6" x2="949.9" y2="856.1"/><line x1="958.2" y1="851.3" x2="956.8" y2="856.1"/><line x1="967.1" y1="851.3" x2="965.7" y2="856.1"/><line x1="974.6" y1="849.4" x2="973.2" y2="856.1"/><line x1="982.6" y1="851.3" x2="981.2" y2="856.1"/><line x1="990.6" y1="850" x2="989.2" y2="856.1"/><line x1="999" y1="850.2" x2="997.6" y2="856.1"/><line x1="927.2" y1="862.2" x2="925.8" y2="866.6"/><line x1="935.1" y1="859.6" x2="933.7" y2="866.6"/><line x1="945.3" y1="862.1" x2="943.9" y2="866.6"/><line x1="953.8" y1="860.8" x2="952.4" y2="866.6"/><line x1="962.2" y1="862.2" x2="960.8" y2="866.6"/><line x1="969.2" y1="861.7" x2="967.8" y2="866.6"/><line x1="978.9" y1="861.5" x2="977.5" y2="866.6"/><line x1="986.7" y1="860.4" x2="985.3" y2="866.6"/><line x1="994.8" y1="860.3" x2="993.4" y2="866.6"/><line x1="920.2" y1="871" x2="918.8" y2="877.2"/><line x1="928.6" y1="870.3" x2="927.2" y2="877.2"/><line x1="936.8" y1="872.1" x2="935.4" y2="877.2"/><line x1="944.8" y1="872.7" x2="943.4" y2="877.2"/><line x1="952.7" y1="871.8" x2="951.3" y2="877.2"/><line x1="958.8" y1="872.3" x2="957.4" y2="877.2"/><line x1="967.1" y1="871" x2="965.7" y2="877.2"/><line x1="976.1" y1="871.6" x2="974.7" y2="877.2"/><line x1="983.5" y1="872.8" x2="982.1" y2="877.2"/><line x1="991.9" y1="871.1" x2="990.5" y2="877.2"/><line x1="999.1" y1="872.6" x2="997.7" y2="877.2"/></g>
<g filter="url(#chalk)"><defs><radialGradient id="cang" cx="0.55" cy="0.55" r="0.6"><stop offset="0" stop-color="#d3ebe6"/><stop offset="0.55" stop-color="#b4d8d4"/><stop offset="1" stop-color="#a2ccc9"/></radialGradient></defs>
<path d="M1022.2,625.6 C1020,624.3 1012.5,621.7 1008.9,617.8 C1005.3,613.9 1002.2,607.8 1000.6,602.2 C998.9,596.7 998.3,590.2 999.1,584.4 C999.9,578.7 1002.3,572.5 1005.6,567.8 C1008.9,563.1 1013.3,558.9 1018.9,556.1 C1024.4,553.3 1032.2,551.5 1038.9,550.9 C1045.6,550.3 1053.3,550.9 1058.9,552.4 C1064.4,554 1068.3,556.7 1072.2,560.2 C1076.1,563.7 1079.8,568.7 1082.2,573.3 C1084.7,577.9 1085.9,583.7 1086.9,587.8 C1087.9,591.9 1087.8,596.1 1088,597.8" fill="none" stroke="#a6cecb" stroke-width="6.4" stroke-linecap="round" stroke-linejoin="round"/>
<path d="M1027.8,645.6 C1027,647.6 1024.8,653.5 1023.3,657.8 C1021.9,662 1019.6,668.9 1018.9,671.1" fill="none" stroke="#9fc3c4" stroke-width="3" stroke-linecap="round" stroke-linejoin="round"/>
<path d="M1083.3,656.7 C1080.4,657 1054.4,665.3 1050,666.7 C1045.6,668 1020.9,675.2 1016.7,676.4 C1012.4,677.7 988,684.1 986.7,685.3 C985.3,686.6 993.9,695.6 996.7,695.6 C999.4,695.5 1023.5,686.2 1027.8,684.7 C1032.1,683.1 1056.7,674.3 1061.1,672.8 C1065.5,671.2 1091.9,662.4 1093.3,661.3 C1094.8,660.3 1086.2,656.3 1083.3,656.7Z" fill="#a6cecb"/>
<path d="M962,698 C962.4,696.1 972,692.4 974.4,691.1 C976.9,689.8 984.7,685.5 986.7,685.3 C988.6,685.2 992.8,688.4 993.9,689.4 C994.9,690.5 996.8,693.6 997.2,695.6 C997.6,697.5 999.4,707.4 998,708.9 C996.6,710.4 986.1,710.1 983.3,710.2 C980.5,710.3 972.1,711.2 970,710 C967.9,708.8 961.6,699.9 962,698Z" fill="#a4cdca"/>
<path d="M1037.8,579.1 C1039.2,577.7 1038.8,582.2 1042.2,583.6 C1045.7,584.9 1065.9,590.4 1072.2,592.2 C1078.5,594 1101.5,600.2 1105,601.7 C1108.5,603.1 1106.8,604.8 1106.9,606.7 C1106.9,608.5 1106.2,616.7 1105.6,620 C1104.9,623.3 1101.2,636 1100,640 C1098.8,644 1094.6,658.1 1093.3,660.2 C1092.1,662.4 1091.6,662.4 1087.8,661.3 C1084,660.3 1062,651.7 1055.6,649.4 C1049.1,647.1 1027,640.1 1023.6,638.3 C1020.1,636.6 1021.4,634.3 1021.1,632.2 C1020.9,630.2 1020.4,621.2 1021.1,617.8 C1021.8,614.3 1026.1,601.6 1027.8,597.8 C1029.4,593.9 1036.3,580.5 1037.8,579.1Z" fill="url(#cang)"/>
<path d="M1037.8,580 C1036.5,583.7 1032.3,592.8 1030,602.2 C1027.7,611.7 1024.9,630.9 1023.9,636.7" fill="none" stroke="#8db5b6" stroke-width="1.1" stroke-linecap="round" stroke-linejoin="round"/>
<path d="M1037.8,580 C1038.5,583 1042,591.9 1042.2,597.8 C1042.4,603.7 1041.7,609.3 1038.9,615.6 C1036.1,621.9 1027.8,632.2 1025.6,635.6" fill="none" stroke="#96bcbc" stroke-width="1" stroke-linecap="round" stroke-linejoin="round"/>
<path d="M1038.9,584.4 C1044.4,585.9 1061.1,590.4 1072.2,593.3 C1083.3,596.3 1100,600.7 1105.6,602.2" fill="none" stroke="#98bfbe" stroke-width="0.9" stroke-linecap="round" stroke-linejoin="round"/>
<path d="M1023.6,638.3 C1028.9,640.3 1043.9,646.3 1055.6,650 C1067.2,653.7 1087,658.8 1093.3,660.6" fill="none" stroke="#98bfbe" stroke-width="0.9" stroke-linecap="round" stroke-linejoin="round"/></g>
<g filter="url(#pencil)"><path d="M1010.6,683.9 C1009.6,683.7 1005.2,683.3 1003.3,682.4 C1001.5,681.6 997.7,679 996.7,677.8 C995.6,676.6 994.9,674.2 995.3,673.3 C995.8,672.4 998.3,670.7 1000,671.1 C1001.7,671.6 1006.4,675 1007.8,676.7 C1009.2,678.4 1010.2,682.9 1010.6,683.9" fill="none" stroke="#15404c" stroke-width="3.2" stroke-linecap="round" stroke-linejoin="round"/>
<path d="M1010.6,683.9 C1010.8,682.5 1011.4,675.8 1012.2,673.3 C1013,670.9 1015.7,665.9 1016.7,665.6 C1017.6,665.3 1019.3,669.2 1019.1,671.1 C1019,673 1016.6,678.2 1015.6,680 C1014.5,681.8 1011.7,683.9 1011.1,684.4" fill="none" stroke="#15404c" stroke-width="3.2" stroke-linecap="round" stroke-linejoin="round"/></g>
<circle cx="1015.2" cy="701.6" r="1.4" fill="#15404c"/>
<circle cx="1015.2" cy="711.5" r="1.6" fill="#15404c"/>
<circle cx="1014.8" cy="723.8" r="1.5" fill="#15404c"/>
<circle cx="1014.5" cy="737.9" r="1.6" fill="#15404c"/>
<circle cx="1013.8" cy="751.9" r="1.5" fill="#15404c"/>
<circle cx="1013.4" cy="767.8" r="1.6" fill="#15404c"/>
<circle cx="1012.7" cy="781.9" r="1.5" fill="#15404c"/>
<circle cx="1012.4" cy="797.7" r="1.5" fill="#15404c"/>
<circle cx="1011.7" cy="815.3" r="1.7" fill="#15404c"/>
<circle cx="1011" cy="834.6" r="1.6" fill="#15404c"/>
<circle cx="1009.9" cy="854" r="1.7" fill="#15404c"/>
<circle cx="1008.1" cy="874" r="1.8" fill="#15404c"/>
<circle cx="1006.7" cy="894.4" r="2" fill="#15404c"/>
<circle cx="1004.6" cy="912" r="2" fill="#15404c"/>
<circle cx="1003.2" cy="929.6" r="1.8" fill="#15404c"/>
<circle cx="1001.5" cy="947.2" r="1.8" fill="#15404c"/>
<circle cx="999.4" cy="959.5" r="1.6" fill="#15404c"/>
<circle cx="997.6" cy="970.1" r="1.4" fill="#15404c"/>
<g filter="url(#pencil)"><path d="M1141.5,565.7 C1148,607 1165.7,730.8 1180.8,813.4 C1195.8,895.9 1223.5,1019.7 1232,1061" fill="none" stroke="#1d3f49" stroke-width="2.1" stroke-linecap="round" stroke-linejoin="round"/>
<path d="M1162.5,560.7 C1169.7,601.9 1189.7,725.3 1205.8,807.6 C1221.8,889.9 1250.1,1013.4 1259,1054.5" fill="none" stroke="#1d3f49" stroke-width="2.1" stroke-linecap="round" stroke-linejoin="round"/>
<path d="M1146.1,598.9 L1166.6,586.9" fill="none" stroke="#1d3f49" stroke-width="1.7" stroke-linecap="round" stroke-linejoin="round"/>
<path d="M1148,612.3 L1168.7,600.2" fill="none" stroke="#1d3f49" stroke-width="1.7" stroke-linecap="round" stroke-linejoin="round"/>
<path d="M1149.9,625.7 L1170.9,613.6" fill="none" stroke="#1d3f49" stroke-width="1.7" stroke-linecap="round" stroke-linejoin="round"/>
<path d="M1151.9,639.2 L1173.1,627.1" fill="none" stroke="#1d3f49" stroke-width="1.7" stroke-linecap="round" stroke-linejoin="round"/>
<path d="M1153.9,652.7 L1175.4,640.6" fill="none" stroke="#1d3f49" stroke-width="1.7" stroke-linecap="round" stroke-linejoin="round"/>
<path d="M1156,666.3 L1177.7,654.1" fill="none" stroke="#1d3f49" stroke-width="1.7" stroke-linecap="round" stroke-linejoin="round"/>
<path d="M1158.1,680 L1180,667.7" fill="none" stroke="#1d3f49" stroke-width="1.7" stroke-linecap="round" stroke-linejoin="round"/>
<path d="M1160.3,693.7 L1182.4,681.4" fill="none" stroke="#1d3f49" stroke-width="1.7" stroke-linecap="round" stroke-linejoin="round"/>
<path d="M1162.5,707.5 L1184.8,695.1" fill="none" stroke="#1d3f49" stroke-width="1.7" stroke-linecap="round" stroke-linejoin="round"/>
<path d="M1164.8,721.3 L1187.3,708.9" fill="none" stroke="#1d3f49" stroke-width="1.7" stroke-linecap="round" stroke-linejoin="round"/>
<path d="M1167.1,735.1 L1189.8,722.7" fill="none" stroke="#1d3f49" stroke-width="1.7" stroke-linecap="round" stroke-linejoin="round"/>
<path d="M1169.4,749.1 L1192.3,736.6" fill="none" stroke="#1d3f49" stroke-width="1.7" stroke-linecap="round" stroke-linejoin="round"/>
<path d="M1171.8,763.1 L1194.9,750.6" fill="none" stroke="#1d3f49" stroke-width="1.7" stroke-linecap="round" stroke-linejoin="round"/>
<path d="M1174.3,777.1 L1197.5,764.5" fill="none" stroke="#1d3f49" stroke-width="1.7" stroke-linecap="round" stroke-linejoin="round"/>
<path d="M1176.8,791.2 L1200.2,778.6" fill="none" stroke="#1d3f49" stroke-width="1.7" stroke-linecap="round" stroke-linejoin="round"/>
<path d="M1179.3,805.3 L1202.9,792.7" fill="none" stroke="#1d3f49" stroke-width="2.1" stroke-linecap="round" stroke-linejoin="round"/>
<path d="M1181.9,819.6 L1205.6,806.9" fill="none" stroke="#1d3f49" stroke-width="2.1" stroke-linecap="round" stroke-linejoin="round"/>
<path d="M1184.5,833.8 L1208.4,821.1" fill="none" stroke="#1d3f49" stroke-width="2.1" stroke-linecap="round" stroke-linejoin="round"/>
<path d="M1187.2,848.1 L1211.2,835.4" fill="none" stroke="#1d3f49" stroke-width="2.1" stroke-linecap="round" stroke-linejoin="round"/>
<path d="M1190,862.5 L1214.1,849.7" fill="none" stroke="#1d3f49" stroke-width="2.1" stroke-linecap="round" stroke-linejoin="round"/>
<path d="M1192.8,877 L1217.1,864.1" fill="none" stroke="#1d3f49" stroke-width="2.1" stroke-linecap="round" stroke-linejoin="round"/>
<path d="M1195.6,891.5 L1220,878.6" fill="none" stroke="#1d3f49" stroke-width="2.1" stroke-linecap="round" stroke-linejoin="round"/>
<path d="M1198.5,906 L1223.1,893.1" fill="none" stroke="#1d3f49" stroke-width="2.1" stroke-linecap="round" stroke-linejoin="round"/>
<path d="M1201.5,920.6 L1226.1,907.6" fill="none" stroke="#1d3f49" stroke-width="2.1" stroke-linecap="round" stroke-linejoin="round"/>
<path d="M1204.5,935.3 L1229.2,922.3" fill="none" stroke="#1d3f49" stroke-width="2.1" stroke-linecap="round" stroke-linejoin="round"/>
<path d="M1207.6,950 L1232.4,936.9" fill="none" stroke="#1d3f49" stroke-width="2.1" stroke-linecap="round" stroke-linejoin="round"/>
<path d="M1210.7,964.8 L1235.6,951.7" fill="none" stroke="#1d3f49" stroke-width="2.1" stroke-linecap="round" stroke-linejoin="round"/>
<path d="M1213.8,979.7 L1238.9,966.5" fill="none" stroke="#1d3f49" stroke-width="2.1" stroke-linecap="round" stroke-linejoin="round"/>
<path d="M1217.1,994.6 L1242.2,981.4" fill="none" stroke="#1d3f49" stroke-width="2.1" stroke-linecap="round" stroke-linejoin="round"/>
<path d="M1220.4,1009.5 L1245.5,996.3" fill="none" stroke="#1d3f49" stroke-width="2.1" stroke-linecap="round" stroke-linejoin="round"/>
<path d="M1223.7,1024.6 L1249,1011.3" fill="none" stroke="#1d3f49" stroke-width="2.1" stroke-linecap="round" stroke-linejoin="round"/>
<path d="M1227.1,1039.6 L1252.4,1026.3" fill="none" stroke="#1d3f49" stroke-width="2.1" stroke-linecap="round" stroke-linejoin="round"/>
<path d="M1230.6,1054.8 L1255.9,1041.4" fill="none" stroke="#1d3f49" stroke-width="2.1" stroke-linecap="round" stroke-linejoin="round"/></g>
<g filter="url(#pencil)"><path d="M1192.7,784 C1195.1,778.2 1202.5,760.3 1206.9,749.4 C1211.3,738.5 1217.2,723.7 1219.3,718.5" fill="none" stroke="#15404c" stroke-width="2.1" stroke-linecap="round" stroke-linejoin="round"/>
<path d="M1197,791.4 C1200.1,785 1209.6,764.4 1215.6,753.1 C1221.5,741.8 1230,728.4 1232.8,723.5" fill="none" stroke="#15404c" stroke-width="2.1" stroke-linecap="round" stroke-linejoin="round"/>
<path d="M1202,740.7 C1203.6,738.9 1209,733.3 1211.9,729.6 C1214.7,725.9 1218,720.4 1219.3,718.5" fill="none" stroke="#15404c" stroke-width="2.1" stroke-linecap="round" stroke-linejoin="round"/>
<path d="M1203.2,769.1 C1205.7,764.4 1213.1,748.4 1218,740.7 C1223,733.1 1230.4,726.3 1232.8,723.5" fill="none" stroke="#15404c" stroke-width="2.1" stroke-linecap="round" stroke-linejoin="round"/>
<path d="M1209.4,779 C1212.7,773.7 1223,756.2 1229.1,746.9 C1235.3,737.7 1243.5,727.4 1246.4,723.5" fill="none" stroke="#15404c" stroke-width="2.1" stroke-linecap="round" stroke-linejoin="round"/>
<path d="M1229.1,751.9 C1230.8,749 1236.1,739.3 1239,734.6 C1241.9,729.8 1245.2,725.3 1246.4,723.5" fill="none" stroke="#15404c" stroke-width="2.1" stroke-linecap="round" stroke-linejoin="round"/>
<path d="M1224.2,769.1 C1227.9,765.8 1239.4,755.3 1246.4,749.4 C1253.4,743.4 1262.9,736 1266.2,733.3" fill="none" stroke="#15404c" stroke-width="2.1" stroke-linecap="round" stroke-linejoin="round"/>
<path d="M1234.1,779 C1237.4,775.7 1248.3,764.6 1253.8,759.3 C1259.4,753.9 1265.1,749 1267.4,746.9" fill="none" stroke="#15404c" stroke-width="2.1" stroke-linecap="round" stroke-linejoin="round"/>
<path d="M1229.1,740.7 C1231.2,740.1 1237.8,738.1 1241.5,737 C1245.2,736 1249.7,735 1251.4,734.6" fill="none" stroke="#15404c" stroke-width="2.1" stroke-linecap="round" stroke-linejoin="round"/>
<path d="M1211.9,751.9 C1213.9,750.6 1220.5,746.9 1224.2,744.4 C1227.9,742 1232.4,738.3 1234.1,737" fill="none" stroke="#15404c" stroke-width="2.1" stroke-linecap="round" stroke-linejoin="round"/>
<path d="M1234.1,793.8 C1234.9,790.9 1237,781.9 1239,776.5 C1241.1,771.2 1241.9,768.9 1246.4,761.7 C1250.9,754.5 1262.9,738.1 1266.2,733.3" fill="none" stroke="#15404c" stroke-width="2.1" stroke-linecap="round" stroke-linejoin="round"/>
<path d="M1200.7,751.9 L1216.8,737" fill="none" stroke="#15404c" stroke-width="2.1" stroke-linecap="round" stroke-linejoin="round"/>
<path d="M1214.3,764.2 L1229.1,737" fill="none" stroke="#15404c" stroke-width="2.1" stroke-linecap="round" stroke-linejoin="round"/>
<path d="M1206.9,759.3 L1221.7,732.1" fill="none" stroke="#15404c" stroke-width="2.1" stroke-linecap="round" stroke-linejoin="round"/>
<path d="M1197,776.5 C1199.5,771.6 1207.3,755.6 1211.9,746.9 C1216.4,738.3 1222.1,728.4 1224.2,724.7" fill="none" stroke="#15404c" stroke-width="2.1" stroke-linecap="round" stroke-linejoin="round"/>
<path d="M1204.4,780.2 C1207.3,775.1 1216.4,758 1221.7,749.4 C1227.1,740.7 1234.1,731.9 1236.5,728.4" fill="none" stroke="#15404c" stroke-width="2.1" stroke-linecap="round" stroke-linejoin="round"/>
<path d="M1211.9,769.1 C1214.3,764.8 1222.1,750 1226.7,743.2 C1231.2,736.4 1237,730.9 1239,728.4" fill="none" stroke="#15404c" stroke-width="2.1" stroke-linecap="round" stroke-linejoin="round"/>
<path d="M1219.3,774.1 C1222.1,770 1231.2,756.4 1236.5,749.4 C1241.9,742.4 1248.9,735 1251.4,732.1" fill="none" stroke="#15404c" stroke-width="2.1" stroke-linecap="round" stroke-linejoin="round"/>
<path d="M1200.7,769.1 L1209.4,749.4" fill="none" stroke="#15404c" stroke-width="2.1" stroke-linecap="round" stroke-linejoin="round"/>
<path d="M1229.1,764.2 C1232,760.3 1241.5,746.1 1246.4,740.7 C1251.4,735.4 1256.7,733.5 1258.8,732.1" fill="none" stroke="#15404c" stroke-width="2.1" stroke-linecap="round" stroke-linejoin="round"/>
<path d="M1239,769.1 C1241.9,765.8 1251.7,754.7 1256.3,749.4 C1260.9,744 1265,739.1 1266.8,737" fill="none" stroke="#15404c" stroke-width="2.1" stroke-linecap="round" stroke-linejoin="round"/>
<path d="M1229.1,769.1 C1230,776.1 1232,797.9 1234.1,811.1 C1236.1,824.3 1239.6,833.3 1241.5,848.1 C1243.3,863 1244.6,891.4 1245.2,900" fill="none" stroke="#15404c" stroke-width="1.6" stroke-linecap="round" stroke-linejoin="round"/></g>
<g filter="url(#pencil)"><path d="M1132.8,938 C1133.3,929 1134.4,901.8 1135.8,883.7 C1137.2,865.6 1138.3,845.4 1141.5,829.4 C1144.7,813.3 1151.2,798 1155.1,787.4 C1159,776.8 1163.3,769.3 1164.9,765.7" fill="none" stroke="#15404c" stroke-width="6.4" stroke-linecap="round" stroke-linejoin="round"/>
<path d="M1166.6,764.2 C1165.4,760.1 1161.4,749.8 1159.2,739.5 C1157.1,729.2 1155,714.8 1153.8,702.5 C1152.6,690.1 1152.3,677.3 1151.8,665.4 C1151.3,653.5 1151.4,639.9 1150.8,630.8 C1150.3,621.8 1150.2,616.8 1148.4,611.1 C1146.6,605.4 1141.4,599.2 1140,596.8" fill="none" stroke="#c0571e" stroke-width="4.4" stroke-linecap="round" stroke-linejoin="round"/>
<path d="M1164.9,765.7 C1163.7,761.6 1159.7,751.3 1157.5,741 C1155.4,730.7 1153.3,716.3 1152.1,704 C1150.9,691.6 1150.6,678.8 1150.1,666.9 C1149.6,655 1149.7,641.4 1149.1,632.3 C1148.6,623.3 1148.5,618.3 1146.7,612.6 C1144.9,606.9 1139.7,600.7 1138.3,598.3" fill="none" stroke="#15404c" stroke-width="6.1" stroke-linecap="round" stroke-linejoin="round"/>
<path d="M1150.8,630.8 C1150.4,627.6 1150.2,616.8 1148.4,611.1 C1146.6,605.4 1144.3,601.6 1140,596.8 C1135.6,591.9 1128.9,585.7 1122.2,582 C1115.5,578.2 1106.1,576 1100,574.1 C1093.8,572.1 1087.6,571 1085.2,570.4" fill="none" stroke="#c0571e" stroke-width="3.4" stroke-linecap="round" stroke-linejoin="round"/>
<path d="M1149.1,632.3 C1148.7,629.1 1148.5,618.3 1146.7,612.6 C1144.9,606.9 1142.6,603.1 1138.3,598.3 C1133.9,593.4 1127.2,587.2 1120.5,583.5 C1113.8,579.7 1104.4,577.5 1098.3,575.6 C1092.1,573.6 1085.9,572.5 1083.5,571.9" fill="none" stroke="#15404c" stroke-width="4.7" stroke-linecap="round" stroke-linejoin="round"/>
<path d="M1085.2,570.4 C1082.7,569.4 1077.3,567.7 1070.3,564.7 C1063.3,561.7 1052.2,555.7 1043.2,552.3 C1034.2,549 1021,545.7 1016.5,544.4" fill="none" stroke="#c0571e" stroke-width="2.5" stroke-linecap="round" stroke-linejoin="round"/>
<path d="M1083.5,571.9 C1081,570.9 1075.6,569.2 1068.6,566.2 C1061.6,563.2 1050.5,557.2 1041.5,553.8 C1032.5,550.5 1019.3,547.2 1014.8,545.9" fill="none" stroke="#15404c" stroke-width="3.5" stroke-linecap="round" stroke-linejoin="round"/>
<path d="M1070.3,565.4 C1066.6,560.7 1054.6,544.4 1048.1,537 C1041.6,529.6 1034.1,523.6 1031.3,521" fill="none" stroke="#c0571e" stroke-width="2.4" stroke-linecap="round" stroke-linejoin="round"/>
<path d="M1068.6,566.9 C1064.9,562.2 1052.9,545.9 1046.4,538.5 C1039.9,531.1 1032.4,525.1 1029.6,522.5" fill="none" stroke="#15404c" stroke-width="3.3" stroke-linecap="round" stroke-linejoin="round"/>
<path d="M1060.5,553.1 C1059.2,550 1054.7,539.7 1053.1,534.5 C1051.4,529.4 1051,524.3 1050.6,522.2" fill="none" stroke="#c0571e" stroke-width="2.2" stroke-linecap="round" stroke-linejoin="round"/>
<path d="M1058.8,554.6 C1057.5,551.5 1053,541.2 1051.4,536 C1049.7,530.9 1049.3,525.8 1048.9,523.7" fill="none" stroke="#15404c" stroke-width="3.1" stroke-linecap="round" stroke-linejoin="round"/>
<path d="M1046.9,564.7 C1045.4,564.5 1040.9,563.7 1038.2,563.7 C1035.6,563.7 1032.1,564.5 1030.8,564.7" fill="none" stroke="#c0571e" stroke-width="2.2" stroke-linecap="round" stroke-linejoin="round"/>
<path d="M1045.2,566.2 C1043.7,566 1039.2,565.2 1036.5,565.2 C1033.9,565.2 1030.4,566 1029.1,566.2" fill="none" stroke="#15404c" stroke-width="3.1" stroke-linecap="round" stroke-linejoin="round"/>
<path d="M1122.2,582 C1122.4,578.6 1123.2,568.2 1123.4,561.7 C1123.6,555.2 1123.4,546.3 1123.4,543.2" fill="none" stroke="#c0571e" stroke-width="2.4" stroke-linecap="round" stroke-linejoin="round"/>
<path d="M1120.5,583.5 C1120.7,580.1 1121.5,569.7 1121.7,563.2 C1121.9,556.7 1121.7,547.8 1121.7,544.7" fill="none" stroke="#15404c" stroke-width="3.3" stroke-linecap="round" stroke-linejoin="round"/>
<path d="M1119.7,576.5 C1118.1,573.2 1112.3,562.3 1109.8,556.8 C1107.4,551.2 1105.7,545.5 1104.9,543.2" fill="none" stroke="#c0571e" stroke-width="2" stroke-linecap="round" stroke-linejoin="round"/>
<path d="M1118,578 C1116.4,574.7 1110.6,563.8 1108.1,558.3 C1105.7,552.7 1104,547 1103.2,544.7" fill="none" stroke="#15404c" stroke-width="2.8" stroke-linecap="round" stroke-linejoin="round"/>
<path d="M1150.8,633.3 C1152.2,626.3 1155.8,604.1 1159.2,591.3 C1162.7,578.6 1167.5,565.8 1171.6,556.8 C1175.7,547.7 1179,546.1 1183.9,537 C1188.9,528 1198.3,508.2 1201.2,502.5" fill="none" stroke="#c0571e" stroke-width="2.4" stroke-linecap="round" stroke-linejoin="round"/>
<path d="M1149.1,634.8 C1150.5,627.8 1154.1,605.6 1157.5,592.8 C1161,580.1 1165.8,567.3 1169.9,558.3 C1174,549.2 1177.3,547.6 1182.2,538.5 C1187.2,529.5 1196.6,509.7 1199.5,504" fill="none" stroke="#15404c" stroke-width="3.3" stroke-linecap="round" stroke-linejoin="round"/>
<path d="M1183.9,537 C1187.2,535 1197.5,528 1203.7,524.7 C1209.8,521.4 1218.1,518.5 1221,517.3" fill="none" stroke="#c0571e" stroke-width="2" stroke-linecap="round" stroke-linejoin="round"/>
<path d="M1182.2,538.5 C1185.5,536.5 1195.8,529.5 1202,526.2 C1208.1,522.9 1216.4,520 1219.3,518.8" fill="none" stroke="#15404c" stroke-width="2.8" stroke-linecap="round" stroke-linejoin="round"/>
<path d="M1183.9,538.3 C1188,537.6 1200,536.2 1208.6,534.5 C1217.3,532.9 1231.2,529.4 1235.8,528.4" fill="none" stroke="#c0571e" stroke-width="1.9" stroke-linecap="round" stroke-linejoin="round"/>
<path d="M1182.2,539.8 C1186.3,539.1 1198.3,537.7 1206.9,536 C1215.6,534.4 1229.5,530.9 1234.1,529.9" fill="none" stroke="#15404c" stroke-width="2.6" stroke-linecap="round" stroke-linejoin="round"/>
<path d="M1171.6,556.8 C1170.8,553.5 1167.9,543.6 1166.6,537 C1165.4,530.4 1164.6,520.6 1164.2,517.3" fill="none" stroke="#c0571e" stroke-width="1.7" stroke-linecap="round" stroke-linejoin="round"/>
<path d="M1169.9,558.3 C1169.1,555 1166.2,545.1 1164.9,538.5 C1163.7,531.9 1162.9,522.1 1162.5,518.8" fill="none" stroke="#15404c" stroke-width="2.4" stroke-linecap="round" stroke-linejoin="round"/>
<path d="M1150.8,665.4 C1154.7,661.3 1166.1,648.5 1174,640.7 C1182,632.9 1191.9,623.8 1198.7,618.5 C1205.5,613.2 1212.1,610.3 1214.8,608.6" fill="none" stroke="#c0571e" stroke-width="2.2" stroke-linecap="round" stroke-linejoin="round"/>
<path d="M1149.1,666.9 C1153,662.8 1164.4,650 1172.3,642.2 C1180.3,634.4 1190.2,625.3 1197,620 C1203.8,614.7 1210.4,611.8 1213.1,610.1" fill="none" stroke="#15404c" stroke-width="3.1" stroke-linecap="round" stroke-linejoin="round"/>
<path d="M1193.8,623.4 C1195.9,623.4 1202.4,623.8 1206.1,623.4 C1209.8,623 1214.4,621.4 1216,621" fill="none" stroke="#c0571e" stroke-width="1.7" stroke-linecap="round" stroke-linejoin="round"/>
<path d="M1192.1,624.9 C1194.2,624.9 1200.7,625.3 1204.4,624.9 C1208.1,624.5 1212.7,622.9 1214.3,622.5" fill="none" stroke="#15404c" stroke-width="2.4" stroke-linecap="round" stroke-linejoin="round"/>
<path d="M1152.3,702.5 C1150.2,700.4 1142.9,693 1139.5,690.1 C1136.1,687.2 1135,687.6 1132.1,685.2 C1129.2,682.7 1123.8,676.9 1122.2,675.3" fill="none" stroke="#c0571e" stroke-width="2.2" stroke-linecap="round" stroke-linejoin="round"/>
<path d="M1150.6,704 C1148.5,701.9 1141.2,694.5 1137.8,691.6 C1134.4,688.7 1133.3,689.1 1130.4,686.7 C1127.5,684.2 1122.1,678.4 1120.5,676.8" fill="none" stroke="#15404c" stroke-width="3.1" stroke-linecap="round" stroke-linejoin="round"/>
<path d="M1132.1,685.2 C1132,683.9 1131.8,680.2 1131.6,677.8 C1131.4,675.3 1131,671.6 1130.8,670.4" fill="none" stroke="#c0571e" stroke-width="1.9" stroke-linecap="round" stroke-linejoin="round"/>
<path d="M1130.4,686.7 C1130.3,685.4 1130.1,681.7 1129.9,679.3 C1129.7,676.8 1129.3,673.1 1129.1,671.9" fill="none" stroke="#15404c" stroke-width="2.6" stroke-linecap="round" stroke-linejoin="round"/>
<path d="M1166.6,764.2 C1169.5,758 1176.9,741.5 1183.9,727.1 C1190.9,712.7 1202.4,690.1 1208.6,677.8 C1214.8,665.4 1216,662.1 1221,653.1 C1225.9,644 1232.5,630.8 1238.2,623.4 C1244,616 1252.6,611.1 1255.5,608.6" fill="none" stroke="#c0571e" stroke-width="3.7" stroke-linecap="round" stroke-linejoin="round"/>
<path d="M1164.9,765.7 C1167.8,759.5 1175.2,743 1182.2,728.6 C1189.2,714.2 1200.7,691.6 1206.9,679.3 C1213.1,666.9 1214.3,663.6 1219.3,654.6 C1224.2,645.5 1230.8,632.3 1236.5,624.9 C1242.3,617.5 1250.9,612.6 1253.8,610.1" fill="none" stroke="#15404c" stroke-width="5.2" stroke-linecap="round" stroke-linejoin="round"/>
<path d="M1208.6,677.8 C1214.8,674.9 1233.3,665.8 1245.7,660.5 C1258,655.1 1276.5,648.1 1282.7,645.7" fill="none" stroke="#c0571e" stroke-width="2" stroke-linecap="round" stroke-linejoin="round"/>
<path d="M1206.9,679.3 C1213.1,676.4 1231.6,667.3 1244,662 C1256.3,656.6 1274.8,649.6 1281,647.2" fill="none" stroke="#15404c" stroke-width="2.8" stroke-linecap="round" stroke-linejoin="round"/>
<path d="M1245.7,661.7 C1248.9,662.7 1259.2,666.4 1265.4,667.9 C1271.6,669.3 1279.8,669.9 1282.7,670.4" fill="none" stroke="#c0571e" stroke-width="1.7" stroke-linecap="round" stroke-linejoin="round"/>
<path d="M1244,663.2 C1247.2,664.2 1257.5,667.9 1263.7,669.4 C1269.9,670.8 1278.1,671.4 1281,671.9" fill="none" stroke="#15404c" stroke-width="2.4" stroke-linecap="round" stroke-linejoin="round"/>
<path d="M1191.3,724.7 C1197.5,722.2 1216,714 1228.4,709.9 C1240.7,705.7 1259.2,701.6 1265.4,700" fill="none" stroke="#c0571e" stroke-width="2.2" stroke-linecap="round" stroke-linejoin="round"/>
<path d="M1189.6,726.2 C1195.8,723.7 1214.3,715.5 1226.7,711.4 C1239,707.2 1257.5,703.1 1263.7,701.5" fill="none" stroke="#15404c" stroke-width="3.1" stroke-linecap="round" stroke-linejoin="round"/>
<path d="M1253.1,703.7 C1256.4,704.3 1267,705.5 1272.8,707.4 C1278.6,709.2 1285.2,713.6 1287.6,714.8" fill="none" stroke="#c0571e" stroke-width="1.9" stroke-linecap="round" stroke-linejoin="round"/>
<path d="M1251.4,705.2 C1254.7,705.8 1265.3,707 1271.1,708.9 C1276.9,710.7 1283.5,715.1 1285.9,716.3" fill="none" stroke="#15404c" stroke-width="2.6" stroke-linecap="round" stroke-linejoin="round"/>
<path d="M1240.7,707.4 C1244.4,709 1256.8,714 1262.9,717.3 C1269.1,720.6 1275.3,725.5 1277.7,727.1" fill="none" stroke="#c0571e" stroke-width="1.7" stroke-linecap="round" stroke-linejoin="round"/>
<path d="M1239,708.9 C1242.7,710.5 1255.1,715.5 1261.2,718.8 C1267.4,722.1 1273.6,727 1276,728.6" fill="none" stroke="#15404c" stroke-width="2.4" stroke-linecap="round" stroke-linejoin="round"/>
<path d="M1223.4,650.6 C1226.3,649 1235,644 1240.7,640.7 C1246.5,637.4 1255.1,632.5 1258,630.8" fill="none" stroke="#c0571e" stroke-width="1.7" stroke-linecap="round" stroke-linejoin="round"/>
<path d="M1221.7,652.1 C1224.6,650.5 1233.3,645.5 1239,642.2 C1244.8,638.9 1253.4,634 1256.3,632.3" fill="none" stroke="#15404c" stroke-width="2.4" stroke-linecap="round" stroke-linejoin="round"/>
<path d="M1127.9,792.3 C1128.7,795.2 1131.1,803 1132.8,809.6 C1134.6,816.2 1137.4,828.1 1138.3,831.9" fill="none" stroke="#15404c" stroke-width="4" stroke-linecap="round" stroke-linejoin="round"/>
<path d="M1126.9,794.8 C1127.7,797.7 1130.2,805.7 1131.9,812.1 C1133.5,818.5 1136,829.6 1136.8,833.1" fill="none" stroke="#f08b86" stroke-width="1" stroke-linecap="round" stroke-linejoin="round"/></g>
<path d="M943,868.5 C938,868.3 929.7,867.6 925.2,867.8 C920.6,868 912.8,868.8 908.9,870 C904.9,871.2 898.6,874.3 895.6,877 C892.6,879.6 888.3,886.1 886.4,890 C884.4,893.9 881.9,901.6 881,906.3 C880.2,911 879.7,920.6 879.9,925.6 C880,930.5 881.4,938.6 882.2,943.3 C883.1,948.1 885,956.8 886.1,961.1 C887.1,965.5 888.9,972.3 889.9,975.9 C891,979.6 894,986.4 893.8,988.5 C893.5,990.6 889.4,990.4 888.1,991.5 C886.9,992.6 884.2,995.6 884.4,997 C884.6,998.3 888.1,1000.7 889.6,1001.4 C891.2,1002.1 894.8,999.9 896,1002 C897.2,1004.1 898.4,1013.8 899,1017.4 C899.6,1021 900.5,1026.6 900.6,1029.3 C900.7,1031.9 899.2,1036.4 899.7,1037.4 C900.2,1038.4 903.3,1037.6 904.4,1036.7 C905.6,1035.8 907.3,1032.5 908.1,1030.7 C909,1029 909.2,1023.8 911.1,1023.3 C913,1022.9 919.5,1026.7 922.2,1027.5 C924.9,1028.3 929.7,1027.9 931.4,1029.3 C933.1,1030.6 934.2,1035.7 935.3,1037.4 C936.3,1039.1 938.1,1042.5 939.3,1042 C940.4,1041.5 942.5,1036.2 943.9,1033.7 C945.2,1031.2 946.9,1026.7 949.2,1023.3 C951.4,1020 958,1012.5 960.7,1008.5 C963.5,1004.6 967.4,997.3 969.6,993.7 C971.8,990.1 975.2,983.6 977.3,981.9 C979.5,980.1 983.7,980.9 985.9,980.4 C988.2,979.9 992.7,979 994.1,978.1 C995.5,977.3 996.7,975 996.6,974.1 C996.5,973.3 994.8,971.9 993.3,971.8 C991.9,971.6 987.7,972.6 985.9,973 C984.2,973.4 980.7,975.7 980.3,974.7 C979.9,973.8 982.1,968.8 983.3,965.6 C984.4,962.4 987.8,954.7 989.2,950.7 C990.6,946.8 992.8,939.9 993.6,935.9 C994.5,932 995.6,925.1 995.7,921.1 C995.8,917.2 994.9,910 994.2,906.3 C993.5,902.5 991.7,896.3 990.4,893 C989.1,889.6 986.4,883.9 984.4,881.4 C982.5,878.9 978.5,875.6 975.6,874 C972.6,872.4 966.6,870 962.2,869.3 C957.9,868.5 947.9,868.7 943,868.5Z" fill="#fff" stroke="#fff" stroke-width="9" stroke-linejoin="round" filter="url(#halo)"/>
<defs><filter id="halo" x="-20%" y="-20%" width="140%" height="140%"><feGaussianBlur stdDeviation="1.6"/></filter><radialGradient id="cb" cx="0.55" cy="0.42" r="0.7"><stop offset="0" stop-color="#2b8c85"/><stop offset="0.6" stop-color="#27827c"/><stop offset="1" stop-color="#1c6f6b"/></radialGradient><radialGradient id="fc" cx="0.5" cy="0.5" r="0.5"><stop offset="0" stop-color="#f4ebb0"/><stop offset="0.75" stop-color="#f1df8c"/><stop offset="1" stop-color="#e9c65a"/></radialGradient></defs>
<g filter="url(#chalk)"><path d="M943,868.5 C938,868.3 929.7,867.6 925.2,867.8 C920.6,868 912.8,868.8 908.9,870 C904.9,871.2 898.6,874.3 895.6,877 C892.6,879.6 888.3,886.1 886.4,890 C884.4,893.9 881.9,901.6 881,906.3 C880.2,911 879.7,920.6 879.9,925.6 C880,930.5 881.4,938.6 882.2,943.3 C883.1,948.1 885,956.8 886.1,961.1 C887.1,965.5 888.9,972.3 889.9,975.9 C891,979.6 894,986.4 893.8,988.5 C893.5,990.6 889.4,990.4 888.1,991.5 C886.9,992.6 884.2,995.6 884.4,997 C884.6,998.3 888.1,1000.7 889.6,1001.4 C891.2,1002.1 894.8,999.9 896,1002 C897.2,1004.1 898.4,1013.8 899,1017.4 C899.6,1021 900.5,1026.6 900.6,1029.3 C900.7,1031.9 899.2,1036.4 899.7,1037.4 C900.2,1038.4 903.3,1037.6 904.4,1036.7 C905.6,1035.8 907.3,1032.5 908.1,1030.7 C909,1029 909.2,1023.8 911.1,1023.3 C913,1022.9 919.5,1026.7 922.2,1027.5 C924.9,1028.3 929.7,1027.9 931.4,1029.3 C933.1,1030.6 934.2,1035.7 935.3,1037.4 C936.3,1039.1 938.1,1042.5 939.3,1042 C940.4,1041.5 942.5,1036.2 943.9,1033.7 C945.2,1031.2 946.9,1026.7 949.2,1023.3 C951.4,1020 958,1012.5 960.7,1008.5 C963.5,1004.6 967.4,997.3 969.6,993.7 C971.8,990.1 975.2,983.6 977.3,981.9 C979.5,980.1 983.7,980.9 985.9,980.4 C988.2,979.9 992.7,979 994.1,978.1 C995.5,977.3 996.7,975 996.6,974.1 C996.5,973.3 994.8,971.9 993.3,971.8 C991.9,971.6 987.7,972.6 985.9,973 C984.2,973.4 980.7,975.7 980.3,974.7 C979.9,973.8 982.1,968.8 983.3,965.6 C984.4,962.4 987.8,954.7 989.2,950.7 C990.6,946.8 992.8,939.9 993.6,935.9 C994.5,932 995.6,925.1 995.7,921.1 C995.8,917.2 994.9,910 994.2,906.3 C993.5,902.5 991.7,896.3 990.4,893 C989.1,889.6 986.4,883.9 984.4,881.4 C982.5,878.9 978.5,875.6 975.6,874 C972.6,872.4 966.6,870 962.2,869.3 C957.9,868.5 947.9,868.7 943,868.5Z" fill="url(#cb)"/>
<path d="M904.4,958.1 C904.2,960.6 902.5,970 903,973 C903.5,975.9 906.7,975.4 907.4,975.9" fill="none" stroke="#1e6f6b" stroke-width="2.2" stroke-linecap="round" opacity="0.6"/>
<path d="M948.9,980.4 C949.9,982.8 952.3,990.7 954.8,995.2 C957.3,999.6 962.2,1005.1 963.7,1007" fill="none" stroke="#1e6f6b" stroke-width="2.2" stroke-linecap="round" opacity="0.6"/>
<path d="M892.6,901.9 C892.1,905.3 889.8,915.7 889.6,922.6 C889.5,929.5 891.5,939.9 891.9,943.3" fill="none" stroke="#1e6f6b" stroke-width="2.2" stroke-linecap="round" opacity="0.6"/>
<path d="M937,995.2 L934.1,1014.4" fill="none" stroke="#1e6f6b" stroke-width="2.2" stroke-linecap="round" opacity="0.6"/></g>
<path d="M885,893 L887.9,891.8" fill="none" stroke="#cdd58e" stroke-width="1.2" stroke-linecap="round" stroke-linejoin="round"/>
<path d="M886.4,894.3 L889.2,893.1" fill="none" stroke="#cdd58e" stroke-width="1.2" stroke-linecap="round" stroke-linejoin="round"/>
<path d="M887.7,895.6 L890.5,894.5" fill="none" stroke="#cdd58e" stroke-width="1.2" stroke-linecap="round" stroke-linejoin="round"/>
<path d="M874.7,917.4 L877.5,916.2" fill="none" stroke="#cdd58e" stroke-width="1.2" stroke-linecap="round" stroke-linejoin="round"/>
<path d="M876,918.7 L878.8,917.5" fill="none" stroke="#cdd58e" stroke-width="1.2" stroke-linecap="round" stroke-linejoin="round"/>
<path d="M877.3,919.9 L880.1,918.7" fill="none" stroke="#cdd58e" stroke-width="1.2" stroke-linecap="round" stroke-linejoin="round"/>
<path d="M885.9,935.9 L888.7,934.7" fill="none" stroke="#cdd58e" stroke-width="1.2" stroke-linecap="round" stroke-linejoin="round"/>
<path d="M887.3,937.2 L890.1,936" fill="none" stroke="#cdd58e" stroke-width="1.2" stroke-linecap="round" stroke-linejoin="round"/>
<path d="M888.6,938.5 L891.4,937.3" fill="none" stroke="#cdd58e" stroke-width="1.2" stroke-linecap="round" stroke-linejoin="round"/>
<path d="M889.9,939.8 L892.7,938.6" fill="none" stroke="#cdd58e" stroke-width="1.2" stroke-linecap="round" stroke-linejoin="round"/>
<path d="M905.8,955.2 L908.6,954" fill="none" stroke="#cdd58e" stroke-width="1.2" stroke-linecap="round" stroke-linejoin="round"/>
<path d="M907.1,956.5 L909.9,955.3" fill="none" stroke="#cdd58e" stroke-width="1.2" stroke-linecap="round" stroke-linejoin="round"/>
<path d="M908.4,957.8 L911.3,956.6" fill="none" stroke="#cdd58e" stroke-width="1.2" stroke-linecap="round" stroke-linejoin="round"/>
<path d="M888,973 L890.8,971.8" fill="none" stroke="#cdd58e" stroke-width="1.2" stroke-linecap="round" stroke-linejoin="round"/>
<path d="M889.3,974.2 L892.1,973" fill="none" stroke="#cdd58e" stroke-width="1.2" stroke-linecap="round" stroke-linejoin="round"/>
<path d="M890.7,975.5 L893.5,974.3" fill="none" stroke="#cdd58e" stroke-width="1.2" stroke-linecap="round" stroke-linejoin="round"/>
<path d="M960,987 L962.8,985.9" fill="none" stroke="#cdd58e" stroke-width="1.2" stroke-linecap="round" stroke-linejoin="round"/>
<path d="M961.3,988.1 L964.1,986.9" fill="none" stroke="#cdd58e" stroke-width="1.2" stroke-linecap="round" stroke-linejoin="round"/>
<path d="M962.7,989.1 L965.5,987.9" fill="none" stroke="#cdd58e" stroke-width="1.2" stroke-linecap="round" stroke-linejoin="round"/>
<path d="M964,990.1 L966.8,989" fill="none" stroke="#cdd58e" stroke-width="1.2" stroke-linecap="round" stroke-linejoin="round"/>
<path d="M906.7,1008.5 L909.5,1007.3" fill="none" stroke="#cdd58e" stroke-width="1.2" stroke-linecap="round" stroke-linejoin="round"/>
<path d="M908,1009.8 L910.8,1008.6" fill="none" stroke="#cdd58e" stroke-width="1.2" stroke-linecap="round" stroke-linejoin="round"/>
<path d="M909.3,1011 L912.1,1009.9" fill="none" stroke="#cdd58e" stroke-width="1.2" stroke-linecap="round" stroke-linejoin="round"/>
<path d="M910.7,1012.3 L913.5,1011.1" fill="none" stroke="#cdd58e" stroke-width="1.2" stroke-linecap="round" stroke-linejoin="round"/>
<path d="M989.5,906.3 L992.3,905.1" fill="none" stroke="#cdd58e" stroke-width="1.2" stroke-linecap="round" stroke-linejoin="round"/>
<path d="M990.8,907.5 L993.6,906.3" fill="none" stroke="#cdd58e" stroke-width="1.2" stroke-linecap="round" stroke-linejoin="round"/>
<path d="M992.1,908.7 L995,907.5" fill="none" stroke="#cdd58e" stroke-width="1.2" stroke-linecap="round" stroke-linejoin="round"/>
<path d="M991,930.7 L993.8,929.6" fill="none" stroke="#cdd58e" stroke-width="1.2" stroke-linecap="round" stroke-linejoin="round"/>
<path d="M992.3,931.9 L995.1,930.7" fill="none" stroke="#cdd58e" stroke-width="1.2" stroke-linecap="round" stroke-linejoin="round"/>
<path d="M993.6,933.1 L996.4,931.9" fill="none" stroke="#cdd58e" stroke-width="1.2" stroke-linecap="round" stroke-linejoin="round"/>
<path d="M940.4,1015.9 L943.3,1014.7" fill="none" stroke="#cdd58e" stroke-width="1.2" stroke-linecap="round" stroke-linejoin="round"/>
<path d="M941.8,1017.1 L944.6,1015.9" fill="none" stroke="#cdd58e" stroke-width="1.2" stroke-linecap="round" stroke-linejoin="round"/>
<path d="M897,869.3 L895.9,866.3" fill="none" stroke="#2a6f6a" stroke-width="0.9" stroke-linecap="round" stroke-linejoin="round"/>
<path d="M900,867 L899.4,863.8" fill="none" stroke="#2a6f6a" stroke-width="0.9" stroke-linecap="round" stroke-linejoin="round"/>
<path d="M888.9,881.1 L886.2,879.3" fill="none" stroke="#2a6f6a" stroke-width="0.9" stroke-linecap="round" stroke-linejoin="round"/>
<path d="M886.7,884.1 L883.7,882.9" fill="none" stroke="#2a6f6a" stroke-width="0.9" stroke-linecap="round" stroke-linejoin="round"/>
<path d="M988.1,879.6 L989.9,877" fill="none" stroke="#2a6f6a" stroke-width="0.9" stroke-linecap="round" stroke-linejoin="round"/>
<path d="M990.4,881.9 L992.7,879.8" fill="none" stroke="#2a6f6a" stroke-width="0.9" stroke-linecap="round" stroke-linejoin="round"/>
<path d="M995.6,897.4 L997.9,896.5" fill="none" stroke="#2a6f6a" stroke-width="0.9" stroke-linecap="round" stroke-linejoin="round"/>
<path d="M970.4,1001.1 L972.4,1002.6" fill="none" stroke="#2a6f6a" stroke-width="0.9" stroke-linecap="round" stroke-linejoin="round"/>
<path d="M897,1005.6 L894.7,1006.4" fill="none" stroke="#2a6f6a" stroke-width="0.9" stroke-linecap="round" stroke-linejoin="round"/>
<circle cx="899.3" cy="903" r="1.1" fill="#f3f7f0"/>
<circle cx="908.4" cy="908.1" r="1.1" fill="#f3f7f0"/>
<circle cx="896.3" cy="914.4" r="1.1" fill="#f3f7f0"/>
<circle cx="886.4" cy="919.9" r="1.1" fill="#f3f7f0"/>
<circle cx="896" cy="927" r="1.1" fill="#f3f7f0"/>
<circle cx="885.9" cy="945.6" r="1.1" fill="#f3f7f0"/>
<circle cx="897.8" cy="952.2" r="1.1" fill="#f3f7f0"/>
<circle cx="911.9" cy="960.4" r="1.1" fill="#f3f7f0"/>
<circle cx="899.3" cy="962.6" r="1.1" fill="#f3f7f0"/>
<circle cx="889.6" cy="965.3" r="1.1" fill="#f3f7f0"/>
<circle cx="912.1" cy="973" r="1.1" fill="#f3f7f0"/>
<circle cx="929.6" cy="967.8" r="1.1" fill="#f3f7f0"/>
<circle cx="945.6" cy="972.7" r="1.1" fill="#f3f7f0"/>
<circle cx="965.5" cy="964.1" r="1.1" fill="#f3f7f0"/>
<circle cx="969.9" cy="950" r="1.1" fill="#f3f7f0"/>
<circle cx="982.7" cy="947.8" r="1.1" fill="#f3f7f0"/>
<circle cx="985.9" cy="932.7" r="1.1" fill="#f3f7f0"/>
<circle cx="972.6" cy="939.2" r="1.1" fill="#f3f7f0"/>
<circle cx="987.7" cy="921.9" r="1.1" fill="#f3f7f0"/>
<circle cx="984.1" cy="895.9" r="1.1" fill="#f3f7f0"/>
<circle cx="965.2" cy="895.2" r="1.1" fill="#f3f7f0"/>
<circle cx="940" cy="903.6" r="1.1" fill="#f3f7f0"/>
<circle cx="937.3" cy="929.7" r="1.1" fill="#f3f7f0"/>
<circle cx="978.5" cy="959.6" r="1.1" fill="#f3f7f0"/>
<circle cx="977.3" cy="970.7" r="1.1" fill="#f3f7f0"/>
<circle cx="973.8" cy="979.6" r="1.1" fill="#f3f7f0"/>
<circle cx="956.6" cy="990.7" r="1.1" fill="#f3f7f0"/>
<circle cx="943.7" cy="983.3" r="1.1" fill="#f3f7f0"/>
<circle cx="926.7" cy="983.3" r="1.1" fill="#f3f7f0"/>
<circle cx="913.6" cy="983.3" r="1.1" fill="#f3f7f0"/>
<circle cx="902.2" cy="985.1" r="1.1" fill="#f3f7f0"/>
<circle cx="903.3" cy="994.4" r="1.1" fill="#f3f7f0"/>
<circle cx="914.5" cy="994.4" r="1.1" fill="#f3f7f0"/>
<circle cx="925.2" cy="1002.6" r="1.1" fill="#f3f7f0"/>
<circle cx="937.8" cy="1002.1" r="1.1" fill="#f3f7f0"/>
<circle cx="948.9" cy="997" r="1.1" fill="#f3f7f0"/>
<circle cx="956.6" cy="1007.8" r="1.1" fill="#f3f7f0"/>
<circle cx="945.6" cy="1011.8" r="1.1" fill="#f3f7f0"/>
<circle cx="931.4" cy="1008.5" r="1.1" fill="#f3f7f0"/>
<circle cx="923.4" cy="1012.2" r="1.1" fill="#f3f7f0"/>
<circle cx="916.3" cy="1009.7" r="1.1" fill="#f3f7f0"/>
<circle cx="915.1" cy="1001.9" r="1.1" fill="#f3f7f0"/>
<circle cx="940.7" cy="1018.9" r="1.1" fill="#f3f7f0"/>
<circle cx="931.1" cy="1017.4" r="1.1" fill="#f3f7f0"/>
<circle cx="950.4" cy="983.3" r="1.1" fill="#f3f7f0"/>
<circle cx="903.3" cy="894.4" r="1.1" fill="#f3f7f0"/>
<circle cx="972.6" cy="986.3" r="1.1" fill="#f3f7f0"/>
<circle cx="922.2" cy="918.9" r="10.1" fill="#f2f4f1"/>
<clipPath id="ec420"><circle cx="922.2" cy="918.9" r="10.1"/></clipPath>
<circle cx="924.6" cy="914.9" r="8.6" fill="#1c5b5a" clip-path="url(#ec420)"/>
<circle cx="922.2" cy="918.9" r="10.1" fill="none" stroke="#1f6e6a" stroke-width="1"/>
<circle cx="965.9" cy="918.1" r="9.2" fill="#f2f4f1"/>
<clipPath id="ec715"><circle cx="965.9" cy="918.1" r="9.2"/></clipPath>
<circle cx="967.6" cy="914.6" r="7.9" fill="#1c5b5a" clip-path="url(#ec715)"/>
<circle cx="965.9" cy="918.1" r="9.2" fill="none" stroke="#1f6e6a" stroke-width="1"/>
<path d="M909.6,899.2 C910.5,898.7 912.9,896.6 914.8,896.2 C916.7,895.8 920,896.7 921,896.8" fill="none" stroke="#144f4d" stroke-width="1.8" stroke-linecap="round" stroke-linejoin="round"/>
<path d="M970.4,897.4 C971.4,897.5 974.6,897.4 976.3,898 C978,898.6 979.6,900.7 980.3,901.3" fill="none" stroke="#144f4d" stroke-width="1.8" stroke-linecap="round" stroke-linejoin="round"/>
<path d="M938.2,947.2 Q944.1,952.5 950.7,947.2" fill="none" stroke="#12403f" stroke-width="1.9" stroke-linecap="round"/>
<path d="M992.9,970.3 L991.9,991" fill="none" stroke="#12373f" stroke-width="4.4" stroke-linecap="round" stroke-linejoin="round"/>
<g filter="url(#chalk)"><path d="M928.8,875.6 C927.7,874.2 926.9,875.1 924.4,875.4 C921.9,875.8 916.4,877.1 914,877.7 C911.7,878.2 911.2,878.4 910.4,878.9 C909.5,879.3 909.2,879.7 908.9,880.2 C908.6,880.8 908.7,881.8 908.6,882.4 C908.6,883.1 908.8,883.5 908.9,884.1 C909,884.6 909.1,885.1 909.3,885.7 C909.6,886.3 910,887.1 910.5,887.5 C911,888 911.4,888.2 912.4,888.2 C913.3,888.2 913.8,888.2 916.2,887.8 C918.6,887.4 924.2,886.3 926.6,885.6 C929,884.9 930.1,885.4 930.5,883.7 C930.9,882 929.8,876.9 928.8,875.6Z" fill="#8da23c"/>
<path d="M950.2,854.1 C946.7,851.4 935.1,849.6 929.1,849 C923.1,848.5 918.8,849.7 914.1,850.7 C909.5,851.8 904.4,854.1 901,855.5 C897.7,856.9 895.7,858.1 893.9,859 C892.1,860 890.4,860.4 890.4,861.1 C890.4,861.8 892.2,862.2 894,863 C895.8,863.9 897.9,865 901.3,866.2 C904.7,867.4 909.9,869.4 914.6,870.3 C919.3,871.1 923.7,872.1 929.6,871.3 C935.6,870.4 947.1,868 950.5,865.2 C953.9,862.3 953.8,856.8 950.2,854.1Z" fill="#f8bb36"/>
<path d="M952.6,854.5 C951.2,850.9 943.6,845.3 939.6,842.7 C935.5,840.2 931.9,839.8 928.1,839.1 C924.3,838.5 919.7,838.9 916.7,839 C913.7,839.1 911.8,839.5 910.1,839.7 C908.4,839.9 906.9,839.8 906.7,840.4 C906.4,841 907.5,842 908.5,843.4 C909.4,844.7 910.4,846.4 912.4,848.7 C914.3,851 917.2,854.6 920.2,857 C923.2,859.4 925.9,861.8 930.6,863.1 C935.2,864.3 944.5,866.1 948.1,864.7 C951.8,863.3 954,858.2 952.6,854.5Z" fill="#ec9f2c"/>
<path d="M953.9,855.9 C953.8,852.3 949,845.1 946.3,841.6 C943.5,838.1 940.5,836.7 937.4,834.9 C934.3,833.2 930.3,832 927.6,831.2 C925,830.3 923.2,830.1 921.7,829.8 C920.2,829.4 918.9,828.8 918.5,829.3 C918.1,829.7 918.8,830.9 919.2,832.4 C919.6,833.9 919.9,835.7 920.9,838.3 C921.9,840.8 923.2,844.9 925.1,847.9 C927,850.9 928.6,853.8 932.2,856.4 C935.8,858.9 943.2,863.4 946.9,863.3 C950.5,863.2 954,859.6 953.9,855.9Z" fill="#f8bb36"/>
<path d="M954.6,857.8 C956,855.1 955,848.3 954.2,844.9 C953.5,841.5 951.7,839.6 949.9,837.4 C948.1,835.2 945.3,833.2 943.5,831.8 C941.8,830.4 940.5,829.7 939.4,829 C938.3,828.4 937.5,827.6 937,827.8 C936.5,828 936.6,829.1 936.3,830.3 C936,831.6 935.6,833 935.3,835.2 C935.1,837.4 934.5,840.9 934.9,843.7 C935.2,846.5 935.3,849.1 937.2,852.1 C939,855 943.2,860.5 946.1,861.4 C949,862.4 953.3,860.6 954.6,857.8Z" fill="#fbd05a"/>
<path d="M955.4,860.3 C958.2,858.8 960.9,852.9 962,849.8 C963.1,846.6 962.4,844.2 961.9,841.6 C961.4,838.9 959.8,835.9 958.9,833.9 C957.9,832 957,830.7 956.4,829.7 C955.7,828.6 955.4,827.6 954.8,827.5 C954.2,827.4 953.7,828.3 952.7,829.2 C951.8,830 950.6,830.9 949.2,832.6 C947.7,834.3 945.4,836.7 944.2,839.1 C942.9,841.5 941.6,843.7 941.8,847 C942,850.3 943.1,856.7 945.3,858.9 C947.6,861.2 952.6,861.9 955.4,860.3Z" fill="#f8bb36"/>
<path d="M954.2,862.2 C957.2,861.9 961.9,857.9 964.1,855.6 C966.3,853.4 966.7,851 967.4,848.5 C968.1,846.1 968,842.9 968.1,840.8 C968.1,838.7 967.9,837.4 967.8,836.2 C967.7,835 967.9,834 967.4,833.7 C966.9,833.4 966.1,834 965,834.3 C963.9,834.7 962.5,835.1 960.6,835.9 C958.8,836.8 955.8,838 953.8,839.6 C951.8,841.2 949.8,842.6 948.6,845.5 C947.4,848.4 945.6,854.3 946.5,857.1 C947.4,859.9 951.3,862.4 954.2,862.2Z" fill="#ec9f2c"/>
<path d="M952.6,864.7 C955.9,866.3 964.2,865 968.4,864 C972.5,862.9 974.9,860.8 977.5,858.6 C980.2,856.4 982.6,852.9 984.3,850.8 C986,848.7 986.8,847 987.6,845.7 C988.5,844.4 989.4,843.5 989.2,842.9 C988.9,842.3 987.6,842.4 986.1,842.1 C984.5,841.7 982.8,841.2 980.1,841 C977.4,840.8 973.2,840.2 969.8,840.6 C966.4,841 963.2,841.2 959.6,843.6 C956,845.9 949.3,851 948.2,854.5 C947,858.1 949.2,863.2 952.6,864.7Z" fill="#f8bb36"/>
<path d="M949,865.5 C950.9,869 958.6,873 962.7,874.7 C966.8,876.4 970.1,876 973.6,875.7 C977.2,875.5 981.4,874 984.1,873.2 C986.8,872.3 988.5,871.4 990,870.8 C991.5,870.1 992.9,870 993,869.3 C993.2,868.6 992,867.8 991,866.6 C989.9,865.3 988.7,863.8 986.6,861.9 C984.5,860 981.4,856.8 978.3,855.1 C975.2,853.3 972.4,851.5 968,851.3 C963.5,851 954.8,851.4 951.7,853.8 C948.5,856.1 947.2,862 949,865.5Z" fill="#f8bb36"/>
<path d="M947,864.1 C947.3,867.7 952.4,874.2 955.3,877.3 C958.2,880.4 961.3,881.3 964.5,882.5 C967.7,883.7 971.8,884.1 974.5,884.5 C977.2,884.9 979,884.9 980.5,884.9 C982,884.9 983.3,885.3 983.7,884.8 C984.1,884.3 983.4,883.2 982.9,881.7 C982.4,880.2 982,878.5 980.9,876 C979.8,873.6 978.3,869.7 976.3,866.9 C974.2,864.2 972.5,861.5 968.7,859.6 C965,857.6 957.3,854.4 953.7,855.2 C950.1,855.9 946.8,860.4 947,864.1Z" fill="#ec9f2c"/>
<path d="M946,862.2 C944.9,865.4 946.9,872.7 948.3,876.4 C949.7,880 951.9,881.9 954.2,884.1 C956.4,886.3 959.8,888.1 961.9,889.4 C964.1,890.7 965.6,891.3 966.9,891.9 C968.2,892.5 969.1,893.3 969.6,893 C970.2,892.7 969.9,891.5 970.1,890 C970.2,888.6 970.5,887 970.4,884.5 C970.3,882 970.4,878.2 969.7,875.1 C968.9,872.1 968.4,869.2 965.9,866.2 C963.4,863.2 958.1,857.8 954.8,857.1 C951.5,856.4 947,859 946,862.2Z" fill="#f8bb36"/>
<path d="M944.9,860.3 C942.4,862.8 941.1,870.4 940.9,874.2 C940.6,878.1 942,880.7 943.3,883.6 C944.6,886.5 947.2,889.5 948.7,891.5 C950.3,893.5 951.5,894.6 952.6,895.7 C953.6,896.7 954.2,897.8 954.8,897.7 C955.5,897.6 955.8,896.4 956.5,895.2 C957.3,893.9 958.3,892.5 959.3,890.2 C960.3,887.9 962.1,884.4 962.7,881.3 C963.4,878.2 964.1,875.4 963,871.7 C961.8,867.9 958.9,860.9 955.9,859 C952.9,857.1 947.4,857.7 944.9,860.3Z" fill="#f8bb36"/>
<path d="M945.7,857.5 C942.5,858.4 937.8,864.2 935.7,867.3 C933.5,870.5 933.3,873.3 932.9,876.4 C932.5,879.4 933,883.1 933.2,885.5 C933.4,888 933.8,889.5 934.1,890.9 C934.4,892.3 934.3,893.4 934.8,893.7 C935.4,894 936.2,893.1 937.4,892.4 C938.6,891.7 940.1,891 942.1,889.6 C944,888.2 947.2,886.1 949.2,883.8 C951.2,881.5 953.2,879.5 954.2,875.8 C955.2,872.1 956.4,864.8 955,861.7 C953.6,858.7 949,856.6 945.7,857.5Z" fill="#ec9f2c"/>
<path d="M947.1,854.6 C943,853.6 934,856.9 929.5,858.9 C925,860.9 922.7,863.8 920.1,866.8 C917.5,869.7 915.3,874 913.8,876.7 C912.3,879.3 911.6,881.3 910.9,882.9 C910.2,884.5 909.2,885.7 909.6,886.3 C910,886.9 911.5,886.5 913.3,886.5 C915,886.5 917,886.7 920.1,886.3 C923.2,886 928,885.7 931.7,884.5 C935.5,883.3 939,882.3 942.7,879 C946.4,875.7 952.9,868.7 953.7,864.7 C954.4,860.6 951.1,855.6 947.1,854.6Z" fill="#f8bb36"/>
<path d="M948.9,854.8 C945.2,853.2 934.7,854.4 929.3,855.3 C923.9,856.3 920.5,858.3 916.7,860.4 C912.9,862.4 909,865.7 906.4,867.7 C903.9,869.7 902.4,871.2 901.1,872.5 C899.8,873.7 898.3,874.6 898.5,875.2 C898.7,875.8 900.4,875.7 902.2,876 C903.9,876.3 906,876.8 909.3,877.1 C912.5,877.3 917.5,877.9 921.8,877.5 C926.2,877.2 930.1,877 935.1,874.8 C940.1,872.7 949.5,867.9 951.8,864.5 C954.1,861.2 952.7,856.3 948.9,854.8Z" fill="#ec9f2c"/>
<path d="M950.7,857.1 C948,855.5 939,853.5 934.3,852.7 C929.6,851.8 926.2,851.9 922.4,852 C918.7,852 914.5,852.6 911.8,852.9 C909,853.2 907.4,853.6 905.9,853.8 C904.4,854.1 903,854.1 903,854.4 C902.9,854.8 904.3,855.1 905.7,855.7 C907.1,856.3 908.6,857 911.2,857.9 C913.8,858.7 917.8,860.2 921.4,861.1 C925.1,861.9 928.4,862.8 933.2,863 C938,863.2 947.2,863.2 950.1,862.2 C953,861.2 953.3,858.6 950.7,857.1Z" fill="#fbd05a"/>
<path d="M951.9,858 C951.2,855.9 947.2,851.2 945.1,848.8 C942.9,846.5 940.9,845.2 938.8,843.8 C936.7,842.4 934.1,841.3 932.4,840.4 C930.7,839.6 929.6,839.2 928.6,838.8 C927.7,838.5 926.8,838 926.7,838.1 C926.5,838.3 927.1,839.1 927.6,840 C928,840.9 928.5,842 929.5,843.6 C930.5,845.2 931.9,847.7 933.5,849.6 C935.1,851.6 936.5,853.5 939.1,855.4 C941.6,857.3 946.7,860.8 948.9,861.3 C951,861.7 952.5,860.1 951.9,858Z" fill="#fbd05a"/>
<path d="M952.4,860.5 C954,859.6 956.8,855.4 958.1,853.1 C959.4,850.9 959.7,849 960.2,847 C960.6,845 960.7,842.6 960.8,841 C960.9,839.5 960.9,838.5 960.9,837.7 C960.8,836.8 961,836 960.7,835.9 C960.5,835.8 960,836.5 959.4,837 C958.7,837.6 958,838.2 956.9,839.3 C955.9,840.5 954.2,842.1 953,843.8 C951.8,845.5 950.7,847.1 949.9,849.6 C949.1,852 947.9,856.9 948.3,858.7 C948.7,860.6 950.8,861.5 952.4,860.5Z" fill="#fbd05a"/>
<path d="M950.8,862.2 C952.8,863.2 958.9,863.1 962.1,862.9 C965.3,862.7 967.4,861.9 969.8,861 C972.2,860.2 974.6,858.7 976.3,857.8 C978,856.9 978.9,856.2 979.8,855.7 C980.6,855.1 981.5,854.8 981.5,854.4 C981.4,854.1 980.5,854.1 979.5,853.8 C978.5,853.6 977.3,853.2 975.5,852.9 C973.6,852.6 970.8,852.1 968.3,852 C965.8,852 963.5,851.9 960.4,852.7 C957.3,853.5 951.5,855.5 949.9,857.1 C948.3,858.7 948.8,861.2 950.8,862.2Z" fill="#fbd05a"/>
<path d="M949.2,861.5 C950.3,863.5 955.3,867.5 957.9,869.4 C960.6,871.3 962.8,872.2 965.2,873.2 C967.6,874.2 970.5,874.9 972.3,875.4 C974.2,875.9 975.4,876.1 976.4,876.3 C977.4,876.5 978.4,876.9 978.5,876.7 C978.7,876.4 977.9,875.8 977.2,875 C976.6,874.1 975.9,873.2 974.6,871.8 C973.2,870.4 971.3,868.2 969.3,866.5 C967.3,864.8 965.5,863.3 962.5,861.8 C959.6,860.3 953.7,857.8 951.5,857.7 C949.3,857.7 948.2,859.6 949.2,861.5Z" fill="#fbd05a"/>
<path d="M948.2,859.5 C947,861.2 945.8,867 945.4,870 C945,873.1 945.3,875.3 945.6,877.7 C945.8,880.1 946.6,882.7 947,884.4 C947.5,886.2 947.9,887.2 948.2,888.1 C948.5,889.1 948.6,890 948.9,890 C949.2,890 949.4,889.1 949.8,888.2 C950.2,887.3 950.7,886.3 951.3,884.6 C951.9,882.9 952.9,880.4 953.4,878 C953.9,875.7 954.4,873.5 954.3,870.5 C954.2,867.4 953.6,861.6 952.6,859.7 C951.6,857.9 949.3,857.8 948.2,859.5Z" fill="#fbd05a"/>
<path d="M948.8,857.6 C946.4,857.8 940.4,861.1 937.4,863 C934.4,864.9 932.6,866.9 930.7,868.9 C928.8,870.9 927,873.6 925.8,875.3 C924.6,877 923.9,878.1 923.3,879.1 C922.8,880.1 922,880.9 922.2,881.1 C922.4,881.4 923.4,880.9 924.5,880.6 C925.6,880.2 926.8,880 928.8,879.2 C930.8,878.5 933.8,877.5 936.2,876.1 C938.7,874.8 941,873.7 943.7,871.3 C946.3,868.9 951.1,864 951.9,861.7 C952.8,859.4 951.2,857.3 948.8,857.6Z" fill="#fbd05a"/>
<path d="M949.9,861.4 C951.9,862.8 958.8,865.2 962.5,866.3 C966.1,867.5 968.9,867.7 971.8,868.1 C974.8,868.5 978.1,868.6 980.3,868.6 C982.5,868.7 983.8,868.7 985,868.6 C986.2,868.6 987.4,868.7 987.4,868.5 C987.5,868.3 986.4,867.9 985.3,867.3 C984.3,866.8 983.2,866.1 981.2,865.2 C979.2,864.3 976.2,862.8 973.4,861.8 C970.5,860.8 968,859.8 964.2,859.1 C960.4,858.5 953.2,857.4 950.8,857.8 C948.4,858.2 948,860 949.9,861.4Z" fill="#ec9f2c"/>
<path d="M950.8,858.2 C948.9,856.8 942,853.9 938.4,852.4 C934.7,851 932,850.3 929,849.6 C926,848.9 922.7,848.3 920.5,848 C918.2,847.6 916.9,847.4 915.7,847.3 C914.5,847.1 913.4,846.9 913.3,847 C913.3,847.2 914.3,847.7 915.4,848.3 C916.4,848.9 917.6,849.6 919.5,850.7 C921.5,851.7 924.5,853.3 927.3,854.5 C930.1,855.8 932.7,856.9 936.5,858 C940.2,859.1 947.5,861 949.9,861 C952.3,861.1 952.8,859.7 950.8,858.2Z" fill="#ec9f2c"/>
<path d="M949.1,860.3 C949.2,862.1 951.3,867.1 952.4,869.6 C953.6,872.1 954.8,873.8 956.1,875.5 C957.4,877.3 959,879.1 960.1,880.4 C961.1,881.6 961.8,882.2 962.4,882.9 C963,883.5 963.5,884.2 963.7,884.1 C963.9,884 963.6,883.2 963.4,882.4 C963.2,881.5 963,880.5 962.6,879 C962.1,877.4 961.5,875.1 960.7,873 C959.8,871 959.1,869.1 957.6,866.8 C956.1,864.4 953.1,860 951.7,858.9 C950.2,857.8 948.9,858.6 949.1,860.3Z" fill="#ec9f2c"/></g>
<circle cx="950.4" cy="859.6" r="17.5" fill="#f3ad3a"/>
<line x1="960.1" y1="860.1" x2="966.6" y2="860.4" stroke="#c65a22" stroke-width="1.5" stroke-linecap="round"/>
<line x1="959.9" y1="861.7" x2="967.2" y2="863.3" stroke="#a93a1c" stroke-width="1.5" stroke-linecap="round"/>
<line x1="959.3" y1="863.3" x2="967.1" y2="866.5" stroke="#c65a22" stroke-width="1.5" stroke-linecap="round"/>
<line x1="958.4" y1="864.7" x2="963.8" y2="868.1" stroke="#a93a1c" stroke-width="1.5" stroke-linecap="round"/>
<line x1="957.3" y1="866" x2="962.6" y2="870.9" stroke="#c65a22" stroke-width="1.5" stroke-linecap="round"/>
<line x1="955.9" y1="867.1" x2="960.7" y2="873.6" stroke="#a93a1c" stroke-width="1.5" stroke-linecap="round"/>
<line x1="954.3" y1="867.9" x2="956.9" y2="873.4" stroke="#c65a22" stroke-width="1.5" stroke-linecap="round"/>
<line x1="952.6" y1="868.4" x2="954.3" y2="875.2" stroke="#a93a1c" stroke-width="1.5" stroke-linecap="round"/>
<line x1="950.8" y1="868.6" x2="951.1" y2="876.5" stroke="#c65a22" stroke-width="1.5" stroke-linecap="round"/>
<line x1="949" y1="868.5" x2="948.1" y2="874.5" stroke="#a93a1c" stroke-width="1.5" stroke-linecap="round"/>
<line x1="947.2" y1="868.1" x2="944.8" y2="874.7" stroke="#c65a22" stroke-width="1.5" stroke-linecap="round"/>
<line x1="945.6" y1="867.5" x2="941.4" y2="874.4" stroke="#a93a1c" stroke-width="1.5" stroke-linecap="round"/>
<line x1="944.1" y1="866.5" x2="939.9" y2="871.1" stroke="#c65a22" stroke-width="1.5" stroke-linecap="round"/>
<line x1="942.8" y1="865.4" x2="937" y2="869.8" stroke="#a93a1c" stroke-width="1.5" stroke-linecap="round"/>
<line x1="941.8" y1="864" x2="934.3" y2="867.8" stroke="#c65a22" stroke-width="1.5" stroke-linecap="round"/>
<line x1="941.1" y1="862.5" x2="934.9" y2="864.3" stroke="#a93a1c" stroke-width="1.5" stroke-linecap="round"/>
<line x1="940.7" y1="860.8" x2="933.2" y2="861.8" stroke="#c65a22" stroke-width="1.5" stroke-linecap="round"/>
<line x1="940.6" y1="859.2" x2="932" y2="858.8" stroke="#a93a1c" stroke-width="1.5" stroke-linecap="round"/>
<line x1="940.9" y1="857.5" x2="934.5" y2="856.1" stroke="#c65a22" stroke-width="1.5" stroke-linecap="round"/>
<line x1="941.4" y1="856" x2="934.5" y2="853.1" stroke="#a93a1c" stroke-width="1.5" stroke-linecap="round"/>
<line x1="942.3" y1="854.5" x2="935.3" y2="850" stroke="#c65a22" stroke-width="1.5" stroke-linecap="round"/>
<line x1="943.5" y1="853.2" x2="938.9" y2="849" stroke="#a93a1c" stroke-width="1.5" stroke-linecap="round"/>
<line x1="944.9" y1="852.2" x2="940.6" y2="846.4" stroke="#c65a22" stroke-width="1.5" stroke-linecap="round"/>
<line x1="946.5" y1="851.4" x2="943" y2="844.1" stroke="#a93a1c" stroke-width="1.5" stroke-linecap="round"/>
<line x1="948.2" y1="850.9" x2="946.7" y2="845" stroke="#c65a22" stroke-width="1.5" stroke-linecap="round"/>
<line x1="950" y1="850.6" x2="949.6" y2="843.7" stroke="#a93a1c" stroke-width="1.5" stroke-linecap="round"/>
<line x1="951.8" y1="850.7" x2="953" y2="842.9" stroke="#c65a22" stroke-width="1.5" stroke-linecap="round"/>
<line x1="953.5" y1="851.1" x2="955.6" y2="845.4" stroke="#a93a1c" stroke-width="1.5" stroke-linecap="round"/>
<line x1="955.2" y1="851.8" x2="958.9" y2="845.7" stroke="#c65a22" stroke-width="1.5" stroke-linecap="round"/>
<line x1="956.6" y1="852.7" x2="962.2" y2="846.7" stroke="#a93a1c" stroke-width="1.5" stroke-linecap="round"/>
<line x1="957.9" y1="853.9" x2="962.9" y2="850.1" stroke="#c65a22" stroke-width="1.5" stroke-linecap="round"/>
<line x1="958.9" y1="855.3" x2="965.5" y2="851.9" stroke="#a93a1c" stroke-width="1.5" stroke-linecap="round"/>
<line x1="959.7" y1="856.8" x2="967.8" y2="854.3" stroke="#c65a22" stroke-width="1.5" stroke-linecap="round"/>
<line x1="960.1" y1="858.4" x2="966.5" y2="857.6" stroke="#a93a1c" stroke-width="1.5" stroke-linecap="round"/>
<circle cx="968.1" cy="862.9" r="0.9" fill="#fff6e0"/>
<circle cx="965.6" cy="868.6" r="0.9" fill="#fff6e0"/>
<circle cx="961" cy="873" r="0.9" fill="#fff6e0"/>
<circle cx="955.1" cy="875.7" r="0.9" fill="#fff6e0"/>
<circle cx="948.4" cy="876.2" r="0.9" fill="#fff6e0"/>
<circle cx="942.1" cy="874.4" r="0.9" fill="#fff6e0"/>
<circle cx="936.8" cy="870.6" r="0.9" fill="#fff6e0"/>
<circle cx="933.4" cy="865.4" r="0.9" fill="#fff6e0"/>
<circle cx="932.3" cy="859.4" r="0.9" fill="#fff6e0"/>
<circle cx="933.6" cy="853.4" r="0.9" fill="#fff6e0"/>
<circle cx="937.2" cy="848.2" r="0.9" fill="#fff6e0"/>
<circle cx="942.6" cy="844.6" r="0.9" fill="#fff6e0"/>
<circle cx="949" cy="843.1" r="0.9" fill="#fff6e0"/>
<circle cx="955.6" cy="843.7" r="0.9" fill="#fff6e0"/>
<circle cx="961.5" cy="846.5" r="0.9" fill="#fff6e0"/>
<circle cx="965.9" cy="851.1" r="0.9" fill="#fff6e0"/>
<circle cx="968.2" cy="856.8" r="0.9" fill="#fff6e0"/>
<ellipse cx="950.4" cy="859.6" rx="10.7" ry="10.1" fill="url(#fc)"/>
<circle cx="955.6" cy="861.1" r="2.2" fill="#6f8a6f"/>
<circle cx="950.7" cy="854.4" r="1.2" fill="#6f8a6f"/>
<circle cx="946.7" cy="862.6" r="1.3" fill="#6f8a6f"/>
<circle cx="957.8" cy="855.9" r="1" fill="#6f8a6f"/>
<path d="M954.8,858.1 C955.7,858.1 958.1,860.7 958.1,861.9 C958.1,863 955.7,865.1 954.8,865.1 C953.9,865.1 952.6,863 952.6,861.9 C952.6,860.7 953.9,858.1 954.8,858.1Z" fill="#7d9a86"/>
<g filter="url(#pencil)"><path d="M893.8,562 C893.8,561.5 893.1,558.6 893.8,557.8 C894.5,556.9 898.3,554.5 900,554.6 C901.7,554.6 906.7,556.6 908.6,558.3 C910.6,559.9 916.4,567.1 916.5,568.6 C916.7,570.1 912.1,571.2 909.9,571.1 C907.7,571.1 899.4,569.2 897.5,568.1 C895.7,567.1 894.3,562.7 893.8,562" fill="none" stroke="#15404c" stroke-width="2" stroke-linecap="round" stroke-linejoin="round"/>
<path d="M916.5,568.6 C916,566.3 913.5,552.1 911.6,548.4 C909.7,544.7 900.6,538.8 900,536.5 C899.4,534.2 904.6,528.7 906.2,528.6 C907.8,528.6 912.1,533 913.6,536 C915.1,539.1 918.6,550.8 919,554.6 C919.4,558.3 917.3,566.6 917,568.1" fill="none" stroke="#15404c" stroke-width="2" stroke-linecap="round" stroke-linejoin="round"/>
<path d="M917.5,568.6 C918.2,566.3 921.8,551.5 923.5,548.4 C925.2,545.3 930.6,542.2 932.1,542.2 C933.6,542.2 936.4,546.2 936.3,548.4 C936.2,550.6 932.9,558.7 930.9,561.2 C928.8,563.8 920,569.1 918.5,570.1" fill="none" stroke="#15404c" stroke-width="2" stroke-linecap="round" stroke-linejoin="round"/>
<path d="M933.3,558.8 C933.8,559.3 937.9,562.1 937.3,563.2 C936.7,564.4 931.4,567.3 928.4,568.6 C925.4,570 913.9,573.5 911.6,574.6 C909.3,575.7 909,577.6 908.6,578" fill="none" stroke="#15404c" stroke-width="2" stroke-linecap="round" stroke-linejoin="round"/></g>
<path d="M653.1,651.9 C654.9,654.7 660.7,663.4 664.2,669.1 C667.7,674.9 672.4,683.5 674.1,686.4" fill="none" stroke="#8a8f94" stroke-width="0.7" stroke-linecap="round" opacity="0.45"/>
<path d="M659.3,649.4 C660.9,652.3 665.8,660.1 669.1,666.7 C672.4,673.3 677.4,685.2 679,688.9" fill="none" stroke="#8a8f94" stroke-width="0.7" stroke-linecap="round" opacity="0.45"/>
<path d="M651.9,684 C653.9,684.4 659.7,686.2 664.2,686.4 C668.7,686.6 674.9,684 679,685.2 C683.1,686.4 687.2,692.4 688.9,693.8" fill="none" stroke="#8a8f94" stroke-width="0.7" stroke-linecap="round" opacity="0.45"/>
<path d="M646.9,711.1 C647.7,713.2 650.2,718.9 651.9,723.5 C653.5,728 656,735.8 656.8,738.3" fill="none" stroke="#8a8f94" stroke-width="0.7" stroke-linecap="round" opacity="0.45"/>
<path d="M669.1,772.8 C672,772.4 681.1,770 686.4,770.4 C691.8,770.8 697.1,772.8 701.2,775.3 C705.3,777.8 709.5,783.5 711.1,785.2" fill="none" stroke="#8a8f94" stroke-width="0.7" stroke-linecap="round" opacity="0.45"/>
<path d="M723.5,754.3 C723.9,757.4 724.7,766.9 725.9,772.8 C727.2,778.8 730,787.2 730.9,790.1" fill="none" stroke="#8a8f94" stroke-width="0.7" stroke-linecap="round" opacity="0.45"/>
<path d="M716,760.5 C716.9,763.6 720,772.8 721,779 C722,785.2 722,794.4 722.2,797.5" fill="none" stroke="#8a8f94" stroke-width="0.7" stroke-linecap="round" opacity="0.45"/>
<path d="M703.7,755.6 C704.1,758.4 704.9,766.3 706.2,772.8 C707.4,779.4 710.3,791.4 711.1,795.1" fill="none" stroke="#8a8f94" stroke-width="0.7" stroke-linecap="round" opacity="0.45"/>
<path d="M735.8,760.5 C736.6,763.6 738.7,772.8 740.7,779 C742.8,785.2 746.9,794.4 748.1,797.5" fill="none" stroke="#8a8f94" stroke-width="0.7" stroke-linecap="round" opacity="0.45"/>
<path d="M676.5,679 C679.4,678.6 688.1,675.3 693.8,676.5 C699.6,677.8 707,682.3 711.1,686.4 C715.2,690.5 717.3,698.8 718.5,701.2" fill="none" stroke="#8a8f94" stroke-width="0.7" stroke-linecap="round" opacity="0.45"/>
<path d="M686.4,785.2 C688.9,785.6 697.1,785.6 701.2,787.7 C705.3,789.7 709.5,795.9 711.1,797.5" fill="none" stroke="#8a8f94" stroke-width="0.7" stroke-linecap="round" opacity="0.45"/>
<path d="M1109,809.1 C1111.5,808.3 1118.5,805 1123.8,804.2 C1129.2,803.4 1135.3,803.4 1141.1,804.2 C1146.9,805 1155.5,808.3 1158.4,809.1" fill="none" stroke="#8a8f94" stroke-width="0.7" stroke-linecap="round" opacity="0.5"/>
<path d="M1116.4,806.7 C1119.7,805.8 1130,801.3 1136.2,801.7 C1142.3,802.1 1148.9,806.3 1153.5,809.1 C1158,812 1161.7,817.4 1163.3,819" fill="none" stroke="#8a8f94" stroke-width="0.7" stroke-linecap="round" opacity="0.5"/>
<path d="M1021.7,738.5 C1025,737.7 1033.3,734.7 1041.5,733.6 C1049.7,732.4 1061.6,731 1071.1,731.6 C1080.6,732.2 1093.7,736.3 1098.3,737.3" fill="none" stroke="#9a9ea0" stroke-width="0.8" stroke-linecap="round" opacity="0.5"/>
<path d="M1006.9,765.7 C1009.8,762.8 1017.2,752.9 1024.2,748.4 C1031.2,743.9 1044.8,740.2 1048.9,738.5" fill="none" stroke="#9a9ea0" stroke-width="0.8" stroke-linecap="round" opacity="0.5"/>
<defs><filter id="thick" x="-2%" y="-10%" width="104%" height="120%"><feOffset dx="-0.75" result="a"/><feOffset in="SourceGraphic" dx="0.75" result="b"/><feMerge><feMergeNode in="a"/><feMergeNode in="SourceGraphic"/><feMergeNode in="b"/></feMerge></filter></defs>
<g transform="rotate(-0.35 980 1150)" font-family="'DejaVu Sans ExtraLight','DejaVu Sans','Liberation Sans',sans-serif" font-weight="200" font-size="50.6" fill="#0f3f4b" stroke="#0f3f4b" stroke-width="0.62" stroke-linejoin="round" filter="url(#thick)"><text x="775.6" y="1167" textLength="50" lengthAdjust="spacingAndGlyphs">AND</text><text x="840" y="1167" textLength="12.7" lengthAdjust="spacingAndGlyphs">A</text><text x="868.3" y="1167" textLength="139.7" lengthAdjust="spacingAndGlyphs">FRIENDSHIP</text><text x="1025.6" y="1167" textLength="140.4" lengthAdjust="spacingAndGlyphs">BLOSSOMED</text><text x="1172" y="1167" textLength="19" lengthAdjust="spacingAndGlyphs" font-family="Liberation Sans, sans-serif" font-weight="bold" stroke="none" font-size="26">...</text></g>
<g filter="url(#chalk)"><path d="M1379.5,394.1 C1380.2,387.8 1386.9,380.8 1394.3,374.3 C1401.7,367.8 1421.1,352.1 1428.9,350.6 C1436.7,349.1 1441.7,357.9 1446.2,364.4 C1450.6,371 1457,387 1458.5,394.1 C1460,401.1 1462,404.7 1456,411.4 C1450.1,418 1426,434.8 1419,438.5 C1412,442.2 1413.6,439.4 1409.1,436 C1404.7,432.7 1393.8,422.6 1389.4,416.3 C1384.9,410 1378.8,400.4 1379.5,394.1Z" fill="#9daa9a"/>
<path d="M1401.7,539.8 C1401,535.3 1402.5,526.8 1409.1,517.5 C1415.8,508.3 1438,482.8 1446.2,478 C1454.3,473.2 1460,481.4 1463.5,485.4 C1466.9,489.5 1466.4,501.5 1469.4,505.2 C1472.3,508.9 1481.5,506.8 1483.2,510.1 C1484.9,513.5 1484.4,519.6 1480.7,527.4 C1477,535.2 1464.4,555.2 1458.5,562 C1452.6,568.8 1446.4,573.6 1441.2,572.8 C1436,572.1 1428,560.9 1424,557 C1419.9,553.2 1417.4,549.8 1414.1,547.2 C1410.7,544.6 1402.5,544.2 1401.7,539.8Z" fill="#efebe0"/>
<path d="M1443.7,621.2 C1445.2,616 1450.1,607.3 1456,601.5 C1462,595.7 1478,583.1 1483.2,582.7 C1488.4,582.3 1488.5,595.5 1490.6,599 C1492.7,602.6 1496.1,603.1 1497,606.4 C1498,609.8 1496.3,616.8 1497,621.2 C1497.8,625.7 1503.3,630.1 1502,636 C1500.6,642 1492.8,656.1 1488.1,660.7 C1483.5,665.3 1474.9,667.4 1470.9,666.7 C1466.8,665.9 1462.1,658.9 1461,655.8 C1459.9,652.7 1465.7,648.9 1463.5,645.9 C1461.2,643 1449.1,639.8 1446.2,636 C1443.2,632.3 1442.2,626.4 1443.7,621.2Z" fill="#e2a620"/>
<path d="M1452.6,734.8 C1453.7,730.4 1456.4,723.1 1461,720 C1465.6,716.9 1477.8,713.7 1483.2,714.1 C1488.6,714.4 1494.4,718.6 1497,722.5 C1499.6,726.3 1501.1,734.2 1500.5,739.8 C1499.9,745.3 1496,754.7 1493.1,759.5 C1490.1,764.3 1484.3,770.4 1480.7,771.9 C1477.2,773.3 1472,771.6 1469.4,769.4 C1466.8,767.2 1465.8,760 1463.5,757 C1461.1,754.1 1455.2,753 1453.6,749.6 C1452,746.3 1451.5,739.3 1452.6,734.8Z" fill="#0b3a47"/>
<path d="M1456,927.4 C1456.8,923.3 1459.4,916.3 1463.5,912.6 C1467.5,908.9 1477.3,903.8 1483.2,902.7 C1489.1,901.6 1500.1,902.6 1503,905.2 C1505.8,907.8 1501.6,915.2 1502,920 C1502.3,924.8 1506.8,931.7 1505.4,937.3 C1504.1,942.8 1496.8,952.4 1493.1,957 C1489.4,961.6 1483.9,967.2 1480.7,967.9 C1477.6,968.6 1474,965.1 1472.3,962 C1470.6,958.9 1471.5,950.5 1469.4,947.2 C1467.3,943.8 1460.5,942.7 1458.5,939.8 C1456.5,936.8 1455.3,931.5 1456,927.4Z" fill="#f1c9c2"/>
<path d="M1469.4,1041 C1471,1036.2 1474,1028 1478.3,1023.7 C1482.6,1019.4 1493.7,1013.1 1498,1012.3 C1502.3,1011.6 1505.1,1013 1506.9,1018.8 C1508.8,1024.5 1511.9,1042.7 1510.4,1050.9 C1508.9,1059 1501.9,1068.6 1497,1073.1 C1492.2,1077.5 1482.4,1080.5 1478.3,1080.5 C1474.1,1080.5 1471,1076.8 1469.4,1073.1 C1467.8,1069.4 1467.4,1060.6 1467.4,1055.8 C1467.4,1051 1467.8,1045.8 1469.4,1041Z" fill="#3a9793"/></g>
<!--ART-END-->
</g>
</svg>
<div id="topbar">
 <div id="gallery">Gallery</div>
 <div class="cbtn" style="left:192px"></div>
 <div class="cbtn" style="left:308px"></div>
 <div class="cbtn" style="left:424px"></div>
 <div class="cbtn" style="left:540px"></div>
</div>
<div id="side"></div>
<div class="track" style="top:441px;height:342px"></div>
<div class="track" style="top:946px;height:341px"></div>
<div class="knob" style="top:624px"></div>
<div class="knob" style="top:948px"></div>
<div id="sq"></div>
<svg id="chrome" viewBox="0 0 2160 1620" width="2160" height="1620">
<!--ICONS-START-->
<g fill="#9b9b9b">
 <!-- wrench -->
 <g transform="translate(224,44) rotate(45)">
  <path d="M-3.8,-2 L-3.8,20.4 A3.8,3.8 0 0 0 3.8,20.4 L3.8,-2 Z"/>
  <path d="M-5.2,-18.6 A10.6,10.6 0 1 0 5.2,-18.6 L5.2,-10 A5.2,5.2 0 0 1 -5.2,-10 Z"/>
 </g>
 <!-- magic wand -->
 <g transform="translate(340,44)">
  <g transform="rotate(-42.5)">
   <rect x="-19.6" y="1.4" width="21.2" height="6.8" rx="3.3"/>
   <rect x="-3" y="1.4" width="4.6" height="6.8"/>
   <rect x="3.6" y="1.4" width="12.4" height="6.8" rx="3"/>
   <rect x="3.6" y="1.4" width="5" height="6.8"/>
  </g>
  <path d="M-6.6,-16.2 Q-5.9,-8.6 2,-7.7 Q-5.9,-6.8 -6.6,1 Q-7.3,-6.8 -15.2,-7.7 Q-7.3,-8.6 -6.6,-16.2Z"/>
  <path d="M4.6,-17.4 Q5,-13.6 8.8,-13.2 Q5,-12.8 4.6,-9 Q4.2,-12.8 0.4,-13.2 Q4.2,-13.6 4.6,-17.4Z"/>
 </g>
 <!-- S selection -->
 <g transform="translate(456,44)" fill="none" stroke="#9b9b9b" stroke-width="6.2" stroke-linecap="round">
  <path d="M12.4,-13.2 L1.5,-13.2 Q-2.6,-13.2 -4.4,-11.8" />
  <path d="M-12.6,13.2 L-2,13.2 Q1.8,13.2 3.6,11.9" />
 </g>
 <path transform="translate(456,44)" d="M-2.4,-6.6 C-6.6,-7 -8,-3.4 -5.2,0.4 C-3.2,3.2 -2.6,4.6 -2.6,6.8 L4.8,6.8 C5,3.2 3.6,0.6 1.4,-2.4 C0.2,-4.2 -0.2,-5.4 0.4,-6.6 Z"/>
 <!-- arrow -->
 <g transform="translate(572,44)">
  <path d="M15.8,-15.8 L-12.6,-2.6 L-1.6,-0.8 L-15.2,12.6 A2.3,2.3 0 0 0 -12,15.8 L1.4,2.2 L2.6,12.8 Z"/>
 </g>
</g>
<!-- brush -->
<g fill="#0a74fb">
 <path d="M1580.2,18.8 C1581.2,24.5 1565,41.5 1546.2,53 L1544.2,50.2 C1553.5,34 1573.5,19.5 1580.2,18.8Z"/>
 <path d="M1543.2,53.2 C1546.2,55.4 1544.6,62.4 1538.6,66.4 C1533.6,69.4 1527,69.6 1523.8,67.8 C1528.6,65.4 1529.6,62.8 1531,59.2 C1533,54 1539.4,51.6 1543.2,53.2Z"/>
</g>
<g fill="#c9c9c9">
 <!-- smudge finger -->
 <path d="M1704.4,18.2 L1716,29.6 L1711.4,34.8 L1711.2,44.5 Q1710.6,50 1707,53.2 L1697.2,61.2 Q1694.4,62.8 1691,59.8 L1703,48.2 L1701.6,46.8 L1678.6,68.6 Q1677.4,69.8 1675.6,69.8 L1671,69.8 Q1667.6,69.6 1667.9,65.4 Q1668.2,63.6 1669.4,62 L1678,49.4 L1674.2,40 Q1673.2,37.2 1675.2,34.8 L1681.6,26.4 Q1683.2,24.4 1686,24.4 L1697.4,23.6 L1702,18.6 Q1703.2,17.4 1704.4,18.2Z"/>
 <!-- eraser -->
 <g transform="translate(1832,44) rotate(-45)">
  <path d="M-26.6,-11 L-15.2,-11 L-15.2,11 L-19,11 Q-26.6,11 -26.6,3.6Z"/>
  <path d="M-12.8,-11 L18.6,-11 Q26.6,-11 26.6,-3 L26.6,11 L-12.8,11Z"/>
 </g>
 <!-- layers -->
 <rect x="1959.6" y="19.8" width="36.8" height="36.6" rx="6"/>
 <rect x="1946" y="30" width="40.4" height="40.4" rx="8" fill="#1c1c1c"/>
 <rect x="1948" y="32" width="36.4" height="36.4" rx="6"/>
</g>
<!-- colour -->
<circle cx="2112" cy="44" r="29.8" fill="#003a46" stroke="#858585" stroke-width="2"/>
<!-- undo / redo -->
<g fill="none" stroke-width="3.4" stroke-linecap="round" stroke-linejoin="round">
 <path d="M29,1348 L49,1348 A9,9 0 0 0 49,1330 L37,1330" stroke="#9a9a9a"/>
 <path d="M55,1432 L35,1432 A9,9 0 0 1 35,1414 L47,1414" stroke="#353535"/>
</g>
<path d="M26.6,1330 L38,1322.8 L38,1337.2Z" fill="#9a9a9a" stroke="#9a9a9a" stroke-width="1.6" stroke-linejoin="round"/>
<path d="M57.4,1414 L46,1406.8 L46,1421.2Z" fill="#353535" stroke="#353535" stroke-width="1.6" stroke-linejoin="round"/>
<!--ICONS-END-->
</svg>
</body>
</html>
